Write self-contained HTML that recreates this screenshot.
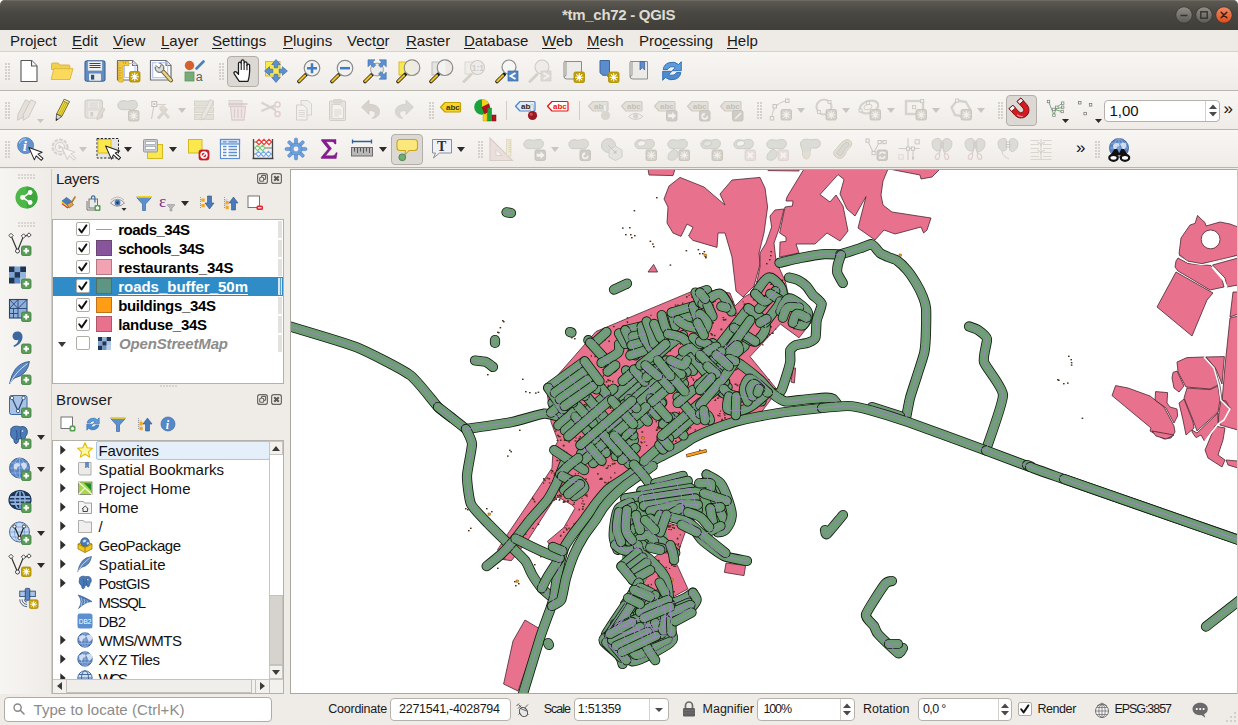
<!DOCTYPE html><html><head><meta charset="utf-8"><title>*tm_ch72 - QGIS</title><style>
html,body{margin:0;padding:0}
body{width:1238px;height:725px;overflow:hidden;background:#efebe7;font-family:"Liberation Sans",sans-serif;font-size:15px;color:#1a1a1a;position:relative}
.a{position:absolute}
.t{position:absolute;white-space:nowrap;line-height:1}
u{text-decoration:underline;text-underline-offset:2px;text-decoration-thickness:1px}
.tb{position:absolute;left:0;width:1238px;background:linear-gradient(#f8f6f3,#efece8)}
.sep{position:absolute;left:0;width:1238px;height:1px;background:#bab6b0}
.grip{position:absolute;width:5px;height:17px;background-image:radial-gradient(circle at 1px 1px,#c4bfb9 0.6px,transparent 0.9px);background-size:3px 3px}
.gripH{position:absolute;width:17px;height:5px;background-image:radial-gradient(circle at 1px 1px,#cbc6c0 0.6px,transparent 0.9px);background-size:3px 3px}
.ic{position:absolute;width:24px;height:24px;overflow:visible}
.ic16{position:absolute;width:16px;height:16px;overflow:visible}
.pressed{position:absolute;background:#dcd8d3;border:1px solid #b3aea7;border-radius:4px;box-sizing:border-box}
.dd{position:absolute;width:0;height:0;border-left:4.5px solid transparent;border-right:4.5px solid transparent;border-top:5px solid #2b2b2b}
.dd.dis{border-top-color:#c9c5c0}
.box{position:absolute;background:#fff;border:1px solid #b6b1aa;border-radius:4px;box-sizing:border-box}
.cb{position:absolute;width:14px;height:14px;background:#fff;border:1px solid #b0aca6;border-radius:2px;box-sizing:border-box}
</style></head><body>
<div class="a" style="left:0;top:0;width:1238px;height:8px;background:#fff"></div>
<div class="a" style="left:0;top:0;width:1238px;height:30px;background:linear-gradient(#5c5a52,#4a4843 40%,#3f3e3a);border-radius:5px 5px 0 0;box-shadow:inset 0 1px 0 #6d6a62"></div>
<div class="t" style="left:562.0px;top:7.0px;font-size:15px;letter-spacing:-0.289px;color:#dfdbd2;font-weight:bold;">*tm_ch72 - QGIS</div>
<svg class="a" style="left:1174px;top:5px;width:20px;height:20px" viewBox="0 0 20 20"><defs><linearGradient id="ggmin" x1="0" y1="0" x2="0" y2="1"><stop offset="0" stop-color="#8f8d85"/><stop offset="1" stop-color="#5e5c56"/></linearGradient></defs><circle cx="10" cy="10" r="8.6" fill="#3a3935"/><circle cx="10" cy="10" r="7.8" fill="url(#ggmin)"/><path d="M6.5 10.5h7" stroke="#34332f" stroke-width="1.5"/></svg>
<svg class="a" style="left:1194px;top:5px;width:20px;height:20px" viewBox="0 0 20 20"><defs><linearGradient id="ggmax" x1="0" y1="0" x2="0" y2="1"><stop offset="0" stop-color="#8f8d85"/><stop offset="1" stop-color="#5e5c56"/></linearGradient></defs><circle cx="10" cy="10" r="8.6" fill="#3a3935"/><circle cx="10" cy="10" r="7.8" fill="url(#ggmax)"/><rect x="6.8" y="6.8" width="6.4" height="6.4" fill="none" stroke="#34332f" stroke-width="1.4"/></svg>
<svg class="a" style="left:1214px;top:5px;width:20px;height:20px" viewBox="0 0 20 20"><defs><linearGradient id="gc" x1="0" y1="0" x2="0" y2="1"><stop offset="0" stop-color="#f08763"/><stop offset="1" stop-color="#df4d1b"/></linearGradient></defs><circle cx="10" cy="10" r="8.6" fill="#3a3935"/><circle cx="10" cy="10" r="7.8" fill="url(#gc)"/><path d="M7.2 7.2l5.6 5.6M12.8 7.2l-5.6 5.6" stroke="#3b1c10" stroke-width="1.5" stroke-linecap="round"/></svg>
<div class="a" style="left:0;top:30px;width:1238px;height:21px;background:#eeebe7"></div>
<div class="sep" style="top:51px;background:#d5d1cc"></div>
<div class="t" style="left:10px;top:33px;font-size:15px">Pro<u>j</u>ect</div>
<div class="t" style="left:72px;top:33px;font-size:15px"><u>E</u>dit</div>
<div class="t" style="left:113px;top:33px;font-size:15px"><u>V</u>iew</div>
<div class="t" style="left:161px;top:33px;font-size:15px"><u>L</u>ayer</div>
<div class="t" style="left:212px;top:33px;font-size:15px"><u>S</u>ettings</div>
<div class="t" style="left:283px;top:33px;font-size:15px"><u>P</u>lugins</div>
<div class="t" style="left:347px;top:33px;font-size:15px">Vect<u>o</u>r</div>
<div class="t" style="left:406px;top:33px;font-size:15px"><u>R</u>aster</div>
<div class="t" style="left:464px;top:33px;font-size:15px"><u>D</u>atabase</div>
<div class="t" style="left:542px;top:33px;font-size:15px"><u>W</u>eb</div>
<div class="t" style="left:587px;top:33px;font-size:15px"><u>M</u>esh</div>
<div class="t" style="left:639px;top:33px;font-size:15px">Pro<u>c</u>essing</div>
<div class="t" style="left:727px;top:33px;font-size:15px"><u>H</u>elp</div>
<div class="tb" style="top:52px;height:38px"></div><div class="sep" style="top:90px"></div>
<div class="tb" style="top:91px;height:38px"></div><div class="sep" style="top:129px"></div>
<div class="tb" style="top:130px;height:37px"></div><div class="sep" style="top:167px;background:#b7b3ad"></div>
<div class="grip" style="left:4.5px;top:62.5px"></div><svg class="a" style="left:17px;top:59px;width:24px;height:24px;overflow:visible" viewBox="0 0 24 24"><path d="M4 1.5h10.5l5.5 5.5v15.5h-16z" fill="#fff" stroke="#555" stroke-width="1.1" stroke-linejoin="round"/><path d="M14.5 1.5v5.5h5.5" fill="#f4f4f4" stroke="#555" stroke-width="1.1" stroke-linejoin="round"/></svg><svg class="a" style="left:50px;top:59px;width:24px;height:24px;overflow:visible" viewBox="0 0 24 24"><path d="M1.5 5.2q0-1.2 1.2-1.2h5.5l1.8 2h8.8q1 0 1 1v3.5h-18.3z" fill="#f3cf4e" stroke="#d9b03a" stroke-width="0.9"/><path d="M1.2 20.5l2.6-10.8h19.2l-3 10.8z" fill="#fad95b" stroke="#dcb440" stroke-width="0.9" stroke-linejoin="round"/></svg><svg class="a" style="left:83px;top:59px;width:24px;height:24px;overflow:visible" viewBox="0 0 24 24"><rect x="2" y="1.8" width="20" height="20.4" rx="2.2" fill="#5f8dc4" stroke="#3f6596" stroke-width="1.1"/><rect x="5" y="2.6" width="14" height="9" fill="#f1f1f1" stroke="#c8c8c8" stroke-width="0.5"/><path d="M6.500 4.500h11M6.500 6.500h11M6.500 8.500h11" stroke="#444" stroke-width="1"/><rect x="6" y="14.5" width="12" height="7.2" rx="0.8" fill="#e9e9e9"/><rect x="8" y="15.8" width="3.2" height="4.8" fill="#2f4f7d"/></svg><svg class="a" style="left:116px;top:59px;width:24px;height:24px;overflow:visible" viewBox="0 0 24 24"><path d="M1.500 1.500h15l5 5v14.500h-20z" fill="#fff" stroke="#6e6e6e" stroke-width="1.200" stroke-linejoin="round"/><path d="M16.500 1.500v5h5" fill="#f1f1f1" stroke="#6e6e6e" stroke-width="1.100" stroke-linejoin="round"/><rect x="8.500" y="4.500" width="10.500" height="14" fill="none" stroke="#b4c4f0" stroke-width="1"/><path d="M2.600 3.200q0-.800.800-.800h9.400v4.200h-5.600v15.800q0 .600-.600.600h-3.200q-.800 0-.800-.800z" fill="#f2c83c" stroke="#d3a51e" stroke-width="0.800"/><path d="M3 9h2.600M3 11.500h1.800M3 14h2.600M3 16.500h1.800M3 19h2.600M7.500 3v1.500M9.500 3v2" stroke="#c0941a" stroke-width="0.800"/><rect x="13.5" y="12.5" width="10.5" height="10.5" rx="1.6" fill="#c4a000" stroke="#a98b00" stroke-width="0.8"/><path d="M15.07 17.75L22.43 17.75M16.15 15.15L21.35 20.35M18.75 14.07L18.75 21.43M21.35 15.15L16.15 20.35" stroke="#fff" stroke-width="1.05" stroke-linecap="round"/><circle cx="18.75" cy="17.75" r="1.47" fill="#fff"/></svg><svg class="a" style="left:149px;top:59px;width:24px;height:24px;overflow:visible" viewBox="0 0 24 24"><path d="M1.500 1.500h15.500l5 5v14.500h-20.500z" fill="#fff" stroke="#6e6e6e" stroke-width="1.200" stroke-linejoin="round"/><path d="M17 1.500v5h5" fill="#f1f1f1" stroke="#6e6e6e" stroke-width="1.100" stroke-linejoin="round"/><rect x="3.700" y="3.700" width="15" height="15" fill="none" stroke="#aebff0" stroke-width="1.100"/><path d="M14 12.500l8 8.800" stroke="#6b5c2a" stroke-width="4.200" stroke-linecap="round"/><path d="M14 12.500l7.800 8.600" stroke="#e8d48a" stroke-width="2.600" stroke-linecap="round"/><circle cx="10.500" cy="9" r="4.400" fill="#d9d9d9" stroke="#555" stroke-width="1"/><path d="M10.400 9.400l-5-2.400l2.600-4.300l4.200 3.300z" fill="#fff"/><path d="M6.500 6.300l3.800 3l1.800-3.300" fill="none" stroke="#555" stroke-width="0.900" stroke-linejoin="round"/></svg><svg class="a" style="left:182px;top:59px;width:24px;height:24px;overflow:visible" viewBox="0 0 24 24"><circle cx="7.5" cy="6.5" r="4.7" fill="#d6602d"/><rect x="3" y="13" width="9" height="9" fill="#77ab79" stroke="#5c9460" stroke-width="0.8"/><path d="M14.5 9.5l7-7" stroke="#4a7fbe" stroke-width="2.6" stroke-linecap="round"/><text x="13.800" y="21.800" font-family="Liberation Sans,sans-serif" font-size="12.500" fill="#5e5e5e">a</text></svg><div class="grip" style="left:218.5px;top:62.5px"></div><div class="pressed" style="left:227px;top:56px;width:32px;height:31px"></div><svg class="a" style="left:231px;top:59px;width:24px;height:24px;overflow:visible" viewBox="0 0 24 24"><g transform="translate(-1.200 -1.400) scale(1.100)"><path d="M8.6 21.6c-1.2-1.6-3.4-5-4.6-6.8c-1-1.5 .9-2.9 2.2-1.5l1.7 2v-10c0-1.7 2.4-1.7 2.5 0v-1.8c0-1.8 2.6-1.8 2.6 0v1.600c.1-1.700 2.500-1.700 2.600 0v2c.1-1.600 2.300-1.500 2.400 0c.1 3.500 .5 8.500-1.500 14.500z" fill="#fff" stroke="#1c1c1c" stroke-width="1.15" stroke-linejoin="round"/><path d="M10.4 5.300v6M13 5.100v6.200M15.600 6.700v4.800" stroke="#1c1c1c" stroke-width="1"/></g></svg><svg class="a" style="left:264px;top:59px;width:24px;height:24px;overflow:visible" viewBox="0 0 24 24"><rect x="1.500" y="2.500" width="14.500" height="14.500" fill="#fbe84e" stroke="#d4b820" stroke-width="0.9"/><path transform="rotate(0 12 12)" d="M12 0.600l4.300 5h-2.500v3.200h-3.600v-3.200h-2.500z" fill="#5b8fd0" stroke="#3d6ca8" stroke-width="0.7" stroke-linejoin="round"/><path transform="rotate(90 12 12)" d="M12 0.600l4.300 5h-2.500v3.200h-3.600v-3.200h-2.500z" fill="#5b8fd0" stroke="#3d6ca8" stroke-width="0.7" stroke-linejoin="round"/><path transform="rotate(180 12 12)" d="M12 0.600l4.300 5h-2.500v3.200h-3.600v-3.200h-2.500z" fill="#5b8fd0" stroke="#3d6ca8" stroke-width="0.7" stroke-linejoin="round"/><path transform="rotate(270 12 12)" d="M12 0.600l4.300 5h-2.500v3.200h-3.600v-3.200h-2.500z" fill="#5b8fd0" stroke="#3d6ca8" stroke-width="0.7" stroke-linejoin="round"/></svg><svg class="a" style="left:297px;top:59px;width:24px;height:24px;overflow:visible" viewBox="0 0 24 24"><path d="M9.300 15.200L2 22.500" stroke="#1a1a1a" stroke-width="3.600" stroke-linecap="round"/><path d="M8 16.500L2.200 22.300" stroke="#f0c020" stroke-width="2.200" stroke-linecap="round"/><circle cx="15" cy="9.2" r="7.8" fill="#f2f2f0" stroke="#8a8a86" stroke-width="1.2"/><path d="M10 9.200h10M15 4.200v10" stroke="#3f7cc4" stroke-width="2.500"/></svg><svg class="a" style="left:330px;top:59px;width:24px;height:24px;overflow:visible" viewBox="0 0 24 24"><path d="M9.300 15.200L2 22.500" stroke="#1a1a1a" stroke-width="3.600" stroke-linecap="round"/><path d="M8 16.500L2.200 22.300" stroke="#f0c020" stroke-width="2.200" stroke-linecap="round"/><circle cx="15" cy="9.2" r="7.8" fill="#f2f2f0" stroke="#8a8a86" stroke-width="1.2"/><path d="M10 9.200h10" stroke="#3f7cc4" stroke-width="2.500"/></svg><svg class="a" style="left:363px;top:59px;width:24px;height:24px;overflow:visible" viewBox="0 0 24 24"><path d="M9.300 15.200L2 22.500" stroke="#1a1a1a" stroke-width="3.600" stroke-linecap="round"/><path d="M8 16.500L2.200 22.300" stroke="#f0c020" stroke-width="2.200" stroke-linecap="round"/><circle cx="14" cy="10.500" r="6.400" fill="#ececea" stroke="#9a9a96" stroke-width="1"/><path d="M5 0.800h7l-2.300 2.300l3 3l-2.400 2.400l-3-3l-2.300 2.300z" fill="#5b8fd0" stroke="#3d6ca8" stroke-width="0.600"/><path d="M23.200 0.800v7l-2.300-2.300l-3 3l-2.400-2.400l3-3l-2.300-2.300z" fill="#5b8fd0" stroke="#3d6ca8" stroke-width="0.600"/><path d="M23.200 20.200h-7l2.300-2.300l-3-3l2.400-2.400l3 3l2.300-2.300z" fill="#5b8fd0" stroke="#3d6ca8" stroke-width="0.600"/></svg><svg class="a" style="left:396px;top:59px;width:24px;height:24px;overflow:visible" viewBox="0 0 24 24"><rect x="3" y="3" width="12" height="13" fill="#fbe84e" stroke="#d4b820" stroke-width="0.9"/><path d="M9.300 15.200L2 22.500" stroke="#1a1a1a" stroke-width="3.600" stroke-linecap="round"/><path d="M8 16.500L2.200 22.300" stroke="#f0c020" stroke-width="2.200" stroke-linecap="round"/><circle cx="16" cy="8.7" r="7.8" fill="#eceae6" stroke="#8a8a86" stroke-width="1.2"/><path d="M16.500 1.400a7.300 7.300 0 0 0 0 14.600z" fill="#f0ecd4" opacity=".85"/></svg><svg class="a" style="left:429px;top:59px;width:24px;height:24px;overflow:visible" viewBox="0 0 24 24"><rect x="3" y="3" width="12" height="13" fill="#e4e4e2" stroke="#b9b9b5" stroke-width="0.9"/><path d="M9.300 15.200L2 22.500" stroke="#1a1a1a" stroke-width="3.600" stroke-linecap="round"/><path d="M8 16.500L2.200 22.300" stroke="#f0c020" stroke-width="2.200" stroke-linecap="round"/><circle cx="16" cy="8.7" r="7.8" fill="#eceae6" stroke="#8a8a86" stroke-width="1.2"/><path d="M16.500 1.400a7.300 7.300 0 0 0 0 14.600z" fill="#f4f4f2" opacity=".9"/></svg><svg class="a" style="left:462px;top:59px;width:24px;height:24px;overflow:visible" viewBox="0 0 24 24"><rect x="3" y="3" width="12" height="12" fill="#efede9" stroke="#d6d2cc" stroke-width="0.8"/><path d="M9 15.5L2 22.500" stroke="#d5d1ca" stroke-width="3" stroke-linecap="round"/><circle cx="15.5" cy="8.5" r="7" fill="#eeece9" stroke="#cfcbc5" stroke-width="1.1"/><text x="9.800" y="12.200" font-family="Liberation Sans,sans-serif" font-weight="bold" font-size="8.500" fill="#cfcbc5">1:1</text></svg><svg class="a" style="left:495px;top:59px;width:24px;height:24px;overflow:visible" viewBox="0 0 24 24"><path d="M9.300 15.200L2 22.500" stroke="#1a1a1a" stroke-width="3.600" stroke-linecap="round"/><path d="M8 16.500L2.200 22.300" stroke="#f0c020" stroke-width="2.200" stroke-linecap="round"/><circle cx="14" cy="8" r="7" fill="#f6f6f4" stroke="#8a8a86" stroke-width="1.2"/><rect x="13" y="12" width="10" height="10" fill="#4f86c6" stroke="#3a69a4" stroke-width="0.700"/><path d="M20.500 14l-5 3l5 3" fill="none" stroke="#fff" stroke-width="1.900"/></svg><svg class="a" style="left:528px;top:59px;width:24px;height:24px;overflow:visible" viewBox="0 0 24 24"><path d="M9 15.5L2 22.500" stroke="#d5d1ca" stroke-width="3" stroke-linecap="round"/><circle cx="14" cy="8" r="7" fill="#eeece9" stroke="#cfcbc5" stroke-width="1.1"/><rect x="13" y="12" width="10" height="10" fill="#dcd9d4" stroke="#d0ccc6" stroke-width="0.700"/><path d="M15.500 14l5 3l-5 3" fill="none" stroke="#f3f1ee" stroke-width="1.900"/></svg><svg class="a" style="left:561px;top:59px;width:24px;height:24px;overflow:visible" viewBox="0 0 24 24"><path d="M5 2.500h15.500v17.500h-14.500q-3 .3-3-2.800v-14q.2-1.500 2-.7z" fill="#ecebe8" stroke="#8c8c88" stroke-width="1" stroke-linejoin="round"/><path d="M5 2.500v14q-1.700 .1-2 1.600" fill="none" stroke="#8c8c88" stroke-width="0.900"/><rect x="13" y="13" width="10.5" height="10.5" rx="1.6" fill="#c4a000" stroke="#a98b00" stroke-width="0.8"/><path d="M14.57 18.25L21.93 18.25M15.65 15.65L20.85 20.85M18.25 14.57L18.25 21.93M20.85 15.65L15.65 20.85" stroke="#fff" stroke-width="1.05" stroke-linecap="round"/><circle cx="18.25" cy="18.25" r="1.47" fill="#fff"/></svg><svg class="a" style="left:596px;top:59px;width:24px;height:24px;overflow:visible" viewBox="0 0 24 24"><path d="M1.500 1.500h9.500v17l-3-2.200h-3.700l-2.800-2.500z" fill="#5b8ccc" stroke="#3c679f" stroke-width="1" stroke-linejoin="round" transform="translate(2.500 0)"/><rect x="12.5" y="13" width="10.5" height="10.5" rx="1.6" fill="#c4a000" stroke="#a98b00" stroke-width="0.8"/><path d="M14.07 18.25L21.43 18.25M15.15 15.65L20.35 20.85M17.75 14.57L17.75 21.93M20.35 15.65L15.15 20.85" stroke="#fff" stroke-width="1.05" stroke-linecap="round"/><circle cx="17.75" cy="18.25" r="1.47" fill="#fff"/></svg><svg class="a" style="left:627px;top:59px;width:24px;height:24px;overflow:visible" viewBox="0 0 24 24"><path d="M5 2.500h15.500v17.500h-14.500q-3 .3-3-2.800v-14q.2-1.500 2-.7z" fill="#ecebe8" stroke="#8c8c88" stroke-width="1" stroke-linejoin="round"/><path d="M5 2.500v14q-1.700 .1-2 1.600" fill="none" stroke="#8c8c88" stroke-width="0.900"/><path d="M13 2.500h4.600v8.500l-2.300-2.400l-2.300 2.400z" fill="#5b8ccc" stroke="#3c679f" stroke-width="0.800"/></svg><svg class="a" style="left:660px;top:59px;width:24px;height:24px;overflow:visible" viewBox="0 0 24 24"><path d="M3.200 10.500a9 8 0 0 1 15.300-5l2.800-2.800v9h-9.200l3.200-3.200a5.200 4.500 0 0 0-7.800 2z" fill="#5d9bdc" stroke="#2f6cb0" stroke-width="0.900" stroke-linejoin="round"/><path d="M20.800 13.500a9 8 0 0 1-15.300 5l-2.800 2.800v-9h9.200l-3.200 3.200a5.200 4.500 0 0 0 7.800-2z" fill="#4c8bd0" stroke="#2f6cb0" stroke-width="0.900" stroke-linejoin="round"/></svg><div class="grip" style="left:4.5px;top:101.5px"></div><svg class="a" style="left:16px;top:98px;width:24px;height:24px;overflow:visible" viewBox="0 0 24 24"><path transform="translate(-4 0)" d="M13.500 1.800l5 2.300l-7.500 15l-5.500 3.200l.5-6.200z" fill="#e4dfd9" stroke="#c6c2bc" stroke-width="0.800" stroke-linejoin="round"/><path transform="translate(1.5 0)" d="M13.500 1.800l5 2.300l-7.500 15l-5.500 3.200l.5-6.200z" fill="#e9e4de" stroke="#c6c2bc" stroke-width="0.800" stroke-linejoin="round"/></svg><svg class="a" style="left:49.5px;top:98px;width:24px;height:24px;overflow:visible" viewBox="0 0 24 24"><path d="M14.200 1.300l5.200 2.400l-7.600 14.800l-5.200-2.500z" fill="#f0da3c" stroke="#6b6420" stroke-width="0.900" stroke-linejoin="round"/><path d="M16 2.200l-7.500 14.800M17.800 3l-7.600 14.800" stroke="#b3a320" stroke-width="0.800"/><path d="M14.200 1.300l5.200 2.400l-.9 1.800l-5.200-2.500z" fill="#f8f4c8" stroke="#6b6420" stroke-width="0.700"/><path d="M6.600 16l5.200 2.500l-5.800 4.200z" fill="#d8d8d8" stroke="#444" stroke-width="0.800" stroke-linejoin="round"/><path d="M6.200 20.200l2 1l-2.200 1.500z" fill="#222"/></svg><svg class="a" style="left:83px;top:98px;width:24px;height:24px;overflow:visible" viewBox="0 0 24 24"><rect x="2" y="2" width="17.500" height="18" rx="2" fill="#e2dfda" stroke="#cfcbc5" stroke-width="1"/><rect x="5" y="3" width="11.500" height="7.500" fill="#efedea" stroke="#d6d2cd" stroke-width="0.500"/><path d="M6.500 5h8.500M6.500 7h8.500M6.500 9h8.500" stroke="#d0ccc6" stroke-width="0.800"/><rect x="5.500" y="13" width="10" height="6.500" fill="#edebe7"/><rect x="7.500" y="14" width="2.600" height="4.400" fill="#d0ccc6"/><path d="M19 9.500l3 1.500l-5 9l-3 2l.2-3.500z" fill="#e2d9d2" stroke="#cfc6bf" stroke-width="0.700"/></svg><svg class="a" style="left:116px;top:98px;width:24px;height:24px;overflow:visible" viewBox="0 0 24 24"><path d="M2 8.500c-1-4 3-6.800 7.500-5.500c3 .9 4.500-.8 8-.6c4 .3 4.800 4.600 3 7.300c-1.500 2.200-5 2.600-8.500 2c-3.500-.5-8.700 1.300-10-3.200z" fill="#dcdcd6" stroke="#c6c6c0" stroke-width="0.900"/><rect x="12.5" y="12.5" width="10.5" height="10.5" rx="1.6" fill="#d4d0c8" stroke="#c4bfb6" stroke-width="0.8"/><path d="M14.07 17.75L21.43 17.75M15.15 15.15L20.35 20.35M17.75 14.07L17.75 21.43M20.35 15.15L15.15 20.35" stroke="#f1efec" stroke-width="1.05" stroke-linecap="round"/><circle cx="17.75" cy="17.75" r="1.47" fill="#f1efec"/></svg><svg class="a" style="left:149px;top:98px;width:24px;height:24px;overflow:visible" viewBox="0 0 24 24"><path d="M5 7l-2.500 14" stroke="#cfcbc5" stroke-width="1"/><path d="M6 6.500h11" stroke="#d9cfcb" stroke-width="1.100"/><rect x="2.800" y="3.500" width="5" height="5" fill="#f3f1ee" stroke="#c2beb8" stroke-width="1"/><circle cx="5.300" cy="6" r="1" fill="#c2beb8"/><path d="M9 20.500l9-10" stroke="#d8d4cd" stroke-width="3.200"/><path d="M11 10l9 10" stroke="#dbd7cf" stroke-width="3.200"/><path d="M9.500 8.500l5-1.500l3 3l-2.500 3z" fill="#dedad4"/></svg><svg class="a" style="left:193px;top:98px;width:24px;height:24px;overflow:visible" viewBox="0 0 24 24"><rect x="1.500" y="3" width="19" height="5" fill="#e3e0d6" stroke="#d3cfc5" stroke-width="0.800"/><rect x="1.500" y="9.700" width="19" height="5" fill="#e3e0d6" stroke="#d3cfc5" stroke-width="0.800"/><rect x="1.500" y="16.400" width="19" height="5" fill="#e3e0d6" stroke="#d3cfc5" stroke-width="0.800"/><path d="M17 1.500l3.500 1.700l-8 16l-4 2.800l.3-4.700z" fill="#e9e5e0" stroke="#d2cdc7" stroke-width="0.800"/></svg><svg class="a" style="left:226px;top:98px;width:24px;height:24px;overflow:visible" viewBox="0 0 24 24"><rect x="3" y="2.500" width="13" height="6" fill="#e6e3de" stroke="#d6d2cc" stroke-width="0.800"/><path d="M2.500 6h19" stroke="#d9c9c9" stroke-width="1.600"/><path d="M4.500 8.500h15l-1.500 13.500h-12z" fill="#efe6e6" stroke="#dccccc" stroke-width="1.300"/><path d="M8.500 10.500v9.500M12 10.500v9.500M15.500 10.500v9.500" stroke="#dccccc" stroke-width="1.300"/></svg><svg class="a" style="left:260px;top:98px;width:24px;height:24px;overflow:visible" viewBox="0 0 24 24"><path d="M1.500 4.500l14 7.500M1.500 13l13-5.500" stroke="#d7d3cd" stroke-width="2"/><circle cx="17.500" cy="6.500" r="2.600" fill="none" stroke="#e0cfcf" stroke-width="1.500"/><circle cx="17.500" cy="16" r="2.600" fill="none" stroke="#e0cfcf" stroke-width="1.500"/><path d="M13 9l3 5" stroke="#e0cfcf" stroke-width="1.500"/></svg><svg class="a" style="left:293px;top:98px;width:24px;height:24px;overflow:visible" viewBox="0 0 24 24"><path d="M8 2.500h7l3.500 3.500v11h-10.500z" fill="#f1efec" stroke="#d3cfc9" stroke-width="0.900"/><path d="M3.500 7h7l3.500 3.500v11.500h-10.500z" fill="#f3f1ee" stroke="#cfcbc5" stroke-width="0.900"/><path d="M5.500 12.500h6.500M5.500 14.500h6.500M5.500 16.500h6.500M5.500 18.500h6.500" stroke="#d6d2cc" stroke-width="0.800"/></svg><svg class="a" style="left:326px;top:98px;width:24px;height:24px;overflow:visible" viewBox="0 0 24 24"><rect x="3.500" y="3" width="16" height="19.500" rx="1" fill="#e7e4df" stroke="#d1cdc7" stroke-width="1"/><rect x="7.500" y="1.500" width="8" height="3.500" rx="0.800" fill="#dcd8d2" stroke="#d1cdc7" stroke-width="0.700"/><path d="M6 6.500h8l3.500 3v11h-11.500z" fill="#f4f2ef" stroke="#d1cdc7" stroke-width="0.800"/><path d="M8 12h7.500M8 14h7.500M8 16h7.500M8 18h5" stroke="#d6d2cc" stroke-width="0.800"/></svg><svg class="a" style="left:359px;top:98px;width:24px;height:24px;overflow:visible" viewBox="0 0 24 24"><path d="M2.500 9l7.500-7v4.300c6 0 10.500 2.500 10.500 7.200c0 4-3 6.500-7.500 6.800c2.500-1.500 3.300-3 3.300-4.500c0-2.200-2.500-3.300-6.300-3.300v4z" fill="#d8d2cd" stroke="#ccc6c1" stroke-width="0.700" stroke-linejoin="round"/></svg><svg class="a" style="left:392px;top:98px;width:24px;height:24px;overflow:visible" viewBox="0 0 24 24"><path d="M21.500 9l-7.500-7v4.300c-6 0-10.500 2.500-10.500 7.200c0 4 3 6.500 7.500 6.800c-2.500-1.500-3.300-3-3.300-4.500c0-2.200 2.500-3.300 6.300-3.300v4z" fill="#d7d8d3" stroke="#cbccc7" stroke-width="0.700" stroke-linejoin="round"/></svg><svg class="a" style="left:36.5px;top:119px;width:7px;height:4px" viewBox="0 0 7 4"><path d="M0 0h7l-3.500 4z" fill="#c9c5c0"/></svg><div class="dd dis" style="left:178px;top:108px"></div><div class="grip" style="left:429px;top:101.5px"></div><svg class="a" style="left:439px;top:98px;width:24px;height:24px;overflow:visible" viewBox="0 0 24 24"><path transform="translate(1 3)" d="M5 1.500h14.5q1 0 1 1v7.500q0 1-1 1h-14.5l-4.500-4.750z" fill="#f5d628" stroke="#c4a000" stroke-width="1.200" stroke-linejoin="round"/><text x="7" y="12.2" font-family="Liberation Sans,sans-serif" font-weight="bold" font-size="8" fill="#3a3000">abc</text></svg><svg class="a" style="left:473px;top:98px;width:24px;height:24px;overflow:visible" viewBox="0 0 24 24"><circle cx="9" cy="9" r="7.800" fill="#19a33a"/><path d="M9 9v-7.800a7.800 7.800 0 0 1 7 4.400z" fill="#f4d21c"/><path d="M9 9l7-3.400a7.800 7.800 0 0 1-4 10.600z" fill="#b5121b"/><path d="M9 9l3 7.200" stroke="#7a0c12" stroke-width="0.500"/><rect x="10" y="16" width="4" height="7" fill="#f4d21c" stroke="#c6a60e" stroke-width="0.500"/><rect x="14.500" y="10" width="4" height="13" fill="#19a33a" stroke="#0e7a27" stroke-width="0.500"/><rect x="19" y="17" width="4" height="6" fill="#b5121b" stroke="#7a0c12" stroke-width="0.500"/></svg><svg class="a" style="left:514px;top:98px;width:24px;height:24px;overflow:visible" viewBox="0 0 24 24"><path transform="translate(1 2)" d="M5 1.500h14q1 0 1 1v7.500q0 1-1 1h-14l-4.500-4.750z" fill="#e1ecfa" stroke="#4a86cf" stroke-width="1.200" stroke-linejoin="round"/><text x="7" y="11.2" font-family="Liberation Sans,sans-serif" font-weight="bold" font-size="8" fill="#222">ab</text><rect x="16.700" y="6.500" width="2.600" height="8" rx="1.300" fill="#f1f1f1" stroke="#9a9a9a" stroke-width="0.500"/><circle cx="18.500" cy="17.500" r="4.600" fill="#9a1a22"/><circle cx="17.200" cy="16.200" r="1.500" fill="#c4545b"/></svg><svg class="a" style="left:546px;top:98px;width:24px;height:24px;overflow:visible" viewBox="0 0 24 24"><path transform="translate(1 2)" d="M5 1.500h15q1 0 1 1v7.500q0 1-1 1h-15l-4.500-4.750z" fill="#fff" stroke="#e11" stroke-width="1.200" stroke-linejoin="round"/><text x="7" y="11.2" font-family="Liberation Sans,sans-serif" font-weight="bold" font-size="8" fill="#e11">abc</text></svg><svg class="a" style="left:587px;top:98px;width:24px;height:24px;overflow:visible" viewBox="0 0 24 24"><path transform="translate(1 2)" d="M5 1.500h14q1 0 1 1v7.500q0 1-1 1h-14l-4.500-4.750z" fill="#e3e0da" stroke="#d0ccc5" stroke-width="1.200" stroke-linejoin="round"/><text x="7" y="11.2" font-family="Liberation Sans,sans-serif" font-weight="bold" font-size="8" fill="#c3bfb8">ab</text><rect x="16.700" y="6.500" width="2.600" height="8" rx="1.300" fill="#f1f1f1" stroke="#d0ccc5" stroke-width="0.500"/><circle cx="18.500" cy="17.500" r="4.600" fill="#d9d5cf"/></svg><svg class="a" style="left:620px;top:98px;width:24px;height:24px;overflow:visible" viewBox="0 0 24 24"><path transform="translate(1 2)" d="M5 1.500h15q1 0 1 1v7.500q0 1-1 1h-15l-4.500-4.750z" fill="#e3e0da" stroke="#d0ccc5" stroke-width="1.200" stroke-linejoin="round"/><text x="7" y="11.2" font-family="Liberation Sans,sans-serif" font-weight="bold" font-size="8" fill="#c3bfb8">abc</text><path d="M8.500 18.500q7-6.500 14.500 0q-7.500 6-14.500 0z" fill="#f1efec" stroke="#cfcbc5" stroke-width="0.900"/><circle cx="15.700" cy="18.300" r="2.500" fill="#d6d2cc"/></svg><svg class="a" style="left:653px;top:98px;width:24px;height:24px;overflow:visible" viewBox="0 0 24 24"><path transform="translate(1 2)" d="M5 1.500h15q1 0 1 1v7.500q0 1-1 1h-15l-4.500-4.750z" fill="#e3e0da" stroke="#d0ccc5" stroke-width="1.200" stroke-linejoin="round"/><text x="7" y="11.2" font-family="Liberation Sans,sans-serif" font-weight="bold" font-size="8" fill="#c3bfb8">abc</text><rect x="13.5" y="12.5" width="10.5" height="10.5" rx="1.8" fill="#cfccc6" stroke="#c2beb7" stroke-width="0.8"/><path d="M15.1 16.25h4v-2.2l4 3.7l-4 3.7v-2.2h-4z" fill="#f3f1ee"/></svg><svg class="a" style="left:686px;top:98px;width:24px;height:24px;overflow:visible" viewBox="0 0 24 24"><path transform="translate(1 2)" d="M5 1.500h15q1 0 1 1v7.500q0 1-1 1h-15l-4.500-4.750z" fill="#e3e0da" stroke="#d0ccc5" stroke-width="1.200" stroke-linejoin="round"/><text x="7" y="11.2" font-family="Liberation Sans,sans-serif" font-weight="bold" font-size="8" fill="#c3bfb8">abc</text><rect x="13.5" y="12.5" width="10.5" height="10.5" rx="1.8" fill="#cfccc6" stroke="#c2beb7" stroke-width="0.8"/><path d="M21.35 18.35a2.6 2.6 0 1 1 -2.6 -2.6" fill="none" stroke="#f3f1ee" stroke-width="1.6"/><path d="M18.95 17.15l-2.6 0l1.3 -2.4z" fill="#f3f1ee"/></svg><svg class="a" style="left:719px;top:98px;width:24px;height:24px;overflow:visible" viewBox="0 0 24 24"><path transform="translate(1 2)" d="M5 1.500h15q1 0 1 1v7.500q0 1-1 1h-15l-4.500-4.750z" fill="#e3e0da" stroke="#d0ccc5" stroke-width="1.200" stroke-linejoin="round"/><text x="7" y="11.2" font-family="Liberation Sans,sans-serif" font-weight="bold" font-size="8" fill="#c3bfb8">abc</text><rect x="13.500" y="12.500" width="10.500" height="10.500" rx="1.800" fill="#cfccc6" stroke="#c2beb7" stroke-width="0.800"/><path d="M21.500 14.500l1 1l-5 5l-2 1l1-2z" fill="#f3f1ee"/></svg><div class="a" style="left:506px;top:101px;width:1px;height:19px;background:#d1cdc7"></div><div class="a" style="left:579px;top:101px;width:1px;height:19px;background:#d1cdc7"></div><div class="grip" style="left:756.5px;top:101.5px"></div><svg class="a" style="left:769px;top:98px;width:24px;height:24px;overflow:visible" viewBox="0 0 24 24"><path d="M3 20q0-14 15-17.500" fill="none" stroke="#d3d0ca" stroke-width="1.100"/><rect x="1.200" y="18.500" width="3.500" height="3.500" fill="#f1efec" stroke="#c9c5bf"/><rect x="4" y="6.500" width="3.500" height="3.500" fill="#f1efec" stroke="#c9c5bf"/><rect x="16.500" y="1" width="3.500" height="3.500" fill="#f1efec" stroke="#c9c5bf"/><rect x="12" y="11.5" width="10.5" height="10.5" rx="1.6" fill="#d4d0c8" stroke="#c4bfb6" stroke-width="0.8"/><path d="M13.57 16.75L20.93 16.75M14.65 14.15L19.85 19.35M17.25 13.07L17.25 20.43M19.85 14.15L14.65 19.35" stroke="#f1efec" stroke-width="1.05" stroke-linecap="round"/><circle cx="17.25" cy="16.75" r="1.47" fill="#f1efec"/></svg><div class="dd dis" style="left:796.5px;top:108px"></div><svg class="a" style="left:813.5px;top:98px;width:24px;height:24px;overflow:visible" viewBox="0 0 24 24"><circle cx="10" cy="9" r="7.500" fill="none" stroke="#d6d3cd" stroke-width="2.200"/><rect x="14" y="2.500" width="3" height="3" fill="#f1efec" stroke="#c9c5bf" stroke-width="0.800"/><rect x="3.500" y="12.500" width="3" height="3" fill="#f1efec" stroke="#c9c5bf" stroke-width="0.800"/><rect x="12" y="11.5" width="10.5" height="10.5" rx="1.6" fill="#d4d0c8" stroke="#c4bfb6" stroke-width="0.8"/><path d="M13.57 16.75L20.93 16.75M14.65 14.15L19.85 19.35M17.25 13.07L17.25 20.43M19.85 14.15L14.65 19.35" stroke="#f1efec" stroke-width="1.05" stroke-linecap="round"/><circle cx="17.25" cy="16.75" r="1.47" fill="#f1efec"/></svg><div class="dd dis" style="left:841.5px;top:108px"></div><svg class="a" style="left:858px;top:98px;width:24px;height:24px;overflow:visible" viewBox="0 0 24 24"><ellipse cx="11" cy="9" rx="9.500" ry="6" transform="rotate(-18 11 9)" fill="none" stroke="#d6d3cd" stroke-width="2.200"/><ellipse cx="10" cy="9" rx="4" ry="2.500" transform="rotate(-18 10 9)" fill="none" stroke="#d6d3cd" stroke-width="1.100"/><rect x="8.500" y="3.500" width="3" height="3" fill="#f1efec" stroke="#c9c5bf" stroke-width="0.800"/><rect x="1" y="11" width="3" height="3" fill="#f1efec" stroke="#c9c5bf" stroke-width="0.800"/><rect x="12" y="11.5" width="10.5" height="10.5" rx="1.6" fill="#d4d0c8" stroke="#c4bfb6" stroke-width="0.8"/><path d="M13.57 16.75L20.93 16.75M14.65 14.15L19.85 19.35M17.25 13.07L17.25 20.43M19.85 14.15L14.65 19.35" stroke="#f1efec" stroke-width="1.05" stroke-linecap="round"/><circle cx="17.25" cy="16.75" r="1.47" fill="#f1efec"/></svg><div class="dd dis" style="left:886.5px;top:108px"></div><svg class="a" style="left:904px;top:98px;width:24px;height:24px;overflow:visible" viewBox="0 0 24 24"><rect x="2" y="3" width="17" height="13" fill="none" stroke="#d6d3cd" stroke-width="2.400"/><rect x="16.500" y="1.500" width="3.200" height="3.200" fill="#f1efec" stroke="#c9c5bf" stroke-width="0.800"/><rect x="8.500" y="7.500" width="3.200" height="3.200" fill="#f1efec" stroke="#c9c5bf" stroke-width="0.800"/><rect x="12" y="11.5" width="10.5" height="10.5" rx="1.6" fill="#d4d0c8" stroke="#c4bfb6" stroke-width="0.8"/><path d="M13.57 16.75L20.93 16.75M14.65 14.15L19.85 19.35M17.25 13.07L17.25 20.43M19.85 14.15L14.65 19.35" stroke="#f1efec" stroke-width="1.05" stroke-linecap="round"/><circle cx="17.25" cy="16.75" r="1.47" fill="#f1efec"/></svg><div class="dd dis" style="left:931.5px;top:108px"></div><svg class="a" style="left:949px;top:98px;width:24px;height:24px;overflow:visible" viewBox="0 0 24 24"><path d="M8 2.500l9 1.500l4.500 8l-6 6.500l-9.500-1.500l-3.500-7.500z" fill="none" stroke="#d6d3cd" stroke-width="2.400" stroke-linejoin="round"/><rect x="6.500" y="1" width="3.200" height="3.200" fill="#f1efec" stroke="#c9c5bf" stroke-width="0.800"/><rect x="12" y="11.5" width="10.5" height="10.5" rx="1.6" fill="#d4d0c8" stroke="#c4bfb6" stroke-width="0.8"/><path d="M13.57 16.75L20.93 16.75M14.65 14.15L19.85 19.35M17.25 13.07L17.25 20.43M19.85 14.15L14.65 19.35" stroke="#f1efec" stroke-width="1.05" stroke-linecap="round"/><circle cx="17.25" cy="16.75" r="1.47" fill="#f1efec"/></svg><div class="dd dis" style="left:976.5px;top:108px"></div><div class="grip" style="left:997.5px;top:101.5px"></div><div class="pressed" style="left:1006px;top:95px;width:31px;height:31px"></div><svg class="a" style="left:1009px;top:98px;width:24px;height:24px;overflow:visible" viewBox="0 0 24 24"><g transform="rotate(-42 12 12)"><path d="M4 3h5.200v9a2.800 2.800 0 0 0 5.600 0v-9h5.200v9a8 8 0 0 1-16 0z" fill="#d71920" stroke="#7a0c10" stroke-width="0.900" stroke-linejoin="round"/><path d="M4 3h5.200v3.800h-5.200zM14.800 3h5.200v3.800h-5.200z" fill="#f3f3f3" stroke="#7a0c10" stroke-width="0.900" stroke-linejoin="round"/><path d="M6 13a6 6 0 0 0 3 5" fill="none" stroke="#f08a8e" stroke-width="1.300"/></g></svg><svg class="a" style="left:1046px;top:99px;width:20px;height:20px;overflow:visible" viewBox="0 0 24 24"><path d="M3 3l6.500 16l3.500-9.500M9.500 12.500l10-7.500M9.500 12.500l10-2.500M9.500 12.500l9.500 2.500" fill="none" stroke="#6fae72" stroke-width="1.200"/><rect x="1.5" y="1.5" width="3" height="3" fill="#f4f4f2" stroke="#777" stroke-width="0.800"/><rect x="8" y="18" width="3" height="3" fill="#f4f4f2" stroke="#777" stroke-width="0.800"/><rect x="11.5" y="8.5" width="3" height="3" fill="#f4f4f2" stroke="#777" stroke-width="0.800"/><rect x="18.5" y="3.5" width="3" height="3" fill="#f4f4f2" stroke="#777" stroke-width="0.800"/><rect x="18.5" y="8.5" width="3" height="3" fill="#f4f4f2" stroke="#777" stroke-width="0.800"/><rect x="18" y="13.5" width="3" height="3" fill="#f4f4f2" stroke="#777" stroke-width="0.800"/><rect x="8" y="11" width="3" height="3" fill="#f4f4f2" stroke="#777" stroke-width="0.800"/></svg><svg class="a" style="left:1061.5px;top:118.5px;width:7px;height:4px" viewBox="0 0 7 4"><path d="M0 0h7l-3.500 4z" fill="#2b2b2b"/></svg><svg class="a" style="left:1076px;top:99px;width:20px;height:20px;overflow:visible" viewBox="0 0 24 24"><rect x="3" y="3" width="3" height="3" fill="#f4f4f2" stroke="#777" stroke-width="0.900"/><rect x="16" y="5.5" width="3" height="3" fill="#f4f4f2" stroke="#777" stroke-width="0.900"/><rect x="9.5" y="16" width="3" height="3" fill="#f4f4f2" stroke="#777" stroke-width="0.900"/></svg><svg class="a" style="left:1094.5px;top:118.5px;width:7px;height:4px" viewBox="0 0 7 4"><path d="M0 0h7l-3.500 4z" fill="#2b2b2b"/></svg><div class="box" style="left:1104px;top:99.500px;width:116px;height:22px"></div><div class="a" style="left:1205px;top:100.500px;width:1px;height:20px;background:#d4d0ca"></div><svg class="a" style="left:1208.500px;top:104px;width:8px;height:13px" viewBox="0 0 8 13"><path d="M0 5L4 0.500L8 5zM0 8L4 12.500L8 8z" fill="#4a4a4a"/></svg><div class="t" style="left:1109.5px;top:103.0px;font-size:15px;letter-spacing:-0.065px;color:#111;">1,00</div><div class="t" style="left:1223.5px;top:100.0px;font-size:17px;letter-spacing:-0.455px;color:#111;">»</div><div class="grip" style="left:4.5px;top:140.5px"></div><svg class="a" style="left:17px;top:137px;width:24px;height:24px;overflow:visible" viewBox="0 0 24 24"><circle cx="8.600" cy="8.600" r="8" fill="#6494d0" stroke="#4a79b8" stroke-width="0.800"/><path d="M2.500 6a6.500 6.500 0 0 1 6-4" fill="none" stroke="#9dbbe2" stroke-width="1.400" stroke-linecap="round"/><text x="5.800" y="14" font-family="Liberation Serif,serif" font-style="italic" font-weight="bold" font-size="15" fill="#fff">i</text><path transform="translate(11.9 10.5) rotate(-24) scale(1.08)" d="M0 0v12.500l3-2.700l2.600 5.700l2.200-1l-2.600-5.500h4.200z" fill="#fff" stroke="#222" stroke-width="0.900" stroke-linejoin="round"/></svg><svg class="a" style="left:50px;top:137px;width:24px;height:24px;overflow:visible" viewBox="0 0 24 24"><circle cx="10" cy="10" r="7.500" fill="#edebe8" stroke="#d4d0ca" stroke-width="2" stroke-dasharray="3.400 1.500"/><circle cx="10" cy="10" r="4.600" fill="#f4f2ef" stroke="#d4d0ca" stroke-width="1"/><path d="M8.500 7.500l4 2.500l-4 2.500z" fill="#d4d0ca"/><path transform="translate(12 10.500) rotate(-24) scale(1.050)" d="M0 0v12.500l3-2.700l2.600 5.700l2.200-1l-2.600-5.500h4.200z" fill="#f6f4f1" stroke="#d4d0ca" stroke-width="0.900" stroke-linejoin="round"/></svg><svg class="a" style="left:96px;top:137px;width:24px;height:24px;overflow:visible" viewBox="0 0 24 24"><rect x="1" y="1.500" width="21.500" height="19.500" fill="#e4e4e4" stroke="#222" stroke-width="1" stroke-dasharray="2.200 1.600"/><rect x="2" y="2.500" width="13" height="13.500" fill="#fbe84e" stroke="#d4b820" stroke-width="0.900"/><path transform="translate(9.6 9) rotate(-24) scale(1.15)" d="M0 0v12.500l3-2.700l2.600 5.700l2.200-1l-2.600-5.500h4.200z" fill="#fff" stroke="#222" stroke-width="0.900" stroke-linejoin="round"/></svg><svg class="a" style="left:141px;top:137px;width:24px;height:24px;overflow:visible" viewBox="0 0 24 24"><rect x="6.500" y="7.500" width="15" height="14" fill="#fbe84e" stroke="#d4b820" stroke-width="1"/><rect x="2.500" y="2.500" width="14" height="12.500" rx="1" fill="#c9ccd0" stroke="#8f949b" stroke-width="0.900"/><rect x="4.500" y="4.500" width="10" height="3" fill="#fff" stroke="#8f949b" stroke-width="0.600"/><rect x="4.500" y="9.500" width="10" height="3" fill="#fff" stroke="#8f949b" stroke-width="0.600"/></svg><svg class="a" style="left:186px;top:137px;width:24px;height:24px;overflow:visible" viewBox="0 0 24 24"><rect x="2.500" y="2.500" width="13.500" height="13.500" fill="#fbe84e" stroke="#d4b820" stroke-width="1"/><rect x="13" y="13" width="10" height="10" rx="2" fill="#d5202a" stroke="#a3141c" stroke-width="0.700"/><circle cx="18" cy="18" r="3" fill="none" stroke="#fff" stroke-width="1.400"/><path d="M16 20l4-4" stroke="#fff" stroke-width="1.400"/></svg><svg class="a" style="left:218px;top:137px;width:24px;height:24px;overflow:visible" viewBox="0 0 24 24"><rect x="2.500" y="2.500" width="19" height="19" fill="#fff" stroke="#5f8fd0" stroke-width="1.200"/><rect x="2.500" y="2.500" width="19" height="4.500" fill="#d6e4f7" stroke="#5f8fd0" stroke-width="1.200"/><path d="M5 4.800h3.500M10.500 4.800h8.500M5 9.500h3.500M10.500 9.500h8.500M5 12.500h3.500M10.500 12.500h8.500M5 15.500h3.500M10.500 15.500h8.500M5 18.500h3.500M10.500 18.500h8.500" stroke="#5f8fd0" stroke-width="1.300"/></svg><svg class="a" style="left:251px;top:137px;width:24px;height:24px;overflow:visible" viewBox="0 0 24 24"><path d="M2.500 2v19.500M21.500 2v19.500M1.500 21.500h21" stroke="#444" stroke-width="1.300" fill="none"/><path d="M2.500 5h19" stroke="#555" stroke-width="0.800"/><path d="M5.4 5l2.600-2.600l2.600 2.600l-2.600 2.600z" fill="#fff" stroke="#e33" stroke-width="1.100"/><path d="M10.4 5l2.600-2.600l2.600 2.600l-2.600 2.600z" fill="#fff" stroke="#e33" stroke-width="1.100"/><path d="M15.4 5l2.600-2.600l2.600 2.600l-2.600 2.600z" fill="#fff" stroke="#e33" stroke-width="1.100"/><path d="M2.500 11h19" stroke="#555" stroke-width="0.800"/><path d="M3.9 11l2.600-2.600l2.600 2.600l-2.600 2.600z" fill="#fff" stroke="#7c7" stroke-width="1.100"/><path d="M8.9 11l2.600-2.600l2.600 2.600l-2.600 2.600z" fill="#fff" stroke="#7c7" stroke-width="1.100"/><path d="M2.500 17h19" stroke="#555" stroke-width="0.800"/><path d="M4.9 17l2.600-2.600l2.600 2.600l-2.600 2.600z" fill="#fff" stroke="#7ae" stroke-width="1.100"/><path d="M9.9 17l2.600-2.600l2.600 2.600l-2.600 2.600z" fill="#fff" stroke="#7ae" stroke-width="1.100"/><path d="M14.9 17l2.600-2.600l2.600 2.600l-2.600 2.600z" fill="#fff" stroke="#7ae" stroke-width="1.100"/></svg><svg class="a" style="left:284px;top:137px;width:24px;height:24px;overflow:visible" viewBox="0 0 24 24"><rect x="10.400" y="1" width="3.200" height="8" rx="1.600" fill="#6fa0de" stroke="#4a7ec2" stroke-width="0.600" transform="rotate(0 12 12)"/><rect x="10.400" y="1" width="3.200" height="8" rx="1.600" fill="#6fa0de" stroke="#4a7ec2" stroke-width="0.600" transform="rotate(45 12 12)"/><rect x="10.400" y="1" width="3.200" height="8" rx="1.600" fill="#6fa0de" stroke="#4a7ec2" stroke-width="0.600" transform="rotate(90 12 12)"/><rect x="10.400" y="1" width="3.200" height="8" rx="1.600" fill="#6fa0de" stroke="#4a7ec2" stroke-width="0.600" transform="rotate(135 12 12)"/><rect x="10.400" y="1" width="3.200" height="8" rx="1.600" fill="#6fa0de" stroke="#4a7ec2" stroke-width="0.600" transform="rotate(180 12 12)"/><rect x="10.400" y="1" width="3.200" height="8" rx="1.600" fill="#6fa0de" stroke="#4a7ec2" stroke-width="0.600" transform="rotate(225 12 12)"/><rect x="10.400" y="1" width="3.200" height="8" rx="1.600" fill="#6fa0de" stroke="#4a7ec2" stroke-width="0.600" transform="rotate(270 12 12)"/><rect x="10.400" y="1" width="3.200" height="8" rx="1.600" fill="#6fa0de" stroke="#4a7ec2" stroke-width="0.600" transform="rotate(315 12 12)"/><circle cx="12" cy="12" r="6" fill="#6fa0de" stroke="#4a7ec2" stroke-width="0.600"/><circle cx="12" cy="12" r="2.400" fill="#f4f2ef"/></svg><svg class="a" style="left:317px;top:137px;width:24px;height:24px;overflow:visible" viewBox="0 0 24 24"><path d="M4.500 2.500h14.500v4.500h-1.200q-.4-2.300-2.800-2.300h-6l5.500 6.800l-6 7.200h7q2.800 0 3.500-3h1.200l-1 5.800h-15v-1.200l7-8.400l-6.700-8.200z" fill="#8a1894" stroke="#6b0f74" stroke-width="0.400"/></svg><svg class="a" style="left:350px;top:137px;width:24px;height:24px;overflow:visible" viewBox="0 0 24 24"><path d="M2 4.500h20M2.500 2.500v4M21.500 2.500v4" stroke="#2f5f9a" stroke-width="1.300"/><rect x="1.500" y="10.500" width="21" height="8.500" fill="#b8b8b8" stroke="#6c6c6c" stroke-width="1"/><path d="M4.500 11v3.500M7.500 11v5M10.500 11v3.500M13.500 11v5M16.500 11v3.500M19.500 11v5" stroke="#555" stroke-width="1"/></svg><div class="dd dis" style="left:79px;top:147px"></div><div class="dd" style="left:124px;top:147px"></div><div class="dd" style="left:169px;top:147px"></div><div class="dd" style="left:379px;top:147px"></div><div class="pressed" style="left:391px;top:134px;width:32px;height:31px"></div><svg class="a" style="left:395px;top:137.5px;width:24px;height:24px;overflow:visible" viewBox="0 0 24 24"><path d="M5 1.500h14.500q3 0 3 3v5q0 3-3 3h-5.500l-4 4.500l.5-4.500h-5.500q-3 0-3-3v-5q0-3 3-3z" fill="#fbe87c" stroke="#c9a620" stroke-width="1.100" stroke-linejoin="round"/><circle cx="7.300" cy="19.300" r="3.400" fill="#6fae72" stroke="#497f4c" stroke-width="0.900"/></svg><svg class="a" style="left:429px;top:137px;width:24px;height:24px;overflow:visible" viewBox="0 0 24 24"><path d="M3.500 2.500h19v13.500h-12l-6 5l2-5h-3z" fill="#eef2f8" stroke="#8a8f98" stroke-width="1" stroke-linejoin="round"/><text x="8" y="13.500" font-family="Liberation Serif,serif" font-size="14" font-weight="bold" fill="#333">T</text></svg><div class="dd" style="left:457px;top:147px"></div><div class="grip" style="left:478px;top:140.5px"></div><svg class="a" style="left:489px;top:137px;width:24px;height:24px;overflow:visible" viewBox="0 0 24 24"><path d="M1 1v22.500h22.500z" fill="#eadfdb" stroke="#d6cbc6" stroke-width="1.100"/><path d="M7 12.500v6h6z" fill="#f6f4f1" stroke="#d6cbc6" stroke-width="0.800"/><rect x="17.500" y="2.500" width="4.500" height="16.500" fill="#efe9d2" stroke="#dcd5bd" stroke-width="0.700"/><path d="M19.500 4.500h2.500M19.500 6.500h2.500M19.500 8.500h2.500M19.500 10.500h2.500M19.500 12.500h2.500M19.500 14.500h2.500" stroke="#d3ccb4" stroke-width="0.600"/></svg><svg class="a" style="left:522px;top:137px;width:24px;height:24px;overflow:visible" viewBox="0 0 24 24"><path d="M2 8.500c-1-4 3-6.800 7.500-5.500c3 .9 4.500-.8 8-.6c4 .3 4.800 4.600 3 7.300c-1.500 2.200-5 2.600-8.500 2c-3.500-.5-8.700 1.300-10-3.200z" fill="#dcdcd6" stroke="#c9c9c3" stroke-width="0.900"/><rect x="13" y="13" width="10.5" height="10.5" rx="1.8" fill="#cfccc6" stroke="#c2beb7" stroke-width="0.8"/><path d="M14.6 16.75h4v-2.2l4 3.7l-4 3.7v-2.2h-4z" fill="#f3f1ee"/></svg><svg class="a" style="left:567px;top:137px;width:24px;height:24px;overflow:visible" viewBox="0 0 24 24"><path d="M2 8.500c-1-4 3-6.800 7.500-5.500c3 .9 4.500-.8 8-.6c4 .3 4.800 4.600 3 7.300c-1.500 2.200-5 2.600-8.500 2c-3.500-.5-8.700 1.300-10-3.200z" fill="#dcdcd6" stroke="#c9c9c3" stroke-width="0.900"/><rect x="13" y="13" width="10.5" height="10.5" rx="1.8" fill="#cfccc6" stroke="#c2beb7" stroke-width="0.8"/><path d="M20.85 18.85a2.6 2.6 0 1 1 -2.6 -2.6" fill="none" stroke="#f3f1ee" stroke-width="1.6"/><path d="M18.45 17.65l-2.6 0l1.3 -2.4z" fill="#f3f1ee"/></svg><svg class="a" style="left:600px;top:137px;width:24px;height:24px;overflow:visible" viewBox="0 0 24 24"><circle cx="8.500" cy="8.500" r="7" fill="#dcdcd6" stroke="#cacac4" stroke-width="0.900"/><path d="M15.500 9l6.500 4v7l-6.500 3.500l-6.500-3.500v-7z" fill="#e6e4e0" stroke="#cfccc6" stroke-width="0.900"/><path d="M8 8l8 8" stroke="#c9c5bf" stroke-width="1"/><path d="M16.500 13v3.500h-3.500z" fill="#c9c5bf"/></svg><svg class="a" style="left:632.5px;top:137px;width:24px;height:24px;overflow:visible" viewBox="0 0 24 24"><path d="M2 8.500c-1-4 3-6.800 7.500-5.500c3 .9 4.500-.8 8-.6c4 .3 4.800 4.600 3 7.300c-1.500 2.200-5 2.600-8.500 2c-3.500-.5-8.700 1.300-10-3.200z" fill="#dcdcd6" stroke="#c9c9c3" stroke-width="0.900"/><ellipse cx="8.500" cy="6.500" rx="4.200" ry="2.800" transform="rotate(-12 8.500 6.500)" fill="#f4f2ef" stroke="#c9c9c3" stroke-width="0.800"/><rect x="13" y="13" width="10.5" height="10.5" rx="1.6" fill="#d4d0c8" stroke="#c4bfb6" stroke-width="0.8"/><path d="M14.57 18.25L21.93 18.25M15.65 15.65L20.85 20.85M18.25 14.57L18.25 21.93M20.85 15.65L15.65 20.85" stroke="#f1efec" stroke-width="1.05" stroke-linecap="round"/><circle cx="18.25" cy="18.25" r="1.47" fill="#f1efec"/></svg><svg class="a" style="left:665.5px;top:137px;width:24px;height:24px;overflow:visible" viewBox="0 0 24 24"><path d="M2 8.500c-1-4 3-6.800 7.500-5.500c3 .9 4.500-.8 8-.6c4 .3 4.800 4.600 3 7.300c-1.500 2.200-5 2.600-8.500 2c-3.500-.5-8.700 1.300-10-3.200z" fill="#dcdcd6" stroke="#c9c9c3" stroke-width="0.900"/><path d="M2 22q-1-6 6-10l4 2.500q1 6-4 8.500q-4 1-6-1z" fill="#dcdcd6" stroke="#c9c9c3" stroke-width="0.800"/><rect x="13" y="13" width="10.5" height="10.5" rx="1.6" fill="#d4d0c8" stroke="#c4bfb6" stroke-width="0.8"/><path d="M14.57 18.25L21.93 18.25M15.65 15.65L20.85 20.85M18.25 14.57L18.25 21.93M20.85 15.65L15.65 20.85" stroke="#f1efec" stroke-width="1.05" stroke-linecap="round"/><circle cx="18.25" cy="18.25" r="1.47" fill="#f1efec"/></svg><svg class="a" style="left:698.5px;top:137px;width:24px;height:24px;overflow:visible" viewBox="0 0 24 24"><path d="M2 8.500c-1-4 3-6.800 7.500-5.500c3 .9 4.500-.8 8-.6c4 .3 4.800 4.600 3 7.300c-1.500 2.200-5 2.600-8.500 2c-3.500-.5-8.700 1.300-10-3.200z" fill="#dcdcd6" stroke="#c9c9c3" stroke-width="0.900"/><ellipse cx="8.500" cy="6.500" rx="4.200" ry="2.800" transform="rotate(-12 8.500 6.500)" fill="#e3e3dd" stroke="#c9c9c3" stroke-width="0.800"/><rect x="13" y="13" width="10.5" height="10.5" rx="1.6" fill="#d4d0c8" stroke="#c4bfb6" stroke-width="0.8"/><path d="M14.57 18.25L21.93 18.25M15.65 15.65L20.85 20.85M18.25 14.57L18.25 21.93M20.85 15.65L15.65 20.85" stroke="#f1efec" stroke-width="1.05" stroke-linecap="round"/><circle cx="18.25" cy="18.25" r="1.47" fill="#f1efec"/></svg><svg class="a" style="left:731.5px;top:137px;width:24px;height:24px;overflow:visible" viewBox="0 0 24 24"><path d="M2 8.500c-1-4 3-6.800 7.500-5.500c3 .9 4.500-.8 8-.6c4 .3 4.800 4.600 3 7.300c-1.500 2.200-5 2.600-8.500 2c-3.500-.5-8.700 1.300-10-3.200z" fill="#dcdcd6" stroke="#c9c9c3" stroke-width="0.900"/><ellipse cx="8.500" cy="6.500" rx="4.200" ry="2.800" transform="rotate(-12 8.500 6.500)" fill="#f4f2ef" stroke="#c9c9c3" stroke-width="0.800"/><rect x="13" y="13" width="10.5" height="10.5" rx="1.8" fill="#e6dedc" stroke="#d9d0cd" stroke-width="0.8"/><path d="M15.75 15.75l5 5m0 -5l-5 5" stroke="#f6f2f0" stroke-width="2"/></svg><svg class="a" style="left:764.5px;top:137px;width:24px;height:24px;overflow:visible" viewBox="0 0 24 24"><path d="M2 8.500c-1-4 3-6.800 7.500-5.500c3 .9 4.500-.8 8-.6c4 .3 4.800 4.600 3 7.300c-1.500 2.200-5 2.600-8.500 2c-3.500-.5-8.700 1.300-10-3.200z" fill="#dcdcd6" stroke="#c9c9c3" stroke-width="0.900"/><path d="M2 22q-1-6 6-10l4 2.500q1 6-4 8.500q-4 1-6-1z" fill="#dcdcd6" stroke="#c9c9c3" stroke-width="0.800"/><rect x="13" y="13" width="10.5" height="10.5" rx="1.8" fill="#e6dedc" stroke="#d9d0cd" stroke-width="0.8"/><path d="M15.75 15.75l5 5m0 -5l-5 5" stroke="#f6f2f0" stroke-width="2"/></svg><svg class="a" style="left:798px;top:137px;width:24px;height:24px;overflow:visible" viewBox="0 0 24 24"><path d="M2.500 7c0-4 4-5.500 8-4.500c3 .7 5-.5 8-.2c4 .5 4.600 4.500 3 7c-1.500 2-5 2-7.500 1.500c-1 0-2 2-2 5c0 3.500-1 6-3.500 6c-3 0-4-3-4-7c0-3-2-5-2-7.800z" fill="#dcdcd6" stroke="#c9c9c3" stroke-width="0.900"/><path d="M4.500 14.500q3.500 1.500 7.500-.5l-.2 3q-.3 4.500-3.300 4.500q-3-.5-3.500-4z" fill="#e4ddd0"/></svg><svg class="a" style="left:831px;top:137px;width:24px;height:24px;overflow:visible" viewBox="0 0 24 24"><path d="M4 19c-3-3 0-6 2-8c2.500-2.500 4-6.500 8.500-8c4-1.200 7 1.500 6 5c-1 3-4 4-5 6.500c-1 2.500-2 5-5 6.500c-2.500 1-5 0-6.500-2z" fill="#e2ddd0" stroke="#cfcabd" stroke-width="0.900"/><path d="M6.500 17.500c-1.500-1.500 0-3 1.500-4.500c2.500-2.500 3.500-6 7-7.500c2-.7 3.500 .5 3 2.500c-.6 2-3.500 3-4.600 5.500c-1 2.300-1.600 4-3.600 5c-1.300 .5-2.500 0-3.300-1z" fill="#d8d8d2" stroke="#c6c6c0" stroke-width="0.800"/></svg><svg class="a" style="left:864px;top:137px;width:24px;height:24px;overflow:visible" viewBox="0 0 24 24"><path d="M3.500 3.500l6 12.500l6-11h5" fill="none" stroke="#cfcbc5" stroke-width="1.100"/><rect x="2" y="2" width="3.200" height="3.200" fill="#f4f2ef" stroke="#c6c2bc" stroke-width="0.900"/><rect x="8" y="14.5" width="3.200" height="3.200" fill="#f4f2ef" stroke="#c6c2bc" stroke-width="0.900"/><rect x="14" y="3.5" width="3.200" height="3.200" fill="#f4f2ef" stroke="#c6c2bc" stroke-width="0.900"/><rect x="19" y="3.5" width="3.200" height="3.200" fill="#f4f2ef" stroke="#c6c2bc" stroke-width="0.900"/><rect x="13" y="13" width="10.500" height="10.500" rx="1.800" fill="#cfccc6" stroke="#c2beb7" stroke-width="0.800"/><path d="M15.500 17.500a3 3 0 0 1 5-1.500M21 19a3 3 0 0 1-5 1.500" fill="none" stroke="#f3f1ee" stroke-width="1.400"/><path d="M21.500 14.500v2.500h-2.500zM15 22v-2.500h2.500z" fill="#f3f1ee"/></svg><svg class="a" style="left:897px;top:137px;width:24px;height:24px;overflow:visible" viewBox="0 0 24 24"><path d="M11 1v22M1.500 11.500h21M16 11v12" stroke="#cfcbc5" stroke-width="1.100"/><rect x="9.400" y="10" width="3.200" height="3.200" fill="#f4f2ef" stroke="#c6c2bc" stroke-width="0.900"/><rect x="14.400" y="10" width="3.200" height="3.200" fill="#f4f2ef" stroke="#c6c2bc" stroke-width="0.900"/><rect x="17.500" y="2" width="5.500" height="5.500" rx="1" fill="#d4d0c8"/><path d="M18.55 4.75L21.95 4.75M19.05 3.55L21.45 5.95M20.25 3.05L20.25 6.45M21.45 3.55L19.05 5.95" stroke="#f3f1ee" stroke-width="0.9" stroke-linecap="round"/><circle cx="20.25" cy="4.75" r="0.68" fill="#f3f1ee"/><rect x="1" y="17" width="6" height="6" rx="1" fill="#e6dedc"/><path d="M2.500 18.500l3 3m0-3l-3 3" stroke="#f6f2f0" stroke-width="1.300"/><path d="M16 23l-1.200-3h2.400z" fill="#c6c2bc"/></svg><svg class="a" style="left:930px;top:137px;width:24px;height:24px;overflow:visible" viewBox="0 0 24 24"><path d="M2 6c0-3 3-4.500 6-4.500c2 0 2.500 1 2.500 3v8c-1.500 1.500-3 2-5 1c-2.500-1.500-3.500-4.500-3.500-7.500z" fill="#dcdcd6" stroke="#c9c9c3" stroke-width="0.800"/><path d="M13.500 4.500c0-2 1-3 3-3c3 0 5.500 2 5.500 5c0 3-1.500 6-4 7.500c-2 1-3.500 .500-4.500-1z" fill="#dcdcd6" stroke="#c9c9c3" stroke-width="0.800"/><path d="M13.5 3l-4.500 14M10.5 3l4.500 14" stroke="#d2cec8" stroke-width="1.600"/><ellipse cx="7.5" cy="19.500" rx="2" ry="3" transform="rotate(20 7.5 19.500)" fill="none" stroke="#e0cfcf" stroke-width="1.300"/><ellipse cx="16.5" cy="19.500" rx="2" ry="3" transform="rotate(-20 16.5 19.500)" fill="none" stroke="#e0cfcf" stroke-width="1.300"/></svg><svg class="a" style="left:963px;top:137px;width:24px;height:24px;overflow:visible" viewBox="0 0 24 24"><path d="M2 6c0-3 3-4.500 6-4.500c2 0 2.500 1 2.500 3v8c-1.500 1.500-3 2-5 1c-2.500-1.500-3.500-4.500-3.500-7.500z" fill="#dcdcd6" stroke="#c9c9c3" stroke-width="0.800"/><path d="M13.500 4.500c0-2 1-3 3-3c3 0 5.500 2 5.500 5c0 3-1.500 6-4 7.500c-2 1-3.500 .500-4.500-1z" fill="#dcdcd6" stroke="#c9c9c3" stroke-width="0.800"/><path d="M13.5 3l-4.500 14M10.5 3l4.500 14" stroke="#d2cec8" stroke-width="1.600"/><ellipse cx="7.5" cy="19.500" rx="2" ry="3" transform="rotate(20 7.5 19.500)" fill="none" stroke="#e0cfcf" stroke-width="1.300"/><ellipse cx="16.5" cy="19.500" rx="2" ry="3" transform="rotate(-20 16.5 19.500)" fill="none" stroke="#e0cfcf" stroke-width="1.300"/></svg><svg class="a" style="left:996px;top:137px;width:24px;height:24px;overflow:visible" viewBox="0 0 24 24"><path d="M2 6c0-3 3-4.500 6-4.500c2 0 2.500 1 2.500 3v8c-1.500 1.500-3 2-5 1c-2.500-1.500-3.500-4.500-3.500-7.500z" fill="#dcdcd6" stroke="#c9c9c3" stroke-width="0.800"/><path d="M13.500 4.500c0-2 1-3 3-3c3 0 5.500 2 5.500 5c0 3-1.500 6-4 7.500c-2 1-3.500 .500-4.500-1z" fill="#dcdcd6" stroke="#c9c9c3" stroke-width="0.800"/><path d="M9.500 5h5M9.500 7.500h5M9.500 10h5" stroke="#c6c2bc" stroke-width="0.900"/><path d="M6 13c0 5 3 7 7 9" fill="none" stroke="#cfcbc5" stroke-width="0.900"/></svg><svg class="a" style="left:1029px;top:137px;width:24px;height:24px;overflow:visible" viewBox="0 0 24 24"><path d="M1.500 3.500h8.500M14 3.500h8.500M1.500 7.500h8.500M14 7.500h8.500M1.500 11.500h8.500M14 11.500h8.500M1.500 15.500h8.500M14 15.500h8.500M1.500 19.500h8.500M14 19.500h8.500M1.500 22.500h21" stroke="#d6d2cc" stroke-width="0.900"/><path d="M8 5.500q4 0 4 3M16 5.500q-4 0-4 3M8 13.500q4 0 4 3M16 13.500q-4 0-4 3M12 2v20" fill="none" stroke="#cfcbc5" stroke-width="0.900"/></svg><div class="dd dis" style="left:551px;top:147px"></div><div class="t" style="left:1076.0px;top:139.0px;font-size:17px;letter-spacing:-0.455px;color:#111;">»</div><div class="grip" style="left:1095px;top:140.5px"></div><svg class="a" style="left:1107px;top:138px;width:24px;height:24px;overflow:visible" viewBox="0 0 24 24"><circle cx="12" cy="10" r="9.5" fill="#5a86c4" stroke="#3a5f96" stroke-width="0.900"/><path d="M2.5 10h19M3.925 5.25h16.15M3.925 14.75h16.15" stroke="#a9c1e2" stroke-width="0.600"/><ellipse cx="12" cy="10" rx="4.75" ry="9.5" fill="none" stroke="#a9c1e2" stroke-width="0.600"/><path d="M12 0.5v19" stroke="#a9c1e2" stroke-width="0.600"/><path d="M6 7l3-2l3 .500l.500 2.500l-2.500 1l-1 3l-2.500-1.500zM13 6l3-1.500l3 1l.500 3l-3 3.500l-2-3z" fill="#dbe6f4" opacity=".9"/><ellipse cx="6.500" cy="19.800" rx="4.200" ry="3" fill="#fff" stroke="#111" stroke-width="2.200"/><ellipse cx="18" cy="19.800" rx="4.200" ry="3" fill="#fff" stroke="#111" stroke-width="2.200"/><path d="M3.500 17l4-6h2.500l2.200 4l2.200-4h2.500l4 6z" fill="#111"/></svg>
<div class="a" style="left:0;top:169px;width:51px;height:526px;background:linear-gradient(90deg,#f7f5f2,#efece8)"></div>
<div class="a" style="left:51px;top:169px;width:1px;height:526px;background:#cfcbc5"></div>
<div class="gripH" style="left:18px;top:174px"></div><svg class="a" style="left:14.5px;top:185.5px;width:23px;height:23px;overflow:visible" viewBox="0 0 24 24"><circle cx="12" cy="12" r="11.500" fill="#4db748"/><path d="M12 .500a11.500 11.500 0 0 1 0 23z" fill="#3fa83c"/><path d="M15.500 7l-7.500 5l7.500 5" fill="none" stroke="#fff" stroke-width="1.600"/><circle cx="15.800" cy="6.800" r="2.500" fill="#fff"/><circle cx="7.800" cy="12" r="2.500" fill="#fff"/><circle cx="15.800" cy="17.200" r="2.500" fill="#fff"/></svg><div class="gripH" style="left:18px;top:222px"></div><svg class="a" style="left:8px;top:232px;width:24px;height:24px;overflow:visible" viewBox="0 0 24 24"><path d="M3 3.500l6.500 15.500l6-15l5.500-.500" fill="none" stroke="#333" stroke-width="1.200"/><path d="M0.8 3.5l2.200-2.200l2.200 2.200l-2.200 2.200z" fill="#fff" stroke="#333" stroke-width="0.900"/><path d="M13.3 4l2.200-2.200l2.200 2.200l-2.200 2.200z" fill="#fff" stroke="#333" stroke-width="0.900"/><path d="M18.8 3l2.200-2.200l2.200 2.200l-2.200 2.200z" fill="#fff" stroke="#333" stroke-width="0.900"/><circle cx="9.500" cy="19" r="2" fill="#fff" stroke="#333" stroke-width="0.900"/><rect x="13.5" y="14" width="9.5" height="9.5" rx="1.6" fill="#5a9d57" stroke="#3f7e3f" stroke-width="0.8"/><path d="M15.5 18.75h5.5M18.25 16v5.5" stroke="#fff" stroke-width="2"/></svg><svg class="a" style="left:8px;top:265px;width:24px;height:24px;overflow:visible" viewBox="0 0 24 24"><rect x="1" y="1.5" width="5.800" height="5.800" fill="#1d3557"/><rect x="6.6" y="1.5" width="5.800" height="5.800" fill="#7da4d4"/><rect x="12.2" y="1.5" width="5.800" height="5.800" fill="#1d3557"/><rect x="1" y="7.1" width="5.800" height="5.800" fill="#7da4d4"/><rect x="6.6" y="7.1" width="5.800" height="5.800" fill="#1d3557"/><rect x="12.2" y="7.1" width="5.800" height="5.800" fill="#93b4dc"/><rect x="1" y="12.7" width="5.800" height="5.800" fill="#1d3557"/><rect x="6.6" y="12.7" width="5.800" height="5.800" fill="#5f8cc4"/><rect x="12.2" y="12.7" width="5.800" height="5.800" fill="#a9c3e2"/><rect x="13.5" y="14" width="9.5" height="9.5" rx="1.6" fill="#5a9d57" stroke="#3f7e3f" stroke-width="0.8"/><path d="M15.5 18.75h5.5M18.25 16v5.5" stroke="#fff" stroke-width="2"/></svg><svg class="a" style="left:8px;top:297.5px;width:24px;height:24px;overflow:visible" viewBox="0 0 24 24"><rect x="1.500" y="1.500" width="17.500" height="18.500" fill="#8fb0dc" stroke="#27466f" stroke-width="1.100"/><path d="M1.500 10.500h17.500M10 1.500v18.500M1.500 1.500l8.500 9M10 1.500l-8.500 9M10 10.500l9-9M1.500 15.500h8.500M5.500 10.500v9.500" stroke="#27466f" stroke-width="0.900" fill="none"/><rect x="13.5" y="14" width="9.5" height="9.5" rx="1.6" fill="#5a9d57" stroke="#3f7e3f" stroke-width="0.8"/><path d="M15.5 18.75h5.5M18.25 16v5.5" stroke="#fff" stroke-width="2"/></svg><svg class="a" style="left:8px;top:330px;width:24px;height:24px;overflow:visible" viewBox="0 0 24 24"><path d="M9.500 1.500c3 0 5 2 5 5.200c0 4.800-3.500 8.300-8.500 10.300l-.600-1.200c3-1.500 4.800-3.500 5-6c-.600 .300-1.200 .400-1.900 .400c-2.300 0-4-1.700-4-4.200c0-2.600 2-4.500 5-4.500z" fill="#3c679f"/><rect x="13.5" y="14" width="9.5" height="9.5" rx="1.6" fill="#5a9d57" stroke="#3f7e3f" stroke-width="0.8"/><path d="M15.5 18.75h5.5M18.25 16v5.5" stroke="#fff" stroke-width="2"/></svg><svg class="a" style="left:8px;top:361px;width:24px;height:24px;overflow:visible" viewBox="0 0 24 24"><path d="M1.500 23q1.500-9 6-15q5-6.500 14-7.500q-1 6-4 10q-4 5-11 6.500q-2.500 2-5 6z" fill="#5b86c0" stroke="#2f5288" stroke-width="0.800" stroke-linejoin="round"/><path d="M2 22.500q5-11 17.500-20" fill="none" stroke="#dfe9f6" stroke-width="0.900"/><rect x="13.5" y="14" width="9.5" height="9.5" rx="1.6" fill="#5a9d57" stroke="#3f7e3f" stroke-width="0.8"/><path d="M15.5 18.75h5.5M18.25 16v5.5" stroke="#fff" stroke-width="2"/></svg><svg class="a" style="left:8px;top:393.5px;width:24px;height:24px;overflow:visible" viewBox="0 0 24 24"><rect x="1.500" y="1.500" width="17.500" height="19" rx="2" fill="#a9c3e6" stroke="#3c679f" stroke-width="1"/><path d="M4 4l6 13l5.500-13" fill="none" stroke="#27466f" stroke-width="1.200"/><circle cx="4" cy="4" r="1.700" fill="#fff" stroke="#27466f" stroke-width="0.800"/><circle cx="15.500" cy="4" r="1.700" fill="#fff" stroke="#27466f" stroke-width="0.800"/><circle cx="10" cy="17" r="1.700" fill="#fff" stroke="#27466f" stroke-width="0.800"/><rect x="13.5" y="14" width="9.5" height="9.5" rx="1.6" fill="#5a9d57" stroke="#3f7e3f" stroke-width="0.8"/><path d="M15.5 18.75h5.5M18.25 16v5.5" stroke="#fff" stroke-width="2"/></svg><svg class="a" style="left:8px;top:424.5px;width:24px;height:24px;overflow:visible" viewBox="0 0 24 24"><path d="M3 3.500c2-2.500 6-3 9-1.500c2-1 5-.500 6.500 1.500c1.500 2.500 1 6-1 8c-.500 2-1 4.500-2.500 4.500c-1 0-1.500-1-1.500-2.500c-1 .500-2 .500-3 .300c.300 2.500-.500 4.700-2.500 4.700c-1.500 0-2-1.500-2-4c-2.500-1.500-4.500-5-3-8.500c-.500-1 0-2 0-2.500z" fill="#4a7ab8" stroke="#274a7c" stroke-width="0.900"/><path d="M8 5c1.500 3 1.500 7 0 10M13 4.500c-1 3-1 6 .500 9" fill="none" stroke="#274a7c" stroke-width="0.800"/><circle cx="14.500" cy="6" r="0.800" fill="#fff"/><rect x="13.5" y="14" width="9.5" height="9.5" rx="1.6" fill="#5a9d57" stroke="#3f7e3f" stroke-width="0.8"/><path d="M15.5 18.75h5.5M18.25 16v5.5" stroke="#fff" stroke-width="2"/></svg><svg class="a" style="left:8px;top:456.5px;width:24px;height:24px;overflow:visible" viewBox="0 0 24 24"><circle cx="11.5" cy="11" r="10" fill="#5a86c4" stroke="#3a5f96" stroke-width="0.900"/><path d="M1.5 11h20M3 6h17M3 16h17" stroke="#a9c1e2" stroke-width="0.600"/><ellipse cx="11.5" cy="11" rx="5" ry="10" fill="none" stroke="#a9c1e2" stroke-width="0.600"/><path d="M11.5 1v20" stroke="#a9c1e2" stroke-width="0.600"/><path d="M5.5 8l3-2l3 .500l.500 2.500l-2.500 1l-1 3l-2.500-1.500zM12.5 7l3-1.500l3 1l.500 3l-3 3.500l-2-3z" fill="#dbe6f4" opacity=".9"/><rect x="13.5" y="14" width="9.5" height="9.5" rx="1.6" fill="#5a9d57" stroke="#3f7e3f" stroke-width="0.8"/><path d="M15.5 18.75h5.5M18.25 16v5.5" stroke="#fff" stroke-width="2"/></svg><svg class="a" style="left:8px;top:489px;width:24px;height:24px;overflow:visible" viewBox="0 0 24 24"><ellipse cx="12" cy="11" rx="11" ry="9.500" fill="#1d3557"/><path d="M1.500 8h21M1 11.500h22M2 15h20" stroke="#8fb0dc" stroke-width="1.800"/><ellipse cx="12" cy="11" rx="5" ry="9.500" fill="none" stroke="#8fb0dc" stroke-width="1.500"/><path d="M12 1.500v19" stroke="#8fb0dc" stroke-width="1.500"/><ellipse cx="12" cy="11" rx="11" ry="9.500" fill="none" stroke="#1d3557" stroke-width="1.200"/><rect x="13.5" y="14" width="9.5" height="9.5" rx="1.6" fill="#5a9d57" stroke="#3f7e3f" stroke-width="0.8"/><path d="M15.5 18.75h5.5M18.25 16v5.5" stroke="#fff" stroke-width="2"/></svg><svg class="a" style="left:8px;top:521px;width:24px;height:24px;overflow:visible" viewBox="0 0 24 24"><circle cx="11.500" cy="11" r="10" fill="#c7daf2" stroke="#3a5f96" stroke-width="0.900"/><path d="M1.500 11h20M3 6h17M3 16h17" stroke="#6f97cf" stroke-width="0.700"/><ellipse cx="11.500" cy="11" rx="5" ry="10" fill="none" stroke="#6f97cf" stroke-width="0.700"/><path d="M6.500 5.500l5 11.500l4.500-11.500" fill="none" stroke="#222" stroke-width="1.200"/><circle cx="6.500" cy="5.500" r="1.600" fill="#fff" stroke="#222" stroke-width="0.800"/><circle cx="16" cy="5.500" r="1.600" fill="#fff" stroke="#222" stroke-width="0.800"/><circle cx="11.500" cy="17" r="1.600" fill="#fff" stroke="#222" stroke-width="0.800"/><rect x="13.5" y="14" width="9.5" height="9.5" rx="1.6" fill="#5a9d57" stroke="#3f7e3f" stroke-width="0.8"/><path d="M15.5 18.75h5.5M18.25 16v5.5" stroke="#fff" stroke-width="2"/></svg><svg class="a" style="left:8px;top:553px;width:24px;height:24px;overflow:visible" viewBox="0 0 24 24"><path d="M3 3.500l6.500 15.500l6-15l5.500-.500" fill="none" stroke="#333" stroke-width="1.200"/><path d="M0.8 3.5l2.200-2.200l2.200 2.200l-2.200 2.200z" fill="#fff" stroke="#333" stroke-width="0.900"/><path d="M13.3 4l2.200-2.200l2.200 2.200l-2.200 2.200z" fill="#fff" stroke="#333" stroke-width="0.900"/><path d="M18.8 3l2.200-2.200l2.200 2.200l-2.200 2.200z" fill="#fff" stroke="#333" stroke-width="0.900"/><circle cx="9.500" cy="19" r="2" fill="#fff" stroke="#333" stroke-width="0.900"/><rect x="13.5" y="14" width="9.5" height="9.5" rx="1.6" fill="#c4a000" stroke="#a98b00" stroke-width="0.8"/><path d="M14.93 18.75L21.57 18.75M15.90 16.40L20.60 21.10M18.25 15.43L18.25 22.07M20.60 16.40L15.90 21.10" stroke="#fff" stroke-width="1.05" stroke-linecap="round"/><circle cx="18.25" cy="18.75" r="1.33" fill="#fff"/></svg><div class="dd" style="left:37px;top:434.5px"></div><div class="dd" style="left:37px;top:466.5px"></div><div class="dd" style="left:37px;top:531px"></div><div class="dd" style="left:37px;top:563px"></div><svg class="a" style="left:17px;top:587px;width:22px;height:22px;overflow:visible" viewBox="0 0 24 24"><rect x="9" y="1.500" width="5" height="13" rx="1" fill="#5b86c0" stroke="#27466f" stroke-width="0.900"/><rect x="3" y="4.500" width="6" height="6" fill="#a9c3e6" stroke="#27466f" stroke-width="0.900"/><rect x="14" y="4.500" width="6" height="6" fill="#a9c3e6" stroke="#27466f" stroke-width="0.900"/><path d="M3 13.500a8 8 0 0 0 8 8M5.500 13.500a5.500 5.500 0 0 0 5.500 5.500M8 13.500a3 3 0 0 0 3 3" fill="none" stroke="#27466f" stroke-width="0.900"/><rect x="13.5" y="14" width="9.5" height="9.5" rx="1.6" fill="#c4a000" stroke="#a98b00" stroke-width="0.8"/><path d="M14.93 18.75L21.57 18.75M15.90 16.40L20.60 21.10M18.25 15.43L18.25 22.07M20.60 16.40L15.90 21.10" stroke="#fff" stroke-width="1.05" stroke-linecap="round"/><circle cx="18.25" cy="18.75" r="1.33" fill="#fff"/></svg>
<div class="t" style="left:56.0px;top:171.0px;font-size:15px;letter-spacing:-0.304px;color:#1a1a1a;">Layers</div><svg class="a" style="left:257px;top:173px;width:11px;height:11px;overflow:visible" viewBox="0 0 11 11"><rect x="0.600" y="0.600" width="9.800" height="9.800" rx="2.200" fill="none" stroke="#6b6964" stroke-width="1.200"/><rect x="2.700" y="4.300" width="4" height="4" rx="1" fill="none" stroke="#66635e" stroke-width="1.100"/><path d="M4.600 4v-0.800q0-.800.800-.800h2.400q.800 0 .800.800v2.400q0 .800-.800.800h-0.800" fill="none" stroke="#66635e" stroke-width="1.100"/></svg><svg class="a" style="left:271px;top:173px;width:11px;height:11px;overflow:visible" viewBox="0 0 11 11"><rect x="0.600" y="0.600" width="9.800" height="9.800" rx="2.200" fill="none" stroke="#6b6964" stroke-width="1.200"/><path d="M3.200 3.200l4.600 4.600M7.800 3.200l-4.600 4.600" stroke="#5d5a56" stroke-width="2.100" stroke-linecap="butt"/></svg><svg class="a" style="left:60px;top:195px;width:16px;height:16px;overflow:visible" viewBox="0 0 16 16"><path d="M1.500 9l5-4l6 4.500l-5 4z" fill="#e23a2e"/><path d="M1.500 7.500l5-4l6 4.500l-5 4z" fill="#f4cf2a"/><path d="M1.500 6l5-4l6 4.500l-5 4z" fill="#4a7ab8"/><path d="M7 9.500l4.500-2.500l2 3l-4.500 3z" fill="#d9a25a" stroke="#8a5a20" stroke-width="0.600"/><path d="M12 7l3-5" stroke="#b9772a" stroke-width="1.600" stroke-linecap="round"/></svg><svg class="a" style="left:85px;top:195px;width:16px;height:16px;overflow:visible" viewBox="0 0 16 16"><path d="M2 6v9h8" fill="none" stroke="#666" stroke-width="0.900"/><rect x="4" y="4" width="8.500" height="9" fill="#e9e9e9" stroke="#666" stroke-width="0.900"/><path d="M6.500 4v-1.500a1.700 1.700 0 0 1 3.400 0v5" fill="none" stroke="#3c679f" stroke-width="1.200"/><rect x="9.500" y="10" width="6" height="6" rx="1.200" fill="#5a9d57"/><circle cx="12.500" cy="13" r="1.700" fill="#fff"/></svg><svg class="a" style="left:110px;top:195px;width:16px;height:16px;overflow:visible" viewBox="0 0 16 16"><path d="M0.500 8q7-7.500 14 0q-7 6.500-14 0z" fill="#f2f2f2" stroke="#8a8a8a" stroke-width="0.900"/><circle cx="7.500" cy="7.800" r="3" fill="#4a7ab8"/><circle cx="7.500" cy="7.800" r="1.200" fill="#1d3557"/><path d="M1 5q6.500-6 13 0" fill="none" stroke="#aaa" stroke-width="0.800"/><path d="M11.500 13h5l-2.500 3z" fill="#333"/></svg><svg class="a" style="left:135.5px;top:195px;width:16px;height:16px;overflow:visible" viewBox="0 0 16 16"><path d="M1 1.500h14v1.500l-5.500 6v6.500h-3v-6.500l-5.500-6z" fill="#5b8fd0" stroke="#3c679f" stroke-width="0.700" stroke-linejoin="round"/><rect x="1" y="1" width="14" height="1.800" fill="#f4d21c"/></svg><svg class="a" style="left:159px;top:195px;width:16px;height:16px;overflow:visible" viewBox="0 0 16 16"><text x="0" y="11.500" font-family="Liberation Serif,serif" font-size="17" fill="#7a2a86">ε</text><path d="M8.500 9.500h7v1l-2.500 2.500v3h-2v-3l-2.500-2.500z" fill="#b9b9b9" stroke="#8a8a8a" stroke-width="0.500"/></svg><svg class="a" style="left:198px;top:195px;width:16px;height:16px;overflow:visible" viewBox="0 0 16 16"><path d="M2.500 2v12M2.500 5h3M2.500 10h3" stroke="#888" stroke-width="0.800" stroke-dasharray="1 1"/><rect x="3.500" y="3.500" width="3.200" height="3.200" fill="#f5a623"/><rect x="3.500" y="9" width="3.200" height="3.200" fill="#f5a623"/><path d="M9.500 1h4v7h2.500l-4.500 6l-4.500-6h2.500z" fill="#4a7ab8" stroke="#2f5288" stroke-width="0.600"/></svg><svg class="a" style="left:222px;top:195px;width:16px;height:16px;overflow:visible" viewBox="0 0 16 16"><path d="M2.500 2v12M2.500 5h3M2.500 10h3" stroke="#888" stroke-width="0.800" stroke-dasharray="1 1"/><rect x="3.500" y="6" width="3.200" height="3.200" fill="#f5a623"/><rect x="3.500" y="11" width="3.200" height="3.200" fill="#f5a623"/><path d="M9.500 15h4v-7h2.500l-4.500-6l-4.500 6h2.500z" fill="#4a7ab8" stroke="#2f5288" stroke-width="0.600"/></svg><svg class="a" style="left:247px;top:195px;width:16px;height:16px;overflow:visible" viewBox="0 0 16 16"><rect x="1" y="1" width="11.500" height="11.500" fill="#fff" stroke="#666" stroke-width="0.900"/><rect x="9.500" y="10.500" width="6.500" height="4.500" rx="1.500" fill="#e8242e"/><path d="M11 12.750h3.500" stroke="#fff" stroke-width="1.200"/></svg><div class="dd" style="left:181px;top:201px"></div><div class="a" style="left:52px;top:219px;width:232px;height:165px;background:#fff;border:1px solid #b4b0aa;box-sizing:border-box"></div><div class="a" style="left:278px;top:221px;width:4px;height:17px;background:#e4e2df"></div><div class="cb" style="left:76px;top:222px"></div><svg class="a" style="left:76px;top:222px;width:14px;height:14px" viewBox="0 0 14 14"><path d="M3.2 7.2l2.4 3.2 4.8-7" fill="none" stroke="#111" stroke-width="1.9" stroke-linecap="round" stroke-linejoin="round"/></svg><div class="a" style="left:96px;top:229px;width:16px;height:1px;background:#a68ec6"></div><div class="t" style="left:118.2px;top:222.0px;font-size:15px;letter-spacing:-0.510px;color:#000;font-weight:bold;">roads_34S</div><div class="a" style="left:278px;top:240px;width:4px;height:17px;background:#e4e2df"></div><div class="cb" style="left:76px;top:241px"></div><svg class="a" style="left:76px;top:241px;width:14px;height:14px" viewBox="0 0 14 14"><path d="M3.2 7.2l2.4 3.2 4.8-7" fill="none" stroke="#111" stroke-width="1.9" stroke-linecap="round" stroke-linejoin="round"/></svg><div class="a" style="left:96px;top:240px;width:16px;height:16px;background:#86559b;box-shadow:inset 0 0 0 1px rgba(60,40,40,.35)"></div><div class="t" style="left:118.2px;top:241.0px;font-size:15px;letter-spacing:-0.541px;color:#000;font-weight:bold;">schools_34S</div><div class="a" style="left:278px;top:259px;width:4px;height:17px;background:#e4e2df"></div><div class="cb" style="left:76px;top:260px"></div><svg class="a" style="left:76px;top:260px;width:14px;height:14px" viewBox="0 0 14 14"><path d="M3.2 7.2l2.4 3.2 4.8-7" fill="none" stroke="#111" stroke-width="1.9" stroke-linecap="round" stroke-linejoin="round"/></svg><div class="a" style="left:96px;top:259px;width:16px;height:16px;background:#f2a3b3;box-shadow:inset 0 0 0 1px rgba(60,40,40,.35)"></div><div class="t" style="left:118.2px;top:260.0px;font-size:15px;letter-spacing:-0.102px;color:#000;font-weight:bold;">restaurants_34S</div><div class="a" style="left:53px;top:277px;width:230px;height:19px;background:#308cc6"></div><div class="a" style="left:278px;top:278px;width:4px;height:17px;background:#d9e6ef"></div><div class="a" style="left:280px;top:278px;width:1px;height:17px;background:#5b9fcc"></div><div class="cb" style="left:76px;top:279px"></div><svg class="a" style="left:76px;top:279px;width:14px;height:14px" viewBox="0 0 14 14"><path d="M3.2 7.2l2.4 3.2 4.8-7" fill="none" stroke="#111" stroke-width="1.9" stroke-linecap="round" stroke-linejoin="round"/></svg><div class="a" style="left:96px;top:278px;width:16px;height:16px;background:#5d9684;box-shadow:inset 0 0 0 1px rgba(60,40,40,.35)"></div><div class="t" style="left:118.2px;top:279.0px;font-size:15px;letter-spacing:-0.017px;color:#fff;font-weight:bold;text-decoration:underline;text-underline-offset:1.5px;text-decoration-thickness:1px;">roads_buffer_50m</div><div class="a" style="left:278px;top:297px;width:4px;height:17px;background:#e4e2df"></div><div class="cb" style="left:76px;top:298px"></div><svg class="a" style="left:76px;top:298px;width:14px;height:14px" viewBox="0 0 14 14"><path d="M3.2 7.2l2.4 3.2 4.8-7" fill="none" stroke="#111" stroke-width="1.9" stroke-linecap="round" stroke-linejoin="round"/></svg><div class="a" style="left:96px;top:297px;width:16px;height:16px;background:#ff9d14;box-shadow:inset 0 0 0 1px rgba(60,40,40,.35)"></div><div class="t" style="left:118.2px;top:298.0px;font-size:15px;letter-spacing:-0.324px;color:#000;font-weight:bold;">buildings_34S</div><div class="a" style="left:278px;top:316px;width:4px;height:17px;background:#e4e2df"></div><div class="cb" style="left:76px;top:317px"></div><svg class="a" style="left:76px;top:317px;width:14px;height:14px" viewBox="0 0 14 14"><path d="M3.2 7.2l2.4 3.2 4.8-7" fill="none" stroke="#111" stroke-width="1.9" stroke-linecap="round" stroke-linejoin="round"/></svg><div class="a" style="left:96px;top:316px;width:16px;height:16px;background:#e8718d;box-shadow:inset 0 0 0 1px rgba(60,40,40,.35)"></div><div class="t" style="left:118.2px;top:317.0px;font-size:15px;letter-spacing:-0.291px;color:#000;font-weight:bold;">landuse_34S</div><div class="a" style="left:278px;top:335px;width:4px;height:17px;background:#e4e2df"></div><div class="dd" style="left:58px;top:342px;border-top-color:#3a3a3a"></div><div class="cb" style="left:76px;top:336px"></div><svg class="a" style="left:98px;top:337px;width:13px;height:13px" viewBox="0 0 13 13"><rect x="0" y="0" width="4.4" height="4.4" fill="#1d3557"/><rect x="4.33" y="0" width="4.4" height="4.4" fill="#8fb0d8"/><rect x="8.66" y="0" width="4.4" height="4.4" fill="#1d3557"/><rect x="0" y="4.33" width="4.4" height="4.4" fill="#7fa3cf"/><rect x="4.33" y="4.33" width="4.4" height="4.4" fill="#1d3557"/><rect x="8.66" y="4.33" width="4.4" height="4.4" fill="#a9c3e2"/><rect x="0" y="8.66" width="4.4" height="4.4" fill="#1d3557"/><rect x="4.33" y="8.66" width="4.4" height="4.4" fill="#6d95c6"/><rect x="8.66" y="8.66" width="4.4" height="4.4" fill="#b7cde8"/></svg><div class="t" style="left:119.0px;top:336.0px;font-size:15px;letter-spacing:-0.154px;color:#8c8c8c;font-weight:bold;font-style:italic;">OpenStreetMap</div><div class="gripH" style="left:160px;top:385px;height:2px;width:17px"></div>
<div class="t" style="left:56.0px;top:391.5px;font-size:15px;letter-spacing:0.165px;color:#1a1a1a;">Browser</div><svg class="a" style="left:257px;top:394px;width:11px;height:11px;overflow:visible" viewBox="0 0 11 11"><rect x="0.600" y="0.600" width="9.800" height="9.800" rx="2.200" fill="none" stroke="#6b6964" stroke-width="1.200"/><rect x="2.700" y="4.300" width="4" height="4" rx="1" fill="none" stroke="#66635e" stroke-width="1.100"/><path d="M4.600 4v-0.800q0-.800.800-.800h2.400q.800 0 .800.800v2.400q0 .800-.800.800h-0.800" fill="none" stroke="#66635e" stroke-width="1.100"/></svg><svg class="a" style="left:271px;top:394px;width:11px;height:11px;overflow:visible" viewBox="0 0 11 11"><rect x="0.600" y="0.600" width="9.800" height="9.800" rx="2.200" fill="none" stroke="#6b6964" stroke-width="1.200"/><path d="M3.200 3.200l4.600 4.600M7.800 3.200l-4.600 4.600" stroke="#5d5a56" stroke-width="2.100" stroke-linecap="butt"/></svg><svg class="a" style="left:59.5px;top:416px;width:16px;height:16px;overflow:visible" viewBox="0 0 16 16"><rect x="1" y="1" width="11.500" height="11.500" fill="#fff" stroke="#666" stroke-width="0.900"/><rect x="9.500" y="9.500" width="6" height="6" rx="1.500" fill="#5a9d57"/><circle cx="12.500" cy="12.500" r="1.600" fill="#fff"/></svg><svg class="a" style="left:84.5px;top:416px;width:16px;height:16px;overflow:visible" viewBox="0 0 16 16"><g transform="scale(0.667)"><path d="M3.200 10.500a9 8 0 0 1 15.300-5l2.800-2.800v9h-9.200l3.200-3.200a5.200 4.500 0 0 0-7.800 2z" fill="#5d9bdc" stroke="#2f6cb0" stroke-width="0.900" stroke-linejoin="round"/><path d="M20.800 13.500a9 8 0 0 1-15.300 5l-2.800 2.800v-9h9.200l-3.200 3.200a5.200 4.500 0 0 0 7.800-2z" fill="#4c8bd0" stroke="#2f6cb0" stroke-width="0.900" stroke-linejoin="round"/></g></svg><svg class="a" style="left:110px;top:416px;width:16px;height:16px;overflow:visible" viewBox="0 0 16 16"><path d="M1 1.500h14v1.500l-5.500 6v6.500h-3v-6.500l-5.500-6z" fill="#5b8fd0" stroke="#3c679f" stroke-width="0.700" stroke-linejoin="round"/><rect x="1" y="1" width="14" height="1.800" fill="#f4d21c"/></svg><svg class="a" style="left:135.5px;top:416px;width:16px;height:16px;overflow:visible" viewBox="0 0 16 16"><path d="M2.500 2v12M2.500 5h3M2.500 10h3" stroke="#888" stroke-width="0.800" stroke-dasharray="1 1"/><rect x="3.500" y="6" width="3.200" height="3.200" fill="#f5a623"/><rect x="3.500" y="11" width="3.200" height="3.200" fill="#f5a623"/><path d="M9.500 15h4v-7h2.500l-4.500-6l-4.500 6h2.500z" fill="#4a7ab8" stroke="#2f5288" stroke-width="0.600"/></svg><svg class="a" style="left:160px;top:416px;width:16px;height:16px;overflow:visible" viewBox="0 0 16 16"><circle cx="8" cy="8" r="7" fill="#5588c8" stroke="#3c6aa8" stroke-width="0.700"/><text x="5.800" y="12.500" font-family="Liberation Serif,serif" font-style="italic" font-weight="bold" font-size="12" fill="#fff">i</text></svg><div class="a" style="left:52px;top:440px;width:232px;height:254px;background:#fff;border:1px solid #b4b0aa;box-sizing:border-box"></div><div class="a" style="left:53px;top:441px;width:216px;height:238px;overflow:hidden"><div class="a" style="left:42.5px;top:0px;width:174px;height:18.5px;background:#e5eff9;border:1px solid #a9c5e2;box-sizing:border-box;border-radius:2px"></div><svg class="a" style="left:7px;top:4px;width:6px;height:10px" viewBox="0 0 6 10"><path d="M0.3 0.3L5.7 5L0.3 9.7z" fill="#2e2e2e"/></svg><svg class="a" style="left:23.5px;top:1px;width:16px;height:16px;overflow:visible" viewBox="0 0 16 16"><path d="M8 0.800l2.200 4.900l5.300 .500l-4 3.600l1.200 5.300l-4.700-2.800l-4.700 2.800l1.200-5.300l-4-3.600l5.300-.500z" fill="#fdf6a3" stroke="#e5b800" stroke-width="1.100" stroke-linejoin="round"/></svg><div class="t" style="left:45.6px;top:2.0px;font-size:15px;letter-spacing:-0.161px;color:#111;">Favorites</div><svg class="a" style="left:7px;top:23px;width:6px;height:10px" viewBox="0 0 6 10"><path d="M0.3 0.3L5.7 5L0.3 9.7z" fill="#2e2e2e"/></svg><svg class="a" style="left:23.5px;top:20px;width:16px;height:16px;overflow:visible" viewBox="0 0 16 16"><path d="M3 1.500h11v12.500h-10.500q-2 0-2-2v-10q.500-1 1.500-.500z" fill="#ecebe8" stroke="#9a9a96" stroke-width="0.800"/><path d="M8.500 1.500h3v5.500l-1.500-1.500l-1.500 1.500z" fill="#5b8ccc" stroke="#3c679f" stroke-width="0.500"/></svg><div class="t" style="left:45.6px;top:21.0px;font-size:15px;letter-spacing:0.022px;color:#111;">Spatial Bookmarks</div><svg class="a" style="left:7px;top:42px;width:6px;height:10px" viewBox="0 0 6 10"><path d="M0.3 0.3L5.7 5L0.3 9.7z" fill="#2e2e2e"/></svg><svg class="a" style="left:23.5px;top:39px;width:16px;height:16px;overflow:visible" viewBox="0 0 16 16"><rect x="1.500" y="2" width="13.500" height="12.500" fill="#a6d84a" stroke="#7a7a6a" stroke-width="0.800"/><path d="M1.500 2l13.500 12.500M1.500 14.500l6-6" stroke="#f4f9e4" stroke-width="1.200"/><path d="M7 3l7 .500v7z" fill="#1d8c2a"/></svg><div class="t" style="left:45.6px;top:40.0px;font-size:15px;letter-spacing:0.094px;color:#111;">Project Home</div><svg class="a" style="left:7px;top:61px;width:6px;height:10px" viewBox="0 0 6 10"><path d="M0.3 0.3L5.7 5L0.3 9.7z" fill="#2e2e2e"/></svg><svg class="a" style="left:23.5px;top:58px;width:16px;height:16px;overflow:visible" viewBox="0 0 16 16"><path d="M1.500 2.500h5l1 1.500h7v10.500h-13z" fill="#f4f4f2" stroke="#8a8a86" stroke-width="0.800"/><path d="M5 10l3.200-3l3.200 3M6 9.500v3h4.400v-3" fill="none" stroke="#333" stroke-width="0.900"/></svg><div class="t" style="left:45.6px;top:59.0px;font-size:15px;letter-spacing:-0.037px;color:#111;">Home</div><svg class="a" style="left:7px;top:80px;width:6px;height:10px" viewBox="0 0 6 10"><path d="M0.3 0.3L5.7 5L0.3 9.7z" fill="#2e2e2e"/></svg><svg class="a" style="left:23.5px;top:77px;width:16px;height:16px;overflow:visible" viewBox="0 0 16 16"><path d="M1.500 2.500h5l1 1.500h7v10.500h-13z" fill="#efefed" stroke="#9a9a96" stroke-width="0.800"/></svg><div class="t" style="left:45.6px;top:78.0px;font-size:15px;letter-spacing:0.733px;color:#111;">/</div><svg class="a" style="left:7px;top:99px;width:6px;height:10px" viewBox="0 0 6 10"><path d="M0.3 0.3L5.7 5L0.3 9.7z" fill="#2e2e2e"/></svg><svg class="a" style="left:23.5px;top:96px;width:16px;height:16px;overflow:visible" viewBox="0 0 16 16"><path d="M1 7l7-3l7 3v5l-7 3.500l-7-3.500z" fill="#f2c522" stroke="#8a6d00" stroke-width="0.700" stroke-linejoin="round"/><path d="M1 7l7 3.500l7-3.500M8 10.500v5" fill="none" stroke="#8a6d00" stroke-width="0.700"/><circle cx="8" cy="5" r="4.300" fill="#4a7ab8" stroke="#27466f" stroke-width="0.600"/><path d="M5.500 4l2-1.500l2 .500l-1 2l-2 .500zM9.500 5.500l2-.500l.500 1.500l-1.500 1.500z" fill="#cfe0f4"/></svg><div class="t" style="left:45.6px;top:97.0px;font-size:15px;letter-spacing:-0.481px;color:#111;">GeoPackage</div><svg class="a" style="left:7px;top:118px;width:6px;height:10px" viewBox="0 0 6 10"><path d="M0.3 0.3L5.7 5L0.3 9.7z" fill="#2e2e2e"/></svg><svg class="a" style="left:23.5px;top:115px;width:16px;height:16px;overflow:visible" viewBox="0 0 16 16"><path d="M0.800 15.500q1-6 4-10q3.500-4.300 9.700-5q-.700 4-2.700 6.700q-2.700 3.300-7.500 4.300q-1.700 1.400-3.500 4z" fill="#5b86c0" stroke="#2f5288" stroke-width="0.600"/><path d="M1.200 15q3.500-7.500 12-13.500" fill="none" stroke="#dfe9f6" stroke-width="0.700"/></svg><div class="t" style="left:45.6px;top:116.0px;font-size:15px;letter-spacing:0.020px;color:#111;">SpatiaLite</div><svg class="a" style="left:7px;top:137px;width:6px;height:10px" viewBox="0 0 6 10"><path d="M0.3 0.3L5.7 5L0.3 9.7z" fill="#2e2e2e"/></svg><svg class="a" style="left:23.5px;top:134px;width:16px;height:16px;overflow:visible" viewBox="0 0 16 16"><g transform="scale(0.720) translate(0.500 0.500)"><path d="M3 3.500c2-2.500 6-3 9-1.500c2-1 5-.500 6.500 1.500c1.500 2.500 1 6-1 8c-.500 2-1 4.500-2.500 4.500c-1 0-1.500-1-1.500-2.500c-1 .500-2 .500-3 .300c.300 2.500-.500 4.700-2.500 4.700c-1.500 0-2-1.500-2-4c-2.500-1.500-4.500-5-3-8.500c-.500-1 0-2 0-2.500z" fill="#4a7ab8" stroke="#274a7c" stroke-width="0.900"/><path d="M8 5c1.500 3 1.500 7 0 10M13 4.500c-1 3-1 6 .500 9" fill="none" stroke="#274a7c" stroke-width="0.800"/><circle cx="14.500" cy="6" r="0.800" fill="#fff"/></g></svg><div class="t" style="left:45.6px;top:135.0px;font-size:15px;letter-spacing:-0.742px;color:#111;">PostGIS</div><svg class="a" style="left:23.5px;top:153px;width:16px;height:16px;overflow:visible" viewBox="0 0 16 16"><path d="M1 1c4 1 9 3.500 14 6.500c-4.500 .500-8 2-13.500 7c3-4.500 3.500-9 -.500-13.500z" fill="#4a7ab8" stroke="#2f5288" stroke-width="0.600"/><path d="M4 3.500q2.500 4 0 8.500M7 5q1.500 2.500 0 5M10 6.500q.800 1.300 0 2.300" fill="none" stroke="#cfe0f4" stroke-width="0.700"/></svg><div class="t" style="left:45.6px;top:154.0px;font-size:15px;letter-spacing:-1.279px;color:#111;">MSSQL</div><svg class="a" style="left:23.5px;top:172px;width:16px;height:16px;overflow:visible" viewBox="0 0 16 16"><rect x="0.500" y="0.500" width="15" height="15" rx="2.500" fill="#5b8fd0"/><text x="1.800" y="10.500" font-family="Liberation Sans,sans-serif" font-size="6.500" fill="#fff">DB2</text></svg><div class="t" style="left:45.6px;top:173.0px;font-size:15px;letter-spacing:-0.890px;color:#111;">DB2</div><svg class="a" style="left:7px;top:194px;width:6px;height:10px" viewBox="0 0 6 10"><path d="M0.3 0.3L5.7 5L0.3 9.7z" fill="#2e2e2e"/></svg><svg class="a" style="left:23.5px;top:191px;width:16px;height:16px;overflow:visible" viewBox="0 0 16 16"><circle cx="8" cy="8" r="7.2" fill="#5a86c4" stroke="#3a5f96" stroke-width="0.900"/><path d="M0.8 8h14.4M1.88 4.4h12.24M1.88 11.6h12.24" stroke="#a9c1e2" stroke-width="0.600"/><ellipse cx="8" cy="8" rx="3.6" ry="7.2" fill="none" stroke="#a9c1e2" stroke-width="0.600"/><path d="M8 0.8v14.4" stroke="#a9c1e2" stroke-width="0.600"/><path d="M2 5l3-2l3 .500l.500 2.500l-2.500 1l-1 3l-2.500-1.500zM9 4l3-1.500l3 1l.500 3l-3 3.500l-2-3z" fill="#dbe6f4" opacity=".9"/></svg><div class="t" style="left:45.6px;top:192.0px;font-size:15px;letter-spacing:-0.464px;color:#111;">WMS/WMTS</div><svg class="a" style="left:7px;top:213px;width:6px;height:10px" viewBox="0 0 6 10"><path d="M0.3 0.3L5.7 5L0.3 9.7z" fill="#2e2e2e"/></svg><svg class="a" style="left:23.5px;top:210px;width:16px;height:16px;overflow:visible" viewBox="0 0 16 16"><circle cx="8" cy="8" r="7.2" fill="#5a86c4" stroke="#3a5f96" stroke-width="0.900"/><path d="M0.8 8h14.4M1.88 4.4h12.24M1.88 11.6h12.24" stroke="#a9c1e2" stroke-width="0.600"/><ellipse cx="8" cy="8" rx="3.6" ry="7.2" fill="none" stroke="#a9c1e2" stroke-width="0.600"/><path d="M8 0.8v14.4" stroke="#a9c1e2" stroke-width="0.600"/><path d="M2 5l3-2l3 .500l.500 2.500l-2.500 1l-1 3l-2.500-1.500zM9 4l3-1.500l3 1l.500 3l-3 3.500l-2-3z" fill="#dbe6f4" opacity=".9"/></svg><div class="t" style="left:45.6px;top:211.0px;font-size:15px;letter-spacing:-0.348px;color:#111;">XYZ Tiles</div><svg class="a" style="left:7px;top:232px;width:6px;height:10px" viewBox="0 0 6 10"><path d="M0.3 0.3L5.7 5L0.3 9.7z" fill="#2e2e2e"/></svg><svg class="a" style="left:23.5px;top:229px;width:16px;height:16px;overflow:visible" viewBox="0 0 16 16"><circle cx="8" cy="8" r="7.200" fill="#cfe0f4" stroke="#3a5f96" stroke-width="0.900"/><path d="M1 8h14M2 4.500h12M2 11.500h12" stroke="#3a5f96" stroke-width="0.900"/><ellipse cx="8" cy="8" rx="3.500" ry="7.200" fill="none" stroke="#3a5f96" stroke-width="0.900"/></svg><div class="t" style="left:45.6px;top:230.0px;font-size:15px;letter-spacing:-2.798px;color:#111;">WCS</div></div><div class="a" style="left:269px;top:441px;width:14px;height:238px;background:#fff;border-left:1px solid #c9c5bf;box-sizing:border-box"></div><div class="a" style="left:269px;top:441px;width:14px;height:14px;background:#f3f1ee;border:1px solid #c9c5bf;box-sizing:border-box"></div><svg class="a" style="left:272px;top:446px;width:8px;height:5px" viewBox="0 0 8 5"><path d="M0 5L4 0L8 5z" fill="#3b3b3b"/></svg><div class="a" style="left:269px;top:595px;width:14px;height:70px;background:#d6d2cd;border:1px solid #c4c0ba;box-sizing:border-box"></div><div class="a" style="left:269px;top:665px;width:14px;height:14px;background:#f3f1ee;border:1px solid #c9c5bf;box-sizing:border-box"></div><svg class="a" style="left:272px;top:670px;width:8px;height:5px" viewBox="0 0 8 5"><path d="M0 0L4 5L8 0z" fill="#3b3b3b"/></svg><div class="a" style="left:53px;top:679px;width:230px;height:14px;background:#f3f1ee;border-top:1px solid #c9c5bf;box-sizing:border-box"></div><div class="a" style="left:66px;top:679px;width:186px;height:14px;background:#f0eeeb;border:1px solid #c4c0ba;box-sizing:border-box"></div><div class="a" style="left:255px;top:679px;width:14px;height:14px;border-left:1px solid #c4c0ba;border-top:1px solid #c9c5bf;box-sizing:border-box"></div><div class="a" style="left:269px;top:679px;width:1px;height:14px;background:#c4c0ba"></div><svg class="a" style="left:57px;top:682px;width:5px;height:8px" viewBox="0 0 5 8"><path d="M5 0L0 4L5 8z" fill="#3b3b3b"/></svg><svg class="a" style="left:260px;top:682px;width:5px;height:8px" viewBox="0 0 5 8"><path d="M0 0L5 4L0 8z" fill="#3b3b3b"/></svg>
<div class="a" style="left:290px;top:169px;width:948px;height:525px;background:#fff;border:1px solid #aaa7a1;border-right:none;box-sizing:border-box;overflow:hidden"></div>
<svg class="a" style="left:291px;top:170px;width:946px;height:523px" viewBox="291 170 946 523"><g fill="#e8718d" stroke="#4a2630" stroke-width="0.8" stroke-linejoin="round"><path d="M648.0 169.0L675.0 169.0L673.0 175.6L649.0 175.0Z"/><path d="M680.0 177.4L704.0 187.0L725.0 205.0L720.0 194.0L732.0 180.0L760.0 177.4L765.0 188.0L767.6 207.0L764.0 233.0L759.0 253.0L760.0 264.0L754.0 286.0L743.0 297.0L736.0 291.0L732.0 257.0L725.0 233.0L718.0 233.0L717.0 247.4L693.0 240.4L688.6 236.0L693.0 227.4L687.0 224.0L681.0 236.4L673.0 233.0L667.0 223.0L668.0 207.0L664.0 199.0L669.0 186.0Z"/><path d="M648.0 272.0L653.6 264.4L657.6 272.0Z"/><path d="M768.0 169.0L799.0 169.0L799.0 171.0L768.0 170.6Z"/><path d="M804.0 169.0L787.0 197.0L786.0 201.0L793.0 201.0L792.4 206.0L785.0 207.0L779.6 233.0L786.0 237.0L786.0 241.4L780.0 242.0L779.6 257.0L799.0 253.0L796.0 244.0L815.0 244.0L827.0 233.0L840.0 241.0L848.0 231.0L843.0 206.0L836.0 195.0L830.0 202.0L820.0 194.6L838.0 174.6L844.0 179.4L840.0 194.0L847.0 209.0L855.0 216.0L866.0 196.6L858.0 228.0L875.0 240.0L884.0 230.0L895.0 234.0L921.0 227.0L923.6 233.0L927.0 230.0L931.0 218.0L892.0 212.0L883.0 205.0L881.0 195.0L883.0 181.0L888.0 169.0Z"/><path d="M889.0 169.0L920.0 175.0L921.0 179.0L932.0 177.0L940.0 169.0Z"/><path d="M1176.0 272.0L1213.0 293.0L1207.0 300.0L1192.0 336.0L1157.0 307.0Z"/><path d="M1176.0 261.0L1175.0 267.0L1178.0 271.0L1210.0 290.0L1224.0 287.0L1222.0 279.0L1211.0 265.5L1188.0 263.5L1178.0 258.0Z"/><path d="M1212.5 265.0L1238.0 258.0L1238.0 285.0L1227.0 287.0L1225.0 278.0Z"/><path d="M1233.0 292.0L1238.0 292.0L1238.0 314.0L1230.0 317.0Z"/><path d="M1230.0 318.0L1238.0 316.0L1238.0 430.0L1220.0 425.0L1225.0 366.0Z"/><path d="M1177.0 362.0L1187.0 357.6L1204.0 357.0L1214.0 368.0L1218.0 385.0L1210.0 389.0L1186.0 387.0L1178.0 372.0Z"/><path d="M1206.0 357.0L1224.4 356.6L1222.0 384.0L1216.0 369.0Z"/><path d="M1173.0 372.4L1177.0 371.0L1184.0 386.0L1179.0 392.0L1174.0 388.0L1172.0 378.0Z"/><path d="M1187.0 388.0L1210.0 389.6L1218.0 386.0L1220.0 400.0L1218.0 412.0L1197.0 431.0L1193.0 420.0L1184.0 398.0Z"/><path d="M1179.0 403.0L1184.0 399.0L1193.0 422.0L1194.0 428.0L1186.0 435.0L1183.0 420.0Z"/><path d="M1221.0 400.0L1226.0 401.0L1230.0 409.0L1224.0 420.0L1218.0 424.0L1219.0 412.0Z"/><path d="M1192.0 430.0L1197.0 433.0L1218.0 413.0L1218.0 423.0L1208.0 436.0L1205.0 442.0L1201.0 435.0L1196.0 437.6L1192.0 432.0Z"/><path d="M1215.0 426.0L1225.0 428.0L1223.0 440.0L1218.0 455.0L1225.0 460.0L1222.0 467.0L1208.0 458.0L1205.0 450.0L1208.0 443.0Z"/><path d="M1226.0 460.0L1238.0 461.0L1238.0 468.0L1228.0 465.0Z"/><path d="M1115.6 385.6L1128.0 388.0L1150.0 396.0L1164.0 407.0L1174.0 426.0L1175.0 432.0L1171.0 438.0L1164.0 439.0L1150.0 431.0L1151.0 428.0L1112.0 395.6Z"/><path d="M1155.6 391.6L1167.6 392.6L1167.0 403.0L1170.0 407.0L1177.0 409.0L1177.6 416.0L1174.0 423.0L1166.0 408.0L1155.0 400.0Z"/><path d="M1174.0 435.0L1166.0 439.0L1156.0 436.0L1152.0 431.0Z"/><path d="M525.0 620.0L540.0 629.0L518.0 691.0L503.6 684.0L513.0 641.0Z"/><path d="M726.0 563.0L745.6 565.6L744.0 575.6L724.4 572.4Z"/><path d="M793.0 368.0L795.6 368.0L794.4 383.0L791.0 382.0Z"/><path d="M596.0 331.5L699.0 288.4L730.0 293.0L735.0 306.0L744.0 297.0L755.0 291.0L760.0 267.0L760.0 253.0L766.0 243.0L771.6 227.0L770.0 216.0L775.0 210.0L784.0 209.0L779.0 229.0L774.0 243.0L776.0 261.0L785.3 281.3L787.8 292.6L813.0 312.7L813.0 320.2L799.0 337.8L780.3 324.0L750.0 356.6L776.5 388.9L772.0 398.0L760.0 414.0L735.0 421.0L714.0 428.0L694.0 437.0L680.0 446.0L660.0 457.0L634.0 469.0L604.0 490.0L580.0 520.0L566.0 548.0L561.0 560.0L555.0 552.0L547.3 541.4L563.8 527.6L574.9 508.3L572.0 505.0L558.0 497.0L552.8 501.4L528.0 540.0L511.4 560.7L501.7 559.3L497.6 549.7L507.3 534.5L530.7 500.0L552.0 468.0L553.0 450.0L558.0 441.0L551.0 422.0L546.5 388.0Z"/><path d="M654.0 557.5L668.0 548.0L680.3 545.0L676.6 563.8L687.9 588.9L674.1 596.4L665.0 588.0L656.0 602.0L640.0 590.0L650.0 572.0Z"/><path d="M662.7 521.0L686.6 528.5L677.8 553.0L665.2 553.0Z"/><path d="M699.7 498.4L702.0 497.5L709.5 516.5L707.9 517.2Z"/><path fill-rule="evenodd" d="M1197.6 215.4L1200.0 218.0L1205.0 222.6L1206.0 226.0L1220.0 222.0L1230.0 224.0L1238.0 227.0L1238.0 255.0L1222.0 260.0L1200.0 264.0L1187.0 261.0L1179.0 254.0L1181.0 238.0L1190.0 225.0L1195.0 223.4Z M1220 239.400a9.400 9.400 0 1 0 -18.800 0a9.400 9.400 0 1 0 18.800 0Z"/></g><g fill="none" stroke="#fff" stroke-width="1.600"><path d="M1179 256l9 6l14 2.500l34-8"/><path d="M1212 267l12 14l3 6"/><path d="M1204 357l10 11l5 18l2 14l9 9l-6 11l-6 4l-10 13l-4 6"/></g><g fill="none" stroke="#4a2630" stroke-width="0.700"><path d="M1179 255.200l9 6l14 2.500l34-8"/><path d="M1205 356.500l10 11l5 18l2 14l9 9"/></g><g fill="#4a3018"><path d="M781.4 310.3h1.9v1.3h-1.9zM781.9 314.0h1.7v1.3h-1.7zM781.2 312.5h1.4v1.6h-1.4zM786.6 308.8h1.4v1.1h-1.4zM597.0 342.4h1.2v1.8h-1.2zM598.3 342.3h1.4v1.0h-1.4zM580.5 382.0h1.6v1.6h-1.6zM555.3 430.1h1.1v1.8h-1.1zM559.9 427.8h1.8v1.0h-1.8zM613.5 447.7h1.1v1.6h-1.1zM609.3 444.6h1.0v1.8h-1.0zM610.8 448.1h1.6v1.7h-1.6zM610.7 443.6h1.5v1.2h-1.5zM627.4 349.5h1.8v1.4h-1.8zM627.8 354.2h1.9v1.0h-1.9zM630.6 352.9h1.1v1.6h-1.1zM747.7 307.5h1.4v1.0h-1.4zM746.2 309.8h1.9v1.5h-1.9zM747.1 308.3h2.0v1.6h-2.0zM745.9 311.6h1.5v1.7h-1.5zM667.5 333.4h1.9v1.1h-1.9zM664.9 335.1h1.5v1.4h-1.5zM664.7 332.1h1.4v1.5h-1.4zM669.5 331.9h1.6v1.5h-1.6zM557.3 551.6h1.5v1.2h-1.5zM558.1 550.9h1.8v1.5h-1.8zM558.2 550.9h1.6v1.6h-1.6zM557.4 554.7h1.8v1.7h-1.8zM667.9 330.3h1.9v1.4h-1.9zM668.4 329.5h1.7v1.1h-1.7zM667.5 330.7h1.7v1.3h-1.7zM567.0 500.3h2.0v1.8h-2.0zM652.7 453.7h1.5v1.3h-1.5zM649.0 452.6h1.2v1.7h-1.2zM649.7 455.2h1.3v1.3h-1.3zM652.7 450.8h1.4v1.0h-1.4zM671.3 387.2h2.0v1.7h-2.0zM669.6 385.9h1.6v1.3h-1.6zM674.6 385.9h1.6v1.8h-1.6zM544.3 479.5h1.4v1.8h-1.4zM546.5 477.5h1.7v1.3h-1.7zM543.1 478.1h1.6v1.6h-1.6zM543.2 482.2h1.0v1.8h-1.0zM649.8 455.7h1.9v1.6h-1.9zM650.1 457.8h1.2v1.8h-1.2zM537.9 523.5h1.3v1.6h-1.3zM538.3 524.0h1.0v1.3h-1.0zM537.5 523.2h1.1v1.0h-1.1zM533.5 498.9h1.0v1.6h-1.0zM533.8 500.9h1.7v1.5h-1.7zM623.0 401.2h1.9v1.4h-1.9zM621.9 403.2h1.0v1.6h-1.0zM648.8 375.0h1.5v1.4h-1.5zM650.7 373.5h1.2v1.5h-1.2zM722.5 316.9h1.7v1.4h-1.7zM722.7 319.1h1.8v1.1h-1.8zM723.1 319.2h1.7v1.6h-1.7zM652.9 390.3h1.9v1.1h-1.9zM656.8 390.2h1.7v1.2h-1.7zM652.6 391.9h1.2v1.1h-1.2zM640.3 402.4h1.7v1.5h-1.7zM643.4 399.8h1.1v1.1h-1.1zM757.5 321.1h1.4v1.2h-1.4zM756.3 322.4h1.3v1.3h-1.3zM758.1 322.5h1.6v1.6h-1.6zM758.9 321.9h1.5v1.5h-1.5zM632.5 428.5h1.2v1.5h-1.2zM671.1 313.2h1.8v1.5h-1.8zM672.8 308.2h1.3v1.6h-1.3zM768.7 323.7h1.3v1.5h-1.3zM765.8 323.2h1.2v1.0h-1.2zM766.6 324.6h1.4v1.8h-1.4zM648.5 369.7h1.2v1.2h-1.2zM650.3 364.1h1.6v1.3h-1.6zM646.9 364.3h1.1v1.6h-1.1zM647.5 366.1h1.5v1.8h-1.5zM583.2 405.6h1.6v1.7h-1.6zM578.6 405.8h1.7v1.5h-1.7zM578.0 410.3h1.9v1.6h-1.9zM639.7 392.6h1.6v1.3h-1.6zM638.7 393.2h1.9v1.2h-1.9zM637.9 388.8h1.2v1.1h-1.2zM637.9 389.0h1.8v1.7h-1.8zM683.0 356.5h1.5v1.2h-1.5zM525.0 526.0h1.8v1.4h-1.8zM522.3 527.0h1.8v1.5h-1.8zM524.0 526.3h1.7v1.8h-1.7zM521.9 522.9h1.3v1.6h-1.3zM584.2 491.8h1.0v1.4h-1.0zM584.7 494.3h1.1v1.8h-1.1zM579.8 494.8h1.3v1.8h-1.3zM613.0 326.1h1.7v1.1h-1.7zM615.5 329.8h1.7v1.4h-1.7zM637.3 416.1h1.5v1.8h-1.5zM634.1 421.3h1.8v1.3h-1.8zM623.8 346.7h1.8v1.2h-1.8zM625.6 347.0h1.8v1.3h-1.8zM621.1 345.0h1.7v1.7h-1.7zM576.4 401.4h1.2v1.1h-1.2zM563.0 531.6h1.5v1.4h-1.5zM560.4 534.7h1.2v1.6h-1.2zM559.9 535.1h1.6v1.7h-1.6zM658.3 454.9h1.4v1.6h-1.4zM655.8 451.8h1.6v1.0h-1.6zM659.5 450.6h2.0v1.0h-2.0zM659.5 453.0h1.3v1.0h-1.3zM592.4 388.3h1.5v1.1h-1.5zM597.5 390.2h1.8v1.3h-1.8zM667.6 342.7h1.4v1.1h-1.4zM668.7 340.6h1.7v1.3h-1.7zM667.2 344.7h1.3v1.2h-1.3zM553.1 482.6h1.2v1.1h-1.2zM552.2 480.2h1.9v1.6h-1.9zM668.9 568.0h1.4v1.1h-1.4zM665.3 569.4h1.4v1.1h-1.4zM665.5 566.7h1.6v1.3h-1.6zM749.8 385.0h1.1v1.4h-1.1zM573.2 499.1h1.8v1.0h-1.8zM573.7 501.9h1.3v1.3h-1.3zM573.8 499.6h1.4v1.3h-1.4zM572.6 503.7h1.9v1.4h-1.9zM757.6 340.0h1.4v1.4h-1.4zM756.7 337.8h1.1v1.3h-1.1zM755.7 339.6h1.1v1.5h-1.1zM657.4 585.0h1.5v1.8h-1.5zM736.5 339.7h1.4v1.2h-1.4zM735.3 337.5h1.8v1.5h-1.8zM733.8 338.0h1.8v1.4h-1.8zM575.2 491.1h1.1v1.8h-1.1zM558.5 546.3h1.1v1.3h-1.1zM553.8 547.8h1.8v1.3h-1.8zM647.2 399.1h1.1v1.2h-1.1zM746.5 418.2h1.2v1.3h-1.2zM784.6 279.4h1.9v1.1h-1.9zM781.2 279.4h2.0v1.8h-2.0zM587.0 429.2h1.0v1.5h-1.0zM582.6 427.2h1.1v1.5h-1.1zM586.8 427.7h1.1v1.5h-1.1zM602.7 421.1h1.2v1.7h-1.2zM598.7 425.4h1.2v1.3h-1.2zM598.0 424.0h1.4v1.6h-1.4zM597.6 421.6h2.0v1.6h-2.0zM702.4 399.1h1.9v1.4h-1.9zM699.8 393.9h2.0v1.1h-2.0zM703.7 394.2h1.4v1.2h-1.4zM573.4 371.8h1.0v1.3h-1.0zM575.3 377.2h1.3v1.4h-1.3zM614.7 449.9h2.0v1.2h-2.0zM618.1 447.4h1.1v1.4h-1.1zM615.5 447.6h1.4v1.7h-1.4zM615.8 447.2h1.8v1.1h-1.8zM676.0 344.7h1.0v1.6h-1.0zM680.2 342.3h1.4v1.3h-1.4zM676.8 339.5h1.1v1.1h-1.1zM680.0 343.6h1.3v1.1h-1.3zM632.7 445.3h1.6v1.2h-1.6zM627.5 445.1h1.1v1.5h-1.1zM632.3 449.0h1.5v1.5h-1.5zM632.0 445.4h1.1v1.5h-1.1zM736.6 360.0h1.3v1.7h-1.3zM738.6 361.7h1.5v1.3h-1.5zM737.4 357.0h1.3v1.5h-1.3zM637.8 444.5h1.2v1.1h-1.2zM640.4 441.3h1.4v1.5h-1.4zM638.1 445.8h1.3v1.4h-1.3zM637.4 445.1h1.6v1.5h-1.6zM585.0 478.6h2.0v1.1h-2.0zM726.9 358.5h1.9v1.7h-1.9zM727.5 357.1h1.3v1.8h-1.3zM725.6 361.1h1.1v1.0h-1.1zM727.8 357.2h2.0v1.3h-2.0zM712.3 381.7h1.9v1.4h-1.9zM712.2 383.0h1.1v1.4h-1.1zM713.3 380.4h1.5v1.3h-1.5zM568.4 441.2h1.4v1.5h-1.4zM563.8 439.6h1.8v1.4h-1.8zM680.5 437.0h1.2v1.5h-1.2zM681.4 437.3h1.7v1.1h-1.7zM680.5 436.0h2.0v1.6h-2.0zM579.7 485.7h1.3v1.4h-1.3zM581.0 484.6h1.5v1.2h-1.5zM579.0 482.1h1.7v1.4h-1.7zM578.6 485.9h1.0v1.5h-1.0zM666.0 372.2h2.0v1.1h-2.0zM667.7 369.5h1.7v1.0h-1.7zM664.6 372.6h1.9v1.5h-1.9zM714.6 383.4h1.7v1.5h-1.7zM714.6 387.1h1.5v1.0h-1.5zM713.1 385.3h1.8v1.0h-1.8zM703.3 398.5h1.6v1.7h-1.6zM704.3 400.6h1.1v1.7h-1.1zM633.9 425.3h1.8v1.1h-1.8zM634.2 422.8h1.8v1.4h-1.8zM620.8 328.4h1.9v1.6h-1.9zM640.3 409.0h1.3v1.4h-1.3zM677.1 544.6h1.7v1.2h-1.7zM678.5 546.2h1.9v1.0h-1.9zM677.9 542.9h1.2v1.5h-1.2zM674.7 543.6h1.8v1.5h-1.8zM730.0 394.1h1.3v1.5h-1.3zM727.1 395.5h2.0v1.3h-2.0zM727.6 392.8h2.0v1.0h-2.0zM727.6 392.6h1.5v1.6h-1.5zM705.2 379.1h1.7v1.3h-1.7zM746.9 377.8h1.9v1.7h-1.9zM714.3 300.6h1.5v1.4h-1.5zM712.1 303.7h1.3v1.4h-1.3zM712.2 301.5h1.2v1.2h-1.2zM712.3 301.7h1.9v1.2h-1.9zM795.3 302.5h1.9v1.3h-1.9zM794.9 306.4h1.8v1.4h-1.8zM798.3 305.9h1.7v1.7h-1.7zM597.6 426.8h1.5v1.1h-1.5zM598.9 427.1h1.4v1.2h-1.4zM596.4 421.7h1.1v1.1h-1.1zM749.1 409.1h1.2v1.4h-1.2zM535.0 519.2h1.1v1.1h-1.1zM644.2 326.9h1.5v1.8h-1.5zM641.0 326.7h1.5v1.4h-1.5zM641.3 327.2h2.0v1.7h-2.0zM610.1 476.8h1.4v1.7h-1.4zM645.3 364.2h2.0v1.0h-2.0zM646.6 365.4h1.2v1.1h-1.2zM677.3 304.5h1.6v1.1h-1.6zM674.8 304.5h1.5v1.2h-1.5zM676.4 305.6h1.2v1.8h-1.2zM674.1 399.3h1.3v1.0h-1.3zM574.9 397.3h1.0v1.6h-1.0zM576.5 392.9h1.5v1.3h-1.5zM577.6 395.8h1.8v1.5h-1.8zM580.4 395.0h1.6v1.2h-1.6zM552.2 470.5h1.2v1.4h-1.2zM555.1 472.8h1.6v1.5h-1.6zM553.7 474.6h1.7v1.5h-1.7zM550.4 469.9h2.0v1.0h-2.0zM608.3 340.5h1.7v1.5h-1.7zM604.4 339.3h1.2v1.4h-1.2zM582.3 481.3h1.7v1.5h-1.7zM584.9 481.5h1.3v1.7h-1.3zM583.1 483.9h1.5v1.4h-1.5zM669.3 526.4h1.6v1.0h-1.6zM668.5 526.1h1.3v1.5h-1.3zM671.8 526.7h1.6v1.5h-1.6zM667.7 526.1h1.7v1.6h-1.7zM697.5 292.9h1.4v1.4h-1.4zM695.4 295.6h1.8v1.4h-1.8zM724.7 346.9h1.1v1.6h-1.1zM721.7 346.5h1.8v1.7h-1.8zM758.7 293.1h1.4v1.1h-1.4zM763.9 296.1h1.8v1.3h-1.8zM759.3 294.0h1.8v1.3h-1.8zM763.3 294.9h1.5v1.7h-1.5zM566.0 451.7h1.3v1.2h-1.3zM566.5 453.1h1.7v1.5h-1.7zM563.3 450.2h1.3v1.2h-1.3zM579.5 367.6h1.3v1.4h-1.3zM576.3 369.1h1.7v1.7h-1.7zM577.0 369.3h1.1v1.7h-1.1zM579.6 369.6h1.2v1.3h-1.2zM664.4 402.0h1.8v1.0h-1.8zM671.6 373.9h1.4v1.8h-1.4zM620.6 334.6h1.5v1.3h-1.5zM619.8 338.5h1.1v1.3h-1.1zM621.6 337.4h1.3v1.2h-1.3zM622.6 334.8h1.2v1.7h-1.2zM684.7 370.7h1.0v1.7h-1.0zM684.1 370.2h1.1v1.3h-1.1zM679.5 369.8h1.2v1.2h-1.2zM684.5 372.1h1.2v1.4h-1.2zM609.0 387.8h1.8v1.3h-1.8zM607.8 385.2h1.4v1.7h-1.4zM637.7 445.0h1.7v1.1h-1.7zM633.9 444.7h1.4v1.5h-1.4zM633.7 447.8h1.2v1.1h-1.2zM633.1 448.1h1.3v1.3h-1.3zM656.6 588.8h1.3v1.5h-1.3zM561.4 411.7h1.5v1.6h-1.5zM563.1 410.8h1.8v1.7h-1.8zM781.5 315.0h1.7v1.6h-1.7zM778.6 311.5h1.3v1.6h-1.3zM552.1 470.6h1.3v1.5h-1.3zM553.6 472.6h1.3v1.3h-1.3zM551.6 470.3h1.5v1.4h-1.5zM551.2 472.3h1.1v1.1h-1.1zM657.3 410.6h1.6v1.3h-1.6zM658.1 412.8h1.8v1.8h-1.8zM657.6 412.0h1.2v1.8h-1.2zM655.1 412.8h1.9v1.1h-1.9zM688.8 349.4h1.4v1.1h-1.4zM637.0 462.8h1.1v1.1h-1.1zM634.2 461.4h1.7v1.7h-1.7zM634.9 460.8h1.9v1.5h-1.9zM737.0 409.6h1.6v1.4h-1.6zM737.0 412.7h1.2v1.7h-1.2zM738.5 412.7h2.0v1.1h-2.0zM727.3 423.2h1.3v1.5h-1.3zM724.2 421.3h1.3v1.3h-1.3zM740.8 384.8h1.6v1.2h-1.6zM736.6 384.5h1.7v1.8h-1.7zM639.0 338.6h1.7v1.6h-1.7zM776.3 293.1h1.6v1.7h-1.6zM719.0 396.2h1.0v1.1h-1.0zM793.3 323.4h1.9v1.2h-1.9zM793.4 327.8h1.3v1.8h-1.3zM792.3 325.3h2.0v1.6h-2.0zM793.2 323.8h1.2v1.2h-1.2zM594.4 355.5h2.0v1.7h-2.0zM590.8 355.1h1.1v1.6h-1.1zM561.9 486.5h1.0v1.3h-1.0zM601.7 440.2h2.0v1.6h-2.0zM688.0 373.5h1.8v1.2h-1.8zM687.6 374.5h1.8v1.7h-1.8zM686.6 377.7h1.4v1.8h-1.4zM691.3 372.4h1.8v1.2h-1.8zM580.7 466.2h1.6v1.1h-1.6zM584.8 465.7h1.4v1.2h-1.4zM581.2 465.2h1.1v1.8h-1.1zM661.2 362.1h1.5v1.3h-1.5zM658.7 359.4h1.3v1.3h-1.3zM621.2 455.2h1.2v1.4h-1.2zM622.0 456.0h1.4v1.7h-1.4zM621.5 455.8h1.2v1.5h-1.2zM648.6 407.6h1.9v1.3h-1.9zM646.9 409.7h1.7v1.2h-1.7zM647.0 407.1h1.1v1.5h-1.1zM644.4 350.7h1.4v1.4h-1.4zM639.2 351.5h1.8v1.5h-1.8zM699.8 356.7h1.9v1.6h-1.9zM701.8 356.1h1.2v1.4h-1.2zM558.5 499.7h1.5v1.1h-1.5zM558.5 494.6h1.7v1.7h-1.7zM560.4 495.4h1.7v1.3h-1.7zM727.5 413.2h1.1v1.7h-1.1zM730.4 411.9h1.0v1.8h-1.0zM731.2 415.3h1.8v1.2h-1.8zM729.0 413.0h1.6v1.4h-1.6zM656.7 384.2h1.4v1.1h-1.4zM654.8 384.8h1.2v1.7h-1.2zM655.1 384.0h2.0v1.3h-2.0zM657.6 384.9h1.3v1.4h-1.3zM581.4 498.1h1.2v1.0h-1.2zM585.9 494.2h1.6v1.7h-1.6zM586.4 496.1h1.3v1.1h-1.3zM743.2 384.6h1.9v1.2h-1.9zM743.7 382.3h1.1v1.2h-1.1zM743.2 387.1h1.1v1.5h-1.1zM743.0 386.2h2.0v1.5h-2.0zM739.3 384.3h1.5v1.3h-1.5zM734.6 383.4h1.9v1.7h-1.9zM682.1 302.4h1.3v1.6h-1.3zM660.2 394.4h1.9v1.6h-1.9zM663.3 391.2h1.2v1.3h-1.2zM661.9 389.7h1.0v1.2h-1.0zM663.1 392.5h1.3v1.6h-1.3zM771.8 332.2h1.9v1.7h-1.9zM766.8 336.3h1.2v1.4h-1.2zM768.7 333.7h1.6v1.7h-1.6zM803.0 313.5h1.9v1.8h-1.9zM803.0 314.5h1.7v1.7h-1.7zM659.2 569.5h1.5v1.0h-1.5zM658.1 567.4h1.6v1.4h-1.6zM660.8 568.9h1.6v1.4h-1.6zM659.7 564.8h1.8v1.6h-1.8zM652.7 360.6h1.2v1.6h-1.2zM653.6 359.4h1.2v1.4h-1.2zM553.1 481.2h1.2v1.5h-1.2zM548.5 478.1h1.6v1.5h-1.6zM548.9 482.3h1.4v1.1h-1.4zM552.6 481.7h1.7v1.4h-1.7zM699.8 411.9h1.4v1.6h-1.4zM697.1 412.5h1.5v1.5h-1.5zM699.6 411.4h1.7v1.2h-1.7zM700.3 412.9h1.5v1.6h-1.5zM556.6 439.9h1.8v1.0h-1.8zM557.9 435.8h1.4v1.2h-1.4zM559.9 439.6h1.6v1.3h-1.6zM690.3 390.2h1.8v1.7h-1.8zM692.4 389.2h1.2v1.7h-1.2zM629.7 354.6h1.5v1.6h-1.5zM627.9 355.8h1.7v1.2h-1.7zM628.8 359.2h1.5v1.0h-1.5zM663.5 396.3h1.6v1.7h-1.6zM660.6 394.9h1.7v1.4h-1.7zM662.7 395.8h1.3v1.7h-1.3zM657.9 393.3h1.7v1.3h-1.7zM686.8 374.6h1.2v1.1h-1.2zM575.2 468.4h1.6v1.0h-1.6zM622.1 413.5h1.6v1.7h-1.6zM727.7 393.3h1.8v1.7h-1.8zM728.0 395.8h1.5v1.1h-1.5zM722.8 398.3h1.7v1.5h-1.7zM659.2 386.1h1.0v1.0h-1.0zM636.7 384.2h1.7v1.2h-1.7zM638.4 388.7h1.2v1.8h-1.2zM738.5 346.8h1.8v1.3h-1.8zM727.4 405.0h1.5v1.5h-1.5zM728.9 405.3h1.3v1.6h-1.3zM526.3 529.2h1.7v1.1h-1.7zM729.8 358.1h1.1v1.1h-1.1zM729.7 362.0h1.5v1.2h-1.5zM726.6 360.6h1.6v1.1h-1.6zM726.7 356.7h1.6v1.2h-1.6zM624.2 428.9h2.0v1.0h-2.0zM624.0 423.8h1.1v1.3h-1.1zM774.6 387.9h1.9v1.4h-1.9zM777.6 391.1h1.3v1.5h-1.3zM772.5 389.2h2.0v1.3h-2.0zM783.4 317.9h1.1v1.6h-1.1zM758.6 292.5h1.3v1.7h-1.3zM759.9 289.4h1.6v1.5h-1.6zM759.3 293.0h1.2v1.8h-1.2zM758.7 294.4h1.2v1.7h-1.2zM563.2 500.6h1.5v1.3h-1.5zM564.3 501.0h1.5v1.6h-1.5zM562.7 444.8h1.9v1.6h-1.9zM563.0 445.1h1.0v1.1h-1.0zM718.4 346.9h1.2v1.7h-1.2zM716.3 346.6h1.9v1.3h-1.9zM717.5 344.4h1.2v1.6h-1.2zM679.7 534.3h1.1v1.1h-1.1zM677.2 537.6h1.1v1.6h-1.1zM676.6 538.3h1.8v1.1h-1.8zM594.5 407.7h1.4v1.5h-1.4zM594.8 407.7h1.2v1.6h-1.2zM591.4 411.4h1.5v1.4h-1.5zM592.0 407.3h1.3v1.6h-1.3zM804.1 323.3h1.3v1.1h-1.3zM721.4 365.9h1.7v1.2h-1.7zM644.6 358.4h1.9v1.3h-1.9zM555.5 498.6h1.5v1.3h-1.5zM553.4 499.4h1.7v1.4h-1.7zM556.9 383.2h1.5v1.6h-1.5zM554.3 387.3h1.6v1.5h-1.6zM701.3 309.6h1.2v1.6h-1.2zM701.6 310.8h1.5v1.3h-1.5zM660.5 319.4h1.6v1.0h-1.6zM660.5 320.5h2.0v1.8h-2.0zM605.8 381.1h1.5v1.6h-1.5zM601.0 379.9h1.6v1.8h-1.6zM603.4 383.9h1.9v1.5h-1.9zM603.0 383.8h1.4v1.1h-1.4zM716.9 397.7h1.8v1.4h-1.8zM714.3 399.9h1.8v1.1h-1.8zM714.9 399.0h1.0v1.7h-1.0zM717.4 397.3h1.3v1.4h-1.3zM673.2 591.1h1.6v1.5h-1.6zM668.7 594.1h1.3v1.6h-1.3zM647.2 587.4h1.7v1.2h-1.7zM650.7 583.8h1.3v1.5h-1.3zM648.7 587.1h1.7v1.8h-1.7zM647.6 584.2h1.3v1.7h-1.3zM658.6 418.7h1.2v1.7h-1.2zM660.9 421.4h1.7v1.0h-1.7zM655.6 421.1h1.3v1.4h-1.3zM798.4 300.7h1.2v1.3h-1.2zM801.0 304.8h1.4v1.3h-1.4zM798.2 304.3h1.9v1.7h-1.9zM695.9 379.5h1.6v1.7h-1.6zM693.0 379.6h1.2v1.4h-1.2zM692.2 378.3h1.4v1.1h-1.4zM690.8 376.5h1.3v1.4h-1.3zM768.0 378.9h1.5v1.2h-1.5zM554.6 474.3h1.9v1.8h-1.9zM553.7 474.5h1.4v1.1h-1.4zM553.1 479.7h1.8v1.5h-1.8zM560.2 496.0h1.2v1.4h-1.2zM562.7 501.4h1.8v1.6h-1.8zM558.9 498.8h1.5v1.6h-1.5zM564.5 496.3h1.4v1.0h-1.4zM685.8 358.5h1.5v1.2h-1.5zM778.4 312.6h1.9v1.5h-1.9zM750.3 372.0h1.1v1.4h-1.1zM750.7 370.2h1.7v1.1h-1.7zM748.3 373.9h1.4v1.1h-1.4zM723.1 367.3h1.7v1.1h-1.7zM635.3 338.8h1.3v1.0h-1.3zM640.0 340.3h1.2v1.0h-1.2zM736.9 415.0h1.3v1.8h-1.3zM736.2 415.1h1.8v1.7h-1.8zM678.9 421.0h2.0v1.1h-2.0zM736.2 317.1h1.2v1.6h-1.2zM736.3 312.7h1.1v1.3h-1.1zM734.1 314.8h1.7v1.3h-1.7zM604.3 419.3h1.3v1.8h-1.3zM606.7 421.2h1.5v1.8h-1.5zM692.2 384.5h1.9v1.1h-1.9zM694.4 381.8h1.6v1.2h-1.6zM693.8 383.8h1.6v1.3h-1.6zM669.4 349.8h1.7v1.8h-1.7zM671.4 345.6h1.8v1.5h-1.8zM687.8 421.5h1.4v1.5h-1.4zM667.4 320.7h1.2v1.5h-1.2zM671.2 324.0h1.8v1.7h-1.8zM671.9 321.9h1.6v1.1h-1.6zM596.7 447.4h1.0v1.6h-1.0zM601.4 443.0h1.1v1.3h-1.1zM599.1 447.9h1.3v1.3h-1.3zM601.9 445.9h1.7v1.2h-1.7zM705.9 370.2h1.0v1.0h-1.0zM641.1 441.9h1.5v1.6h-1.5zM643.7 441.5h1.7v1.1h-1.7zM639.5 445.8h1.6v1.2h-1.6zM698.3 385.7h1.8v1.2h-1.8zM699.7 386.1h1.9v1.5h-1.9zM700.0 384.1h1.3v1.5h-1.3zM699.0 385.0h2.0v1.0h-2.0zM604.9 455.1h1.6v1.4h-1.6zM603.6 453.1h1.7v1.4h-1.7zM605.3 452.2h1.2v1.5h-1.2zM602.4 456.0h1.2v1.5h-1.2zM568.3 527.6h1.4v1.7h-1.4zM564.7 527.0h1.0v1.4h-1.0zM565.9 529.3h1.9v1.2h-1.9zM607.6 384.8h1.4v1.8h-1.4zM602.6 386.0h1.5v1.4h-1.5zM605.5 387.6h1.7v1.4h-1.7zM607.3 386.5h1.6v1.6h-1.6zM641.4 588.8h1.1v1.7h-1.1zM631.8 329.4h1.7v1.5h-1.7zM631.2 331.0h1.8v1.2h-1.8zM633.7 332.1h1.4v1.5h-1.4zM766.0 384.2h1.8v1.1h-1.8zM766.3 386.6h1.2v1.8h-1.2zM765.9 386.8h1.6v1.3h-1.6zM766.8 385.6h1.4v1.5h-1.4zM574.3 487.8h1.6v1.6h-1.6zM719.9 410.6h1.2v1.1h-1.2zM558.8 473.4h1.1v1.5h-1.1zM558.3 472.7h1.9v1.6h-1.9zM560.3 474.3h1.1v1.4h-1.1zM560.6 471.2h1.3v1.2h-1.3zM574.3 416.0h1.6v1.0h-1.6zM570.5 416.6h1.3v1.5h-1.3zM571.3 416.2h1.4v1.4h-1.4zM661.9 368.2h1.6v1.7h-1.6zM665.5 367.5h2.0v1.0h-2.0zM667.5 366.5h1.1v1.2h-1.1zM662.4 365.3h1.5v1.7h-1.5zM510.2 550.4h1.2v1.7h-1.2zM512.1 548.0h1.6v1.7h-1.6zM519.0 544.2h1.3v1.5h-1.3zM655.1 365.4h2.0v1.4h-2.0zM656.7 362.7h1.6v1.8h-1.6zM657.1 360.9h1.0v1.7h-1.0zM655.2 361.0h1.7v1.2h-1.7zM735.3 358.1h1.3v1.1h-1.3zM650.4 314.8h1.1v1.1h-1.1zM607.6 482.9h1.9v1.4h-1.9zM606.4 482.2h1.0v1.6h-1.0zM604.2 481.8h1.7v1.5h-1.7zM608.0 481.8h1.3v1.8h-1.3zM560.9 482.0h1.8v1.4h-1.8zM557.2 483.4h1.6v1.2h-1.6zM556.4 486.3h1.3v1.6h-1.3zM595.2 408.2h1.2v1.7h-1.2zM594.4 407.6h1.6v1.4h-1.6zM741.5 317.9h1.8v1.1h-1.8zM739.2 318.6h2.0v1.2h-2.0zM740.3 320.9h1.2v1.6h-1.2zM741.7 318.7h1.7v1.2h-1.7zM647.0 324.5h1.4v1.3h-1.4zM646.9 325.4h1.8v1.3h-1.8zM643.3 325.1h1.9v1.7h-1.9zM644.9 325.7h1.6v1.1h-1.6zM707.7 311.7h1.7v1.3h-1.7zM707.6 309.3h1.3v1.1h-1.3zM709.7 311.2h1.2v1.7h-1.2zM525.4 533.5h1.0v1.5h-1.0zM736.4 336.4h1.8v1.6h-1.8zM733.7 336.2h1.2v1.4h-1.2zM735.1 333.3h1.9v1.4h-1.9zM603.2 434.9h1.2v1.6h-1.2zM724.5 304.0h1.5v1.1h-1.5zM723.8 301.2h1.5v1.5h-1.5zM636.1 322.8h1.6v1.5h-1.6zM636.1 323.5h1.9v1.8h-1.9zM578.4 437.8h1.7v1.7h-1.7zM575.5 437.3h1.0v1.4h-1.0zM579.5 436.0h1.6v1.5h-1.6zM574.5 440.3h1.9v1.3h-1.9zM669.0 561.0h1.2v1.7h-1.2zM674.3 565.8h2.0v1.1h-2.0zM673.3 565.6h1.1v1.3h-1.1zM671.1 564.3h1.5v1.7h-1.5zM638.5 348.0h1.4v1.5h-1.4zM743.8 305.4h1.6v1.0h-1.6zM742.6 301.2h1.1v1.1h-1.1zM745.0 304.6h1.5v1.1h-1.5zM744.3 304.3h1.3v1.5h-1.3zM699.8 354.4h1.5v1.5h-1.5zM701.2 352.7h1.7v1.0h-1.7zM698.9 353.7h1.9v1.2h-1.9zM698.0 356.2h1.1v1.0h-1.1zM603.6 436.6h1.3v1.4h-1.3zM603.4 436.2h1.0v1.5h-1.0zM598.6 438.9h1.2v1.2h-1.2zM601.0 434.8h1.8v1.5h-1.8zM708.9 365.4h1.5v1.7h-1.5zM707.8 365.9h1.8v1.1h-1.8zM571.8 401.2h1.6v1.5h-1.6zM575.5 397.9h1.9v1.3h-1.9zM641.7 436.6h1.6v1.2h-1.6zM641.3 431.3h1.9v1.5h-1.9zM689.8 356.2h1.2v1.1h-1.2zM689.7 357.4h1.1v1.5h-1.1zM561.3 431.9h1.2v1.7h-1.2zM559.3 435.9h1.4v1.6h-1.4zM557.1 434.7h1.9v1.2h-1.9zM562.3 433.4h1.7v1.2h-1.7zM756.5 281.0h1.3v1.0h-1.3zM761.5 280.7h1.1v1.6h-1.1zM760.6 277.1h1.5v1.2h-1.5zM648.7 419.2h1.4v1.3h-1.4zM643.9 417.4h1.3v1.4h-1.3zM645.9 420.0h1.0v1.5h-1.0zM648.1 416.8h1.5v1.1h-1.5zM623.8 449.7h1.7v1.1h-1.7zM602.8 375.0h1.1v1.8h-1.1zM721.1 419.3h1.8v1.6h-1.8zM724.3 414.3h1.2v1.6h-1.2zM553.4 496.9h1.9v1.7h-1.9zM549.9 492.1h1.0v1.5h-1.0zM688.5 409.4h1.5v1.4h-1.5zM687.1 408.6h1.2v1.4h-1.2zM688.0 407.5h1.5v1.4h-1.5zM737.5 367.9h1.4v1.3h-1.4zM734.3 363.9h1.1v1.4h-1.1zM734.0 367.4h1.4v1.0h-1.4zM566.1 527.8h1.1v1.7h-1.1zM566.4 524.7h1.3v1.0h-1.3zM743.6 303.5h1.1v1.8h-1.1zM744.7 303.3h1.1v1.5h-1.1zM783.0 314.2h1.9v1.3h-1.9zM725.2 394.4h1.7v1.7h-1.7zM627.0 321.8h1.3v1.2h-1.3zM626.6 321.1h1.1v1.2h-1.1zM626.7 317.2h1.7v1.3h-1.7zM762.2 344.0h1.2v1.4h-1.2zM730.3 367.1h1.8v1.6h-1.8zM730.0 366.2h1.7v1.7h-1.7zM730.4 369.0h1.3v1.3h-1.3zM726.3 368.8h1.1v1.7h-1.1zM711.9 318.9h1.6v1.6h-1.6zM712.1 322.1h1.9v1.6h-1.9zM587.5 373.5h2.0v1.6h-2.0zM588.6 375.1h1.5v1.0h-1.5zM591.9 373.0h1.9v1.6h-1.9zM588.1 375.7h1.9v1.2h-1.9zM721.2 295.6h1.4v1.5h-1.4zM563.1 379.9h1.1v1.2h-1.1zM562.5 380.1h1.8v1.5h-1.8zM562.7 378.5h1.6v1.4h-1.6zM564.9 380.5h1.4v1.5h-1.4zM809.8 317.2h1.2v1.2h-1.2zM612.0 380.7h1.5v1.8h-1.5zM676.2 423.4h1.7v1.6h-1.7zM679.8 426.7h2.0v1.4h-2.0zM744.1 405.1h1.2v1.2h-1.2zM532.1 527.8h1.6v1.1h-1.6zM720.2 340.9h1.2v1.6h-1.2zM723.2 342.4h1.5v1.4h-1.5zM724.3 337.1h1.6v1.2h-1.6zM617.6 406.0h2.0v1.7h-2.0zM744.0 392.7h1.6v1.0h-1.6zM738.5 390.8h1.3v1.5h-1.3zM700.1 361.1h1.6v1.3h-1.6zM723.7 338.4h1.7v1.7h-1.7zM721.2 341.0h1.8v1.7h-1.8zM618.4 449.0h1.7v1.6h-1.7zM761.2 387.4h1.6v1.7h-1.6zM757.0 384.7h1.7v1.2h-1.7zM759.7 385.9h1.3v1.5h-1.3zM571.0 475.8h1.5v1.3h-1.5zM574.9 473.2h1.2v1.4h-1.2zM572.1 475.7h1.4v1.5h-1.4zM655.8 429.6h1.5v1.5h-1.5zM657.6 426.1h1.7v1.5h-1.7zM656.3 429.3h1.5v1.7h-1.5zM656.6 428.2h1.1v1.1h-1.1zM565.3 489.4h1.4v1.2h-1.4zM562.5 490.8h1.5v1.4h-1.5zM724.5 340.8h1.5v1.7h-1.5zM720.4 328.5h1.9v1.8h-1.9zM678.7 411.6h1.3v1.4h-1.3zM678.3 413.3h1.1v1.6h-1.1zM678.0 412.9h1.7v1.3h-1.7zM711.8 334.1h1.1v1.6h-1.1zM713.8 334.8h1.8v1.4h-1.8zM710.4 333.0h1.8v1.6h-1.8zM711.2 334.0h1.2v1.6h-1.2zM614.1 472.2h1.4v1.4h-1.4zM573.8 487.3h1.7v1.8h-1.7zM570.8 490.8h1.3v1.2h-1.3zM572.7 486.3h2.0v1.5h-2.0zM677.5 371.6h1.7v1.7h-1.7zM677.2 372.0h2.0v1.7h-2.0zM677.7 374.0h1.2v1.1h-1.2zM675.2 372.4h2.0v1.1h-2.0zM583.6 403.9h2.0v1.4h-2.0zM727.5 403.2h1.3v1.8h-1.3zM672.8 310.8h1.3v1.3h-1.3zM628.6 416.4h1.0v1.7h-1.0zM627.4 417.6h1.5v1.3h-1.5zM606.9 397.2h1.1v1.1h-1.1zM607.3 397.7h1.4v1.5h-1.4zM606.1 394.3h1.0v1.0h-1.0zM603.2 394.1h1.4v1.8h-1.4zM710.7 381.5h1.4v1.6h-1.4zM708.3 381.6h1.4v1.7h-1.4zM705.5 378.0h1.9v1.0h-1.9zM709.1 379.7h1.3v1.8h-1.3zM692.0 417.3h1.3v1.2h-1.3zM688.5 416.1h1.2v1.4h-1.2zM688.7 416.7h1.2v1.7h-1.2zM686.4 420.6h1.8v1.2h-1.8zM601.9 369.3h1.1v1.0h-1.1zM602.9 364.1h1.9v1.2h-1.9zM752.8 294.8h1.4v1.2h-1.4zM614.0 346.3h1.0v1.3h-1.0zM596.3 414.1h1.9v1.2h-1.9zM598.6 416.7h1.4v1.1h-1.4zM665.3 528.3h1.1v1.7h-1.1zM668.2 528.9h1.6v1.1h-1.6zM668.1 525.2h1.7v1.2h-1.7zM669.8 525.0h1.6v1.3h-1.6zM578.8 414.4h1.5v1.4h-1.5zM583.0 415.6h1.7v1.7h-1.7zM578.6 412.2h1.2v1.7h-1.2zM581.9 414.5h1.5v1.6h-1.5zM723.9 403.0h1.6v1.5h-1.6zM620.7 379.7h1.2v1.1h-1.2zM623.2 384.7h1.9v1.0h-1.9zM624.1 381.6h1.5v1.4h-1.5zM619.1 380.8h1.4v1.1h-1.4zM697.1 313.6h1.5v1.1h-1.5zM729.3 386.2h1.3v1.1h-1.3zM727.6 382.7h1.7v1.6h-1.7zM772.8 281.8h1.3v1.5h-1.3zM770.2 284.0h1.9v1.1h-1.9zM774.4 280.6h1.8v1.4h-1.8zM774.2 281.3h1.2v1.0h-1.2zM694.1 431.6h1.3v1.1h-1.3zM689.5 433.4h1.3v1.4h-1.3zM609.6 379.9h1.3v1.7h-1.3zM607.3 379.1h1.2v1.6h-1.2zM607.8 379.4h1.7v1.8h-1.7zM667.1 588.0h1.2v1.5h-1.2zM741.5 380.6h1.7v1.7h-1.7zM561.9 387.1h1.1v1.5h-1.1zM756.2 333.8h1.1v1.0h-1.1zM757.3 335.9h1.6v1.5h-1.6zM755.6 335.8h1.6v1.1h-1.6zM724.9 318.8h1.5v1.8h-1.5zM712.5 311.7h1.2v1.3h-1.2zM709.7 310.8h1.4v1.4h-1.4zM752.9 299.2h1.9v1.2h-1.9zM556.2 456.2h1.2v1.1h-1.2zM556.4 459.7h2.0v1.5h-2.0zM559.3 459.7h1.2v1.4h-1.2zM773.5 388.1h1.6v1.7h-1.6zM776.8 387.9h1.7v1.8h-1.7zM772.4 389.9h1.1v1.6h-1.1zM772.1 317.9h1.5v1.2h-1.5zM771.7 318.8h1.9v1.2h-1.9zM576.7 409.4h1.4v1.5h-1.4zM575.1 410.4h2.0v1.7h-2.0zM574.4 409.6h1.6v1.2h-1.6zM576.7 410.1h1.6v1.7h-1.6zM701.6 300.8h1.9v1.6h-1.9zM614.6 412.3h1.6v1.6h-1.6zM730.3 300.2h1.8v1.4h-1.8zM732.1 301.3h1.7v1.5h-1.7zM607.6 465.1h1.6v1.4h-1.6zM605.7 467.4h1.7v1.6h-1.7zM607.3 467.1h1.0v1.5h-1.0zM800.1 309.8h1.0v1.2h-1.0zM798.6 312.5h1.8v1.4h-1.8zM737.0 341.5h1.8v1.7h-1.8zM740.0 343.5h2.0v1.5h-2.0zM740.6 343.0h1.4v1.5h-1.4zM739.4 342.4h2.0v1.3h-2.0zM625.1 335.7h1.3v1.6h-1.3zM623.1 334.0h1.2v1.3h-1.2zM622.9 331.7h1.9v1.6h-1.9zM734.3 322.8h1.4v1.7h-1.4zM735.2 325.1h1.1v1.2h-1.1zM557.3 496.3h1.1v1.0h-1.1zM556.8 494.9h1.3v1.1h-1.3zM560.1 494.8h1.3v1.6h-1.3zM558.3 496.4h1.2v1.0h-1.2zM664.7 368.2h1.2v1.7h-1.2zM583.5 413.6h1.3v1.4h-1.3zM582.0 415.8h1.7v1.5h-1.7zM749.4 319.5h1.9v1.8h-1.9zM749.3 319.5h1.7v1.1h-1.7zM609.9 464.9h1.0v1.5h-1.0zM613.8 462.8h1.8v1.4h-1.8zM611.7 463.3h2.0v1.5h-2.0zM549.0 415.1h1.4v1.2h-1.4zM666.8 525.2h1.4v1.5h-1.4zM672.1 523.9h1.9v1.5h-1.9zM670.4 529.1h1.5v1.2h-1.5zM741.7 344.6h1.9v1.1h-1.9zM658.9 419.0h1.6v1.4h-1.6zM657.8 419.6h1.4v1.2h-1.4zM662.2 417.0h1.2v1.8h-1.2zM645.9 445.0h1.5v1.1h-1.5zM600.5 451.2h1.4v1.4h-1.4zM604.2 454.2h1.7v1.0h-1.7zM602.1 450.6h2.0v1.8h-2.0zM604.2 451.6h1.1v1.0h-1.1zM623.4 383.3h1.0v1.6h-1.0zM763.8 396.8h1.9v1.6h-1.9zM762.8 395.3h1.0v1.3h-1.0zM763.0 394.5h1.1v1.4h-1.1zM765.5 391.9h1.8v1.4h-1.8zM630.7 340.7h2.0v1.6h-2.0zM630.4 336.9h1.1v1.6h-1.1zM633.2 340.4h1.8v1.3h-1.8zM630.6 340.0h1.9v1.1h-1.9zM670.6 363.2h1.9v1.2h-1.9zM672.3 363.4h1.7v1.6h-1.7zM674.5 363.5h1.9v1.7h-1.9zM670.6 361.8h1.2v1.7h-1.2zM585.1 403.7h2.0v1.0h-2.0zM583.0 405.5h1.3v1.8h-1.3zM584.9 401.4h1.1v1.1h-1.1zM645.5 453.7h1.2v1.8h-1.2zM643.7 453.8h1.9v1.7h-1.9zM704.5 294.0h1.6v1.7h-1.6zM702.5 290.6h1.1v1.1h-1.1zM703.7 289.2h1.7v1.6h-1.7zM702.1 290.6h1.2v1.6h-1.2zM662.9 404.2h1.5v1.5h-1.5zM659.8 403.1h1.9v1.7h-1.9zM662.1 400.7h1.9v1.3h-1.9zM763.1 404.9h1.4v1.4h-1.4zM720.9 350.0h1.3v1.6h-1.3zM721.7 348.5h1.4v1.3h-1.4zM720.6 348.6h1.5v1.1h-1.5zM716.1 346.3h2.0v1.4h-2.0zM627.6 406.1h1.2v1.1h-1.2zM624.8 410.1h1.0v1.1h-1.0zM623.1 407.9h1.1v1.6h-1.1zM627.7 405.9h1.2v1.1h-1.2zM697.9 434.7h1.5v1.6h-1.5zM697.6 431.0h1.3v1.8h-1.3zM699.7 432.0h1.3v1.8h-1.3zM532.3 498.6h1.6v1.2h-1.6zM532.0 496.8h1.2v1.8h-1.2zM600.8 379.2h1.1v1.8h-1.1zM601.0 379.9h1.3v1.8h-1.3zM720.4 386.2h1.6v1.3h-1.6zM722.6 386.6h1.3v1.0h-1.3zM722.3 387.7h1.4v1.2h-1.4zM723.3 384.3h1.3v1.1h-1.3zM601.1 478.3h1.7v1.4h-1.7zM600.4 477.6h1.1v1.2h-1.1zM599.2 478.6h1.9v1.5h-1.9zM600.0 478.1h2.0v1.6h-2.0zM600.4 459.2h1.4v1.2h-1.4zM797.0 316.7h1.7v1.6h-1.7zM793.1 317.8h1.3v1.7h-1.3zM583.1 503.4h2.0v1.3h-2.0zM582.0 500.4h1.9v1.2h-1.9zM581.4 502.8h1.1v1.5h-1.1zM695.0 348.1h1.5v1.7h-1.5zM694.7 347.6h1.2v1.6h-1.2zM693.8 346.4h1.0v1.2h-1.0zM658.4 571.3h1.4v1.7h-1.4zM658.1 575.0h1.1v1.5h-1.1zM658.4 571.2h1.9v1.7h-1.9zM657.6 575.0h1.5v1.7h-1.5zM557.9 407.6h1.7v1.5h-1.7zM695.4 307.3h1.4v1.2h-1.4zM692.4 309.0h1.0v1.3h-1.0zM696.8 307.3h1.5v1.0h-1.5zM690.7 293.3h1.8v1.6h-1.8zM691.4 296.3h1.2v1.7h-1.2zM686.0 296.1h1.5v1.7h-1.5zM688.5 294.7h1.2v1.2h-1.2zM622.0 325.8h2.0v1.1h-2.0zM499.8 556.9h1.9v1.5h-1.9zM502.9 557.5h1.2v1.6h-1.2zM500.4 557.8h1.0v1.4h-1.0zM504.2 558.4h1.2v1.1h-1.2zM659.0 432.1h1.0v1.8h-1.0zM660.5 433.5h1.1v1.6h-1.1zM662.0 430.3h1.1v1.2h-1.1zM661.1 429.0h1.3v1.4h-1.3zM669.7 439.4h1.9v1.2h-1.9zM675.0 440.5h1.7v1.6h-1.7zM508.2 542.0h1.5v1.4h-1.5zM504.5 536.1h1.5v1.2h-1.5zM504.8 538.5h1.0v1.1h-1.0zM588.3 396.9h1.3v1.2h-1.3zM588.2 400.1h2.0v1.2h-2.0zM584.9 400.7h1.5v1.7h-1.5zM575.0 527.2h1.5v1.5h-1.5zM572.9 527.2h1.6v1.0h-1.6zM574.7 526.3h1.7v1.1h-1.7zM573.5 523.1h1.1v1.1h-1.1zM503.2 553.1h1.2v1.8h-1.2zM609.6 440.7h1.4v1.6h-1.4zM607.5 437.5h1.1v1.8h-1.1zM611.6 438.2h1.2v1.6h-1.2zM612.7 438.8h1.3v1.4h-1.3zM711.7 390.3h1.3v1.7h-1.3zM668.3 376.2h1.7v1.1h-1.7zM739.8 364.2h1.1v1.4h-1.1zM739.2 362.5h1.1v1.4h-1.1zM649.1 421.7h1.8v1.2h-1.8zM596.9 375.8h1.7v1.4h-1.7zM594.1 374.7h1.2v1.2h-1.2zM595.3 379.1h1.4v1.4h-1.4zM722.0 339.8h1.8v1.4h-1.8zM725.2 337.6h1.9v1.1h-1.9zM725.1 339.2h2.0v1.5h-2.0zM597.2 473.1h1.4v1.7h-1.4zM657.2 341.2h1.3v1.4h-1.3zM680.1 382.7h1.7v1.3h-1.7zM679.5 381.1h1.8v1.5h-1.8zM736.5 366.2h1.2v1.5h-1.2zM735.7 368.7h1.7v1.2h-1.7zM734.5 368.8h1.9v1.7h-1.9zM681.0 354.0h2.0v1.3h-2.0zM682.7 357.2h1.1v1.0h-1.1zM579.9 471.2h1.9v1.4h-1.9zM579.3 470.6h1.9v1.4h-1.9zM581.3 471.7h2.0v1.8h-2.0zM577.7 472.9h1.2v1.0h-1.2zM706.6 358.2h1.9v1.8h-1.9zM707.7 362.0h1.7v1.5h-1.7zM708.1 361.7h1.5v1.6h-1.5zM705.2 361.5h1.4v1.2h-1.4zM694.6 429.2h1.5v1.4h-1.5zM689.3 427.1h1.9v1.3h-1.9zM695.6 300.7h1.4v1.5h-1.4zM582.2 505.9h1.9v1.3h-1.9zM578.6 508.8h1.4v1.7h-1.4zM581.9 508.3h1.7v1.8h-1.7zM565.2 471.2h1.2v1.2h-1.2zM566.3 475.3h1.1v1.1h-1.1zM567.5 474.0h1.7v1.7h-1.7zM567.8 473.7h1.5v1.5h-1.5zM711.3 300.6h1.5v1.6h-1.5zM713.1 299.9h1.8v1.6h-1.8zM714.5 297.5h1.6v1.5h-1.6zM714.2 298.2h2.0v1.3h-2.0zM623.0 398.6h1.6v1.1h-1.6zM622.7 397.7h1.6v1.5h-1.6zM601.7 363.7h1.5v1.4h-1.5zM603.3 367.2h2.0v1.4h-2.0zM605.0 362.4h1.1v1.3h-1.1zM604.5 365.5h1.7v1.4h-1.7zM624.3 442.1h1.8v1.5h-1.8zM624.0 439.8h1.7v1.6h-1.7zM730.1 422.5h1.3v1.6h-1.3zM734.1 420.1h1.6v1.5h-1.6zM731.3 423.2h1.3v1.2h-1.3zM732.9 419.2h1.7v1.8h-1.7zM720.7 373.6h1.1v1.0h-1.1zM719.0 373.5h1.6v1.3h-1.6zM716.3 372.5h1.3v1.1h-1.3zM716.6 372.6h1.7v1.5h-1.7zM585.2 420.6h1.9v1.7h-1.9zM584.9 423.7h1.9v1.6h-1.9zM581.6 425.5h1.2v1.4h-1.2zM582.9 425.4h1.3v1.0h-1.3zM662.7 452.3h1.1v1.5h-1.1zM609.8 407.2h1.4v1.7h-1.4zM609.4 406.3h1.9v1.5h-1.9zM611.5 410.0h1.4v1.4h-1.4zM608.1 407.3h1.0v1.1h-1.0zM769.9 325.9h2.0v1.5h-2.0zM775.2 328.4h1.1v1.4h-1.1zM744.5 397.4h1.0v1.6h-1.0zM747.2 400.4h1.3v1.1h-1.3zM744.4 397.6h1.9v1.4h-1.9zM744.5 398.7h1.5v1.0h-1.5zM652.1 598.4h1.2v1.2h-1.2zM699.0 416.5h1.3v1.6h-1.3zM709.9 344.4h1.8v1.6h-1.8zM709.5 345.5h1.4v1.3h-1.4zM657.4 443.5h1.2v1.2h-1.2zM656.4 440.7h1.2v1.4h-1.2zM657.8 443.4h1.6v1.3h-1.6zM656.4 438.9h1.7v1.6h-1.7zM697.6 365.8h1.6v1.2h-1.6zM700.5 365.2h1.9v1.1h-1.9zM657.7 559.7h1.3v1.8h-1.3zM658.3 560.1h1.2v1.6h-1.2zM657.4 562.4h1.2v1.4h-1.2zM712.3 305.0h1.4v1.5h-1.4zM666.4 325.3h1.6v1.0h-1.6zM664.0 324.9h1.7v1.4h-1.7zM667.4 325.0h1.5v1.3h-1.5zM617.6 395.3h1.9v1.4h-1.9zM615.3 394.4h1.0v1.2h-1.0zM658.1 427.5h1.6v1.7h-1.6zM656.9 426.9h1.7v1.1h-1.7zM659.4 427.7h1.0v1.5h-1.0zM554.4 496.2h1.6v1.5h-1.6zM668.2 357.3h1.1v1.2h-1.1zM670.7 358.1h1.6v1.7h-1.6zM667.6 358.1h1.5v1.2h-1.5zM542.4 506.9h1.4v1.2h-1.4zM543.7 508.0h1.6v1.5h-1.6zM541.3 507.2h1.5v1.4h-1.5zM539.2 508.7h1.7v1.3h-1.7zM720.0 358.1h1.2v1.3h-1.2zM662.2 315.0h1.1v1.8h-1.1zM662.8 316.5h1.9v1.8h-1.9zM662.1 316.8h1.8v1.7h-1.8zM662.5 315.3h1.7v1.3h-1.7zM602.0 408.4h1.0v1.4h-1.0zM598.4 405.1h1.5v1.3h-1.5zM597.5 409.1h1.1v1.8h-1.1zM575.6 463.7h1.8v1.2h-1.8zM578.5 461.5h1.6v1.2h-1.6zM573.7 463.4h1.0v1.6h-1.0zM645.5 358.9h1.1v1.6h-1.1zM649.4 362.3h1.9v1.3h-1.9zM645.6 362.4h1.2v1.2h-1.2zM647.4 361.9h1.6v1.1h-1.6zM673.5 527.3h1.6v1.7h-1.6zM649.5 423.6h1.6v1.6h-1.6zM645.6 422.3h1.4v1.5h-1.4zM648.3 421.5h1.0v1.0h-1.0zM649.2 424.2h1.4v1.3h-1.4zM517.6 544.9h1.1v1.2h-1.1zM633.8 398.1h1.4v1.1h-1.4zM721.3 418.8h1.5v1.3h-1.5zM717.4 414.7h1.6v1.5h-1.6zM718.7 415.3h1.0v1.3h-1.0zM660.8 587.1h1.5v1.4h-1.5zM695.8 339.3h1.9v1.6h-1.9zM673.6 364.8h1.1v1.7h-1.1zM674.8 365.7h1.8v1.4h-1.8zM676.2 367.4h1.7v1.3h-1.7zM658.5 383.8h1.7v1.2h-1.7zM657.1 387.3h1.2v1.7h-1.2zM719.0 412.9h1.5v1.3h-1.5zM724.2 417.0h1.6v1.8h-1.6zM718.9 415.4h2.0v1.2h-2.0zM723.4 413.1h1.0v1.4h-1.0zM658.3 420.5h1.5v1.1h-1.5zM605.5 448.4h1.1v1.1h-1.1zM607.1 448.1h1.4v1.3h-1.4zM605.9 448.5h1.0v1.2h-1.0zM570.4 378.0h1.1v1.3h-1.1zM571.9 379.3h1.2v1.2h-1.2zM573.4 375.7h2.0v1.5h-2.0zM631.1 437.7h1.4v1.7h-1.4zM633.8 435.3h1.3v1.5h-1.3z"/></g><g fill="#ff9d14" stroke="#5a3a10" stroke-width="0.400"><rect x="601.5" y="462" width="4.5" height="3" transform="rotate(30 601.5 462)"/><rect x="669" y="577" width="5" height="4" transform="rotate(25 669 577)"/><rect x="642" y="436.5" width="3" height="2" transform="rotate(20 642 436.5)"/><rect x="613" y="459" width="2.5" height="2" transform="rotate(20 613 459)"/><rect x="700" y="300" width="2.5" height="2" transform="rotate(0 700 300)"/><rect x="731" y="331" width="3" height="2" transform="rotate(0 731 331)"/><rect x="678" y="404" width="3" height="2" transform="rotate(0 678 404)"/></g><g fill="#6e9f74"><path d="M626.0 607.0L606.0 637.0L604.0 643.0L616.0 653.0L618.0 660.0L623.0 665.0L637.0 663.0L650.0 656.0L656.0 650.0L673.0 638.0L673.0 629.0L692.0 615.0L695.0 607.0L670.0 603.0L650.0 600.0L640.0 595.0Z"/><path d="M628.0 500.0L616.0 510.0L614.0 535.0L618.0 548.0L630.0 552.0L660.0 550.0L668.0 540.0L664.0 520.0L655.0 500.0L640.0 492.0Z"/><path d="M622.0 552.0L642.0 548.0L652.0 560.0L650.0 572.0L640.0 590.0L626.0 607.0L622.0 600.0L636.0 582.0L622.0 566.0Z"/><path d="M640.0 486.0L690.0 476.0L700.0 500.0L690.0 512.0L650.0 512.0Z"/><path d="M704.0 478.0L722.0 484.0L730.0 500.0L732.0 516.0L722.0 530.0L706.0 532.0L700.0 505.0Z"/></g><g fill="none" stroke-linecap="round" stroke-linejoin="round"><path d="M285.0 325.0C291.5 327.0 344.6 342.5 356.0 347.0C367.4 351.5 402.5 369.5 410.0 375.0C417.5 380.5 434.2 403.1 438.0 407.0C441.8 410.9 450.7 417.0 452.0 418.0" stroke="#161a17" stroke-width="10.2"/><path d="M285.0 325.0C291.5 327.0 344.6 342.5 356.0 347.0C367.4 351.5 402.5 369.5 410.0 375.0C417.5 380.5 434.2 403.1 438.0 407.0C441.8 410.9 450.7 417.0 452.0 418.0" stroke="#6e9f74" stroke-width="8.5"/><path d="M438.0 407.0C439.3 408.0 449.5 416.0 452.0 418.0C454.5 420.0 464.7 428.0 466.0 429.0" stroke="#161a17" stroke-width="10.2"/><path d="M438.0 407.0C439.3 408.0 449.5 416.0 452.0 418.0C454.5 420.0 464.7 428.0 466.0 429.0" stroke="#6e9f74" stroke-width="8.5"/><path d="M466.0 429.0C470.2 428.4 504.9 423.4 512.0 422.0C519.1 420.6 539.6 414.1 544.0 413.6C548.4 413.1 558.5 416.7 560.0 417.0" stroke="#161a17" stroke-width="10.2"/><path d="M466.0 429.0C470.2 428.4 504.9 423.4 512.0 422.0C519.1 420.6 539.6 414.1 544.0 413.6C548.4 413.1 558.5 416.7 560.0 417.0" stroke="#6e9f74" stroke-width="8.5"/><path d="M466.0 429.0C466.5 430.4 471.9 439.7 472.0 444.0C472.1 448.3 467.1 470.5 467.0 476.0C466.9 481.5 469.1 499.7 471.0 504.0C472.9 508.3 484.7 520.0 488.0 523.5C491.3 527.0 503.9 539.4 507.3 542.8C510.7 546.2 522.9 557.8 525.2 560.7C527.5 563.6 530.6 572.0 532.1 574.5C533.6 577.0 539.9 586.2 541.8 588.3C543.7 590.4 551.8 597.1 552.8 598.0" stroke="#161a17" stroke-width="10.2"/><path d="M466.0 429.0C466.5 430.4 471.9 439.7 472.0 444.0C472.1 448.3 467.1 470.5 467.0 476.0C466.9 481.5 469.1 499.7 471.0 504.0C472.9 508.3 484.7 520.0 488.0 523.5C491.3 527.0 503.9 539.4 507.3 542.8C510.7 546.2 522.9 557.8 525.2 560.7C527.5 563.6 530.6 572.0 532.1 574.5C533.6 577.0 539.9 586.2 541.8 588.3C543.7 590.4 551.8 597.1 552.8 598.0" stroke="#6e9f74" stroke-width="8.5"/><path d="M506.5 212.3L511.0 213.0" stroke="#161a17" stroke-width="10.2"/><path d="M506.5 212.3L511.0 213.0" stroke="#6e9f74" stroke-width="8.5"/><path d="M614.0 289.6L627.0 283.6" stroke="#161a17" stroke-width="10.2"/><path d="M614.0 289.6L627.0 283.6" stroke="#6e9f74" stroke-width="8.5"/><path d="M495.0 340.0L495.0 343.0" stroke="#161a17" stroke-width="10.2"/><path d="M495.0 340.0L495.0 343.0" stroke="#6e9f74" stroke-width="8.5"/><path d="M475.0 360.5C476.0 360.6 484.4 361.4 486.0 362.0C487.6 362.6 492.4 366.5 493.0 367.0" stroke="#161a17" stroke-width="10.2"/><path d="M475.0 360.5C476.0 360.6 484.4 361.4 486.0 362.0C487.6 362.6 492.4 366.5 493.0 367.0" stroke="#6e9f74" stroke-width="8.5"/><path d="M570.0 332.0L571.5 332.6" stroke="#161a17" stroke-width="10.2"/><path d="M570.0 332.0L571.5 332.6" stroke="#6e9f74" stroke-width="8.5"/><path d="M779.5 262.8C781.4 262.4 795.9 258.8 800.0 258.0C804.1 257.2 820.9 254.4 824.6 254.1C828.3 253.8 838.9 254.5 840.3 254.5" stroke="#161a17" stroke-width="10.2"/><path d="M779.5 262.8C781.4 262.4 795.9 258.8 800.0 258.0C804.1 257.2 820.9 254.4 824.6 254.1C828.3 253.8 838.9 254.5 840.3 254.5" stroke="#6e9f74" stroke-width="8.5"/><path d="M840.3 254.5C842.1 253.9 857.4 249.2 860.0 248.3C862.6 247.4 867.5 245.4 868.5 245.0C869.5 244.6 871.0 244.1 871.5 244.2C872.0 244.3 873.7 245.7 874.5 246.5C875.3 247.3 878.8 252.0 880.0 253.0C881.2 254.0 886.5 256.3 888.0 257.0C889.5 257.7 895.3 259.3 897.0 260.5C898.7 261.7 905.3 268.0 907.0 270.0C908.7 272.0 914.5 280.5 916.0 283.0C917.5 285.5 922.1 294.7 923.0 297.0C923.9 299.3 925.7 305.0 926.0 308.0C926.3 311.0 926.1 326.0 926.0 330.0C925.9 334.0 925.2 347.8 924.4 352.0C923.6 356.2 918.3 371.8 917.0 376.0C915.7 380.2 911.0 394.2 910.0 398.0C909.0 401.8 906.4 416.2 906.0 418.0" stroke="#161a17" stroke-width="10.2"/><path d="M840.3 254.5C842.1 253.9 857.4 249.2 860.0 248.3C862.6 247.4 867.5 245.4 868.5 245.0C869.5 244.6 871.0 244.1 871.5 244.2C872.0 244.3 873.7 245.7 874.5 246.5C875.3 247.3 878.8 252.0 880.0 253.0C881.2 254.0 886.5 256.3 888.0 257.0C889.5 257.7 895.3 259.3 897.0 260.5C898.7 261.7 905.3 268.0 907.0 270.0C908.7 272.0 914.5 280.5 916.0 283.0C917.5 285.5 922.1 294.7 923.0 297.0C923.9 299.3 925.7 305.0 926.0 308.0C926.3 311.0 926.1 326.0 926.0 330.0C925.9 334.0 925.2 347.8 924.4 352.0C923.6 356.2 918.3 371.8 917.0 376.0C915.7 380.2 911.0 394.2 910.0 398.0C909.0 401.8 906.4 416.2 906.0 418.0" stroke="#6e9f74" stroke-width="8.5"/><path d="M841.0 255.0C840.7 255.9 838.1 263.2 837.8 264.8C837.5 266.4 836.9 271.4 837.4 273.1C837.9 274.8 842.3 282.1 842.8 283.0" stroke="#161a17" stroke-width="10.2"/><path d="M841.0 255.0C840.7 255.9 838.1 263.2 837.8 264.8C837.5 266.4 836.9 271.4 837.4 273.1C837.9 274.8 842.3 282.1 842.8 283.0" stroke="#6e9f74" stroke-width="8.5"/><path d="M789.0 277.5C789.8 277.7 796.3 279.2 797.9 280.0C799.5 280.8 805.2 284.9 806.6 286.3C808.0 287.7 811.5 293.5 812.9 295.1C814.3 296.7 821.4 301.6 821.7 303.9C822.0 306.2 817.3 317.1 816.7 320.2C816.1 323.3 816.2 335.7 815.4 337.8C814.6 339.9 809.7 342.1 807.9 342.8C806.1 343.5 797.0 344.6 795.4 345.3C793.8 346.0 790.8 348.9 790.3 350.3C789.8 351.7 790.5 359.1 790.3 361.0C790.1 362.9 788.6 368.7 787.8 371.3C787.0 373.9 782.5 388.0 781.6 390.1C780.7 392.2 778.1 393.6 777.8 393.9" stroke="#161a17" stroke-width="10.2"/><path d="M789.0 277.5C789.8 277.7 796.3 279.2 797.9 280.0C799.5 280.8 805.2 284.9 806.6 286.3C808.0 287.7 811.5 293.5 812.9 295.1C814.3 296.7 821.4 301.6 821.7 303.9C822.0 306.2 817.3 317.1 816.7 320.2C816.1 323.3 816.2 335.7 815.4 337.8C814.6 339.9 809.7 342.1 807.9 342.8C806.1 343.5 797.0 344.6 795.4 345.3C793.8 346.0 790.8 348.9 790.3 350.3C789.8 351.7 790.5 359.1 790.3 361.0C790.1 362.9 788.6 368.7 787.8 371.3C787.0 373.9 782.5 388.0 781.6 390.1C780.7 392.2 778.1 393.6 777.8 393.9" stroke="#6e9f74" stroke-width="8.5"/><path d="M969.0 326.4C969.8 326.7 976.4 328.9 978.0 330.0C979.6 331.1 986.5 336.1 987.0 339.0C987.5 341.9 982.5 356.9 984.0 362.0C985.5 367.1 1002.8 387.0 1003.0 395.0C1003.2 403.0 987.5 445.0 986.0 450.0" stroke="#161a17" stroke-width="10.2"/><path d="M969.0 326.4C969.8 326.7 976.4 328.9 978.0 330.0C979.6 331.1 986.5 336.1 987.0 339.0C987.5 341.9 982.5 356.9 984.0 362.0C985.5 367.1 1002.8 387.0 1003.0 395.0C1003.2 403.0 987.5 445.0 986.0 450.0" stroke="#6e9f74" stroke-width="8.5"/><path d="M731.4 358.8C732.3 359.4 738.8 363.1 741.4 365.0C744.0 366.9 757.3 377.5 760.2 380.1C763.1 382.7 770.5 392.0 772.8 393.9C775.1 395.8 782.4 400.9 785.3 401.4C788.2 401.9 801.3 399.8 805.0 399.5C808.7 399.2 823.0 397.8 825.5 397.7C828.0 397.6 831.9 398.2 833.0 398.9C834.1 399.6 837.5 404.6 838.0 405.2" stroke="#161a17" stroke-width="10.2"/><path d="M731.4 358.8C732.3 359.4 738.8 363.1 741.4 365.0C744.0 366.9 757.3 377.5 760.2 380.1C763.1 382.7 770.5 392.0 772.8 393.9C775.1 395.8 782.4 400.9 785.3 401.4C788.2 401.9 801.3 399.8 805.0 399.5C808.7 399.2 823.0 397.8 825.5 397.7C828.0 397.6 831.9 398.2 833.0 398.9C834.1 399.6 837.5 404.6 838.0 405.2" stroke="#6e9f74" stroke-width="8.5"/><path d="M872.0 407.0L900.0 416.0" stroke="#161a17" stroke-width="10.2"/><path d="M872.0 407.0L900.0 416.0" stroke="#6e9f74" stroke-width="8.5"/><path d="M522.0 697.0C523.6 691.6 537.5 645.9 540.0 638.0C542.5 630.1 548.7 613.8 550.0 610.0C551.3 606.2 553.6 599.6 554.2 596.6C554.8 593.6 556.1 581.7 557.0 577.3C557.9 572.9 562.6 552.1 564.1 548.1C565.6 544.1 571.5 536.2 573.3 533.6C575.1 531.0 581.7 522.9 583.9 520.0C586.1 517.1 594.8 504.8 597.0 502.0C599.2 499.2 606.0 490.9 608.6 488.7C611.2 486.5 622.7 479.4 625.2 477.7C627.7 476.0 633.0 471.8 636.2 469.9C639.4 468.0 656.0 459.1 660.0 457.0C664.0 454.9 676.9 448.3 680.0 446.5C683.1 444.7 690.7 439.2 693.8 437.6C696.9 436.0 710.7 430.0 714.5 428.6C718.3 427.2 731.1 422.8 735.2 421.7C739.3 420.6 755.0 417.1 760.0 416.2C765.0 415.3 784.4 412.2 790.0 411.5C795.6 410.8 819.1 408.3 822.0 408.0" stroke="#161a17" stroke-width="10.2"/><path d="M522.0 697.0C523.6 691.6 537.5 645.9 540.0 638.0C542.5 630.1 548.7 613.8 550.0 610.0C551.3 606.2 553.6 599.6 554.2 596.6C554.8 593.6 556.1 581.7 557.0 577.3C557.9 572.9 562.6 552.1 564.1 548.1C565.6 544.1 571.5 536.2 573.3 533.6C575.1 531.0 581.7 522.9 583.9 520.0C586.1 517.1 594.8 504.8 597.0 502.0C599.2 499.2 606.0 490.9 608.6 488.7C611.2 486.5 622.7 479.4 625.2 477.7C627.7 476.0 633.0 471.8 636.2 469.9C639.4 468.0 656.0 459.1 660.0 457.0C664.0 454.9 676.9 448.3 680.0 446.5C683.1 444.7 690.7 439.2 693.8 437.6C696.9 436.0 710.7 430.0 714.5 428.6C718.3 427.2 731.1 422.8 735.2 421.7C739.3 420.6 755.0 417.1 760.0 416.2C765.0 415.3 784.4 412.2 790.0 411.5C795.6 410.8 819.1 408.3 822.0 408.0" stroke="#6e9f74" stroke-width="8.5"/><path d="M552.0 606.0C552.8 605.5 559.8 602.5 561.1 600.0C562.4 597.5 564.8 582.1 566.0 578.0C567.2 573.9 572.2 558.8 573.8 555.0C575.4 551.2 581.9 539.2 583.9 536.0C585.9 532.8 593.9 522.5 595.6 520.0C597.3 517.5 601.5 510.0 603.0 508.0C604.5 506.0 609.9 499.6 611.9 497.5C613.9 495.4 622.6 487.5 625.2 485.4C627.8 483.3 638.1 476.1 640.6 474.3C643.1 472.5 651.6 466.8 652.7 466.0" stroke="#161a17" stroke-width="10.2"/><path d="M552.0 606.0C552.8 605.5 559.8 602.5 561.1 600.0C562.4 597.5 564.8 582.1 566.0 578.0C567.2 573.9 572.2 558.8 573.8 555.0C575.4 551.2 581.9 539.2 583.9 536.0C585.9 532.8 593.9 522.5 595.6 520.0C597.3 517.5 601.5 510.0 603.0 508.0C604.5 506.0 609.9 499.6 611.9 497.5C613.9 495.4 622.6 487.5 625.2 485.4C627.8 483.3 638.1 476.1 640.6 474.3C643.1 472.5 651.6 466.8 652.7 466.0" stroke="#6e9f74" stroke-width="8.5"/><path d="M822.0 408.0C824.4 407.8 843.8 405.9 848.0 406.0C852.2 406.1 862.5 408.1 868.0 409.6C873.5 411.1 897.3 418.3 908.0 422.0C918.7 425.7 978.9 447.9 986.0 450.5" stroke="#161a17" stroke-width="10.2"/><path d="M822.0 408.0C824.4 407.8 843.8 405.9 848.0 406.0C852.2 406.1 862.5 408.1 868.0 409.6C873.5 411.1 897.3 418.3 908.0 422.0C918.7 425.7 978.9 447.9 986.0 450.5" stroke="#6e9f74" stroke-width="8.5"/><path d="M986.0 450.5L1030.0 467.0" stroke="#161a17" stroke-width="10.2"/><path d="M986.0 450.5L1030.0 467.0" stroke="#6e9f74" stroke-width="8.5"/><path d="M1027.0 465.0L1031.0 466.5" stroke="#161a17" stroke-width="10.2"/><path d="M1027.0 465.0L1031.0 466.5" stroke="#6e9f74" stroke-width="8.5"/><path d="M1030.0 467.0C1032.3 467.8 1035.9 469.3 1055.0 476.0C1074.1 482.7 1223.2 534.6 1240.0 540.5" stroke="#161a17" stroke-width="10.2"/><path d="M1030.0 467.0C1032.3 467.8 1035.9 469.3 1055.0 476.0C1074.1 482.7 1223.2 534.6 1240.0 540.5" stroke="#6e9f74" stroke-width="8.5"/><path d="M1064.0 479.0L1240.0 540.5" stroke="#161a17" stroke-width="10.2"/><path d="M1064.0 479.0L1240.0 540.5" stroke="#6e9f74" stroke-width="8.5"/><path d="M559.7 558.0C558.6 559.8 548.9 574.5 547.3 577.3C545.7 580.1 542.3 587.3 541.8 588.3" stroke="#161a17" stroke-width="10.2"/><path d="M559.7 558.0C558.6 559.8 548.9 574.5 547.3 577.3C545.7 580.1 542.3 587.3 541.8 588.3" stroke="#6e9f74" stroke-width="8.5"/><path d="M548.0 643.0L549.0 645.0" stroke="#161a17" stroke-width="10.2"/><path d="M548.0 643.0L549.0 645.0" stroke="#6e9f74" stroke-width="8.5"/><path d="M486.6 566.2C488.0 565.1 499.1 556.3 501.7 553.8C504.3 551.3 513.0 541.6 515.5 538.6C518.0 535.6 526.4 524.2 529.3 520.7C532.2 517.2 544.9 503.3 547.3 500.0C549.7 496.7 555.0 486.6 556.2 484.2C557.4 481.8 559.5 475.9 560.2 474.1C560.9 472.3 563.7 464.9 564.0 464.0" stroke="#161a17" stroke-width="10.2"/><path d="M486.6 566.2C488.0 565.1 499.1 556.3 501.7 553.8C504.3 551.3 513.0 541.6 515.5 538.6C518.0 535.6 526.4 524.2 529.3 520.7C532.2 517.2 544.9 503.3 547.3 500.0C549.7 496.7 555.0 486.6 556.2 484.2C557.4 481.8 559.5 475.9 560.2 474.1C560.9 472.3 563.7 464.9 564.0 464.0" stroke="#6e9f74" stroke-width="8.5"/><path d="M515.5 538.6C517.0 539.4 529.2 545.5 532.1 546.9C535.0 548.3 544.8 552.8 547.3 553.8C549.8 554.8 558.6 557.6 559.7 558.0" stroke="#161a17" stroke-width="10.2"/><path d="M515.5 538.6C517.0 539.4 529.2 545.5 532.1 546.9C535.0 548.3 544.8 552.8 547.3 553.8C549.8 554.8 558.6 557.6 559.7 558.0" stroke="#6e9f74" stroke-width="8.5"/><path d="M552.8 546.9L562.5 551.0" stroke="#161a17" stroke-width="10.2"/><path d="M552.8 546.9L562.5 551.0" stroke="#6e9f74" stroke-width="8.5"/><path d="M825.0 530.0C825.2 530.4 825.4 535.4 827.0 534.0C828.6 532.6 841.5 516.7 843.0 515.0" stroke="#161a17" stroke-width="10.2"/><path d="M825.0 530.0C825.2 530.4 825.4 535.4 827.0 534.0C828.6 532.6 841.5 516.7 843.0 515.0" stroke="#6e9f74" stroke-width="8.5"/><path d="M892.0 581.0C891.4 581.3 887.4 581.0 885.0 584.0C882.6 587.0 867.0 610.6 866.0 614.4C865.0 618.2 872.9 624.2 874.0 626.0C875.1 627.8 875.8 631.5 878.0 634.0C880.2 636.5 895.7 651.7 898.0 653.0C900.3 654.3 902.5 648.5 903.0 648.0" stroke="#161a17" stroke-width="10.2"/><path d="M892.0 581.0C891.4 581.3 887.4 581.0 885.0 584.0C882.6 587.0 867.0 610.6 866.0 614.4C865.0 618.2 872.9 624.2 874.0 626.0C875.1 627.8 875.8 631.5 878.0 634.0C880.2 636.5 895.7 651.7 898.0 653.0C900.3 654.3 902.5 648.5 903.0 648.0" stroke="#6e9f74" stroke-width="8.5"/><path d="M889.0 644.0L898.0 644.0" stroke="#161a17" stroke-width="10.2"/><path d="M889.0 644.0L898.0 644.0" stroke="#6e9f74" stroke-width="8.5"/><path d="M1206.0 626.6L1240.0 600.0" stroke="#161a17" stroke-width="10.2"/><path d="M1206.0 626.6L1240.0 600.0" stroke="#6e9f74" stroke-width="8.5"/><path d="M686.0 517.0C687.5 519.1 698.5 536.5 702.0 540.0C705.5 543.5 719.9 554.1 724.0 556.0C728.1 557.9 744.9 560.5 747.0 561.0" stroke="#161a17" stroke-width="10.2"/><path d="M686.0 517.0C687.5 519.1 698.5 536.5 702.0 540.0C705.5 543.5 719.9 554.1 724.0 556.0C728.1 557.9 744.9 560.5 747.0 561.0" stroke="#6e9f74" stroke-width="8.5"/><path d="M591.5 410.2L608.8 429.6" stroke="#161a17" stroke-width="10.2"/><path d="M591.5 410.2L608.8 429.6" stroke="#6e9f74" stroke-width="8.5"/><path d="M674.8 416.8L684.0 427.4" stroke="#161a17" stroke-width="10.2"/><path d="M674.8 416.8L684.0 427.4" stroke="#6e9f74" stroke-width="8.5"/><path d="M615.6 455.9L633.9 440.3" stroke="#161a17" stroke-width="10.2"/><path d="M615.6 455.9L633.9 440.3" stroke="#6e9f74" stroke-width="8.5"/><path d="M624.1 425.1L633.4 435.5" stroke="#161a17" stroke-width="10.2"/><path d="M624.1 425.1L633.4 435.5" stroke="#6e9f74" stroke-width="8.5"/><path d="M552.5 402.9L562.8 415.1" stroke="#161a17" stroke-width="10.2"/><path d="M552.5 402.9L562.8 415.1" stroke="#6e9f74" stroke-width="8.5"/><path d="M663.0 424.1L670.5 417.6" stroke="#161a17" stroke-width="10.2"/><path d="M663.0 424.1L670.5 417.6" stroke="#6e9f74" stroke-width="8.5"/><path d="M626.0 370.4L630.0 374.9" stroke="#161a17" stroke-width="10.2"/><path d="M626.0 370.4L630.0 374.9" stroke="#6e9f74" stroke-width="8.5"/><path d="M672.9 423.5L683.5 435.5" stroke="#161a17" stroke-width="10.2"/><path d="M672.9 423.5L683.5 435.5" stroke="#6e9f74" stroke-width="8.5"/><path d="M735.5 353.7L744.6 345.9" stroke="#161a17" stroke-width="10.2"/><path d="M735.5 353.7L744.6 345.9" stroke="#6e9f74" stroke-width="8.5"/><path d="M580.8 444.3L591.2 456.5" stroke="#161a17" stroke-width="10.2"/><path d="M580.8 444.3L591.2 456.5" stroke="#6e9f74" stroke-width="8.5"/><path d="M674.4 434.0L701.4 410.2" stroke="#161a17" stroke-width="10.2"/><path d="M674.4 434.0L701.4 410.2" stroke="#6e9f74" stroke-width="8.5"/><path d="M626.3 380.6L638.2 394.1" stroke="#161a17" stroke-width="10.2"/><path d="M626.3 380.6L638.2 394.1" stroke="#6e9f74" stroke-width="8.5"/><path d="M623.2 397.4L644.4 379.1" stroke="#161a17" stroke-width="10.2"/><path d="M623.2 397.4L644.4 379.1" stroke="#6e9f74" stroke-width="8.5"/><path d="M643.7 461.0L669.2 438.5" stroke="#161a17" stroke-width="10.2"/><path d="M643.7 461.0L669.2 438.5" stroke="#6e9f74" stroke-width="8.5"/><path d="M725.1 345.1L734.3 355.6" stroke="#161a17" stroke-width="10.2"/><path d="M725.1 345.1L734.3 355.6" stroke="#6e9f74" stroke-width="8.5"/><path d="M685.1 361.9L692.9 371.0" stroke="#161a17" stroke-width="10.2"/><path d="M685.1 361.9L692.9 371.0" stroke="#6e9f74" stroke-width="8.5"/><path d="M645.3 382.6L662.3 402.3" stroke="#161a17" stroke-width="10.2"/><path d="M645.3 382.6L662.3 402.3" stroke="#6e9f74" stroke-width="8.5"/><path d="M593.1 463.1L632.2 428.8" stroke="#161a17" stroke-width="10.2"/><path d="M593.1 463.1L632.2 428.8" stroke="#6e9f74" stroke-width="8.5"/><path d="M637.6 424.2L661.6 403.1" stroke="#161a17" stroke-width="10.2"/><path d="M637.6 424.2L661.6 403.1" stroke="#6e9f74" stroke-width="8.5"/><path d="M610.3 399.6L649.5 365.4" stroke="#161a17" stroke-width="10.2"/><path d="M610.3 399.6L649.5 365.4" stroke="#6e9f74" stroke-width="8.5"/><path d="M589.2 433.0L606.0 452.9" stroke="#161a17" stroke-width="10.2"/><path d="M589.2 433.0L606.0 452.9" stroke="#6e9f74" stroke-width="8.5"/><path d="M705.2 372.1L715.7 384.2" stroke="#161a17" stroke-width="10.2"/><path d="M705.2 372.1L715.7 384.2" stroke="#6e9f74" stroke-width="8.5"/><path d="M551.0 412.7L558.6 406.2" stroke="#161a17" stroke-width="10.2"/><path d="M551.0 412.7L558.6 406.2" stroke="#6e9f74" stroke-width="8.5"/><path d="M711.0 365.3L725.3 381.9" stroke="#161a17" stroke-width="10.2"/><path d="M711.0 365.3L725.3 381.9" stroke="#6e9f74" stroke-width="8.5"/><path d="M705.2 347.7L711.8 355.2" stroke="#161a17" stroke-width="10.2"/><path d="M705.2 347.7L711.8 355.2" stroke="#6e9f74" stroke-width="8.5"/><path d="M610.0 423.9L617.8 433.0" stroke="#161a17" stroke-width="10.2"/><path d="M610.0 423.9L617.8 433.0" stroke="#6e9f74" stroke-width="8.5"/><path d="M621.2 454.9L629.2 463.8" stroke="#161a17" stroke-width="10.2"/><path d="M621.2 454.9L629.2 463.8" stroke="#6e9f74" stroke-width="8.5"/><path d="M687.4 360.1L697.9 350.9" stroke="#161a17" stroke-width="10.2"/><path d="M687.4 360.1L697.9 350.9" stroke="#6e9f74" stroke-width="8.5"/><path d="M622.1 460.0L635.6 448.1" stroke="#161a17" stroke-width="10.2"/><path d="M622.1 460.0L635.6 448.1" stroke="#6e9f74" stroke-width="8.5"/><path d="M624.3 404.2L633.4 414.8" stroke="#161a17" stroke-width="10.2"/><path d="M624.3 404.2L633.4 414.8" stroke="#6e9f74" stroke-width="8.5"/><path d="M679.4 387.6L683.9 383.6" stroke="#161a17" stroke-width="10.2"/><path d="M679.4 387.6L683.9 383.6" stroke="#6e9f74" stroke-width="8.5"/><path d="M558.3 425.4L576.5 409.7" stroke="#161a17" stroke-width="10.2"/><path d="M558.3 425.4L576.5 409.7" stroke="#6e9f74" stroke-width="8.5"/><path d="M635.6 397.7L667.5 370.4" stroke="#161a17" stroke-width="10.2"/><path d="M635.6 397.7L667.5 370.4" stroke="#6e9f74" stroke-width="8.5"/><path d="M711.9 359.1L732.9 340.7" stroke="#161a17" stroke-width="10.2"/><path d="M711.9 359.1L732.9 340.7" stroke="#6e9f74" stroke-width="8.5"/><path d="M581.1 453.6L623.2 416.6" stroke="#161a17" stroke-width="10.2"/><path d="M581.1 453.6L623.2 416.6" stroke="#6e9f74" stroke-width="8.5"/><path d="M642.7 399.2L657.3 415.7" stroke="#161a17" stroke-width="10.2"/><path d="M642.7 399.2L657.3 415.7" stroke="#6e9f74" stroke-width="8.5"/><path d="M622.6 380.9L636.2 369.1" stroke="#161a17" stroke-width="10.2"/><path d="M622.6 380.9L636.2 369.1" stroke="#6e9f74" stroke-width="8.5"/><path d="M627.9 412.4L677.5 368.8" stroke="#161a17" stroke-width="10.2"/><path d="M627.9 412.4L677.5 368.8" stroke="#6e9f74" stroke-width="8.5"/><path d="M564.9 430.5L613.4 388.8" stroke="#161a17" stroke-width="10.2"/><path d="M564.9 430.5L613.4 388.8" stroke="#6e9f74" stroke-width="8.5"/><path d="M659.3 445.0L663.2 449.6" stroke="#161a17" stroke-width="10.2"/><path d="M659.3 445.0L663.2 449.6" stroke="#6e9f74" stroke-width="8.5"/><path d="M661.5 437.4L669.3 446.6" stroke="#161a17" stroke-width="10.2"/><path d="M661.5 437.4L669.3 446.6" stroke="#6e9f74" stroke-width="8.5"/><path d="M634.0 369.6L644.5 381.7" stroke="#161a17" stroke-width="10.2"/><path d="M634.0 369.6L644.5 381.7" stroke="#6e9f74" stroke-width="8.5"/><path d="M680.0 364.6L686.6 372.1" stroke="#161a17" stroke-width="10.2"/><path d="M680.0 364.6L686.6 372.1" stroke="#6e9f74" stroke-width="8.5"/><path d="M584.3 459.9L610.1 437.8" stroke="#161a17" stroke-width="10.2"/><path d="M584.3 459.9L610.1 437.8" stroke="#6e9f74" stroke-width="8.5"/><path d="M589.9 447.1L601.6 460.8" stroke="#161a17" stroke-width="10.2"/><path d="M589.9 447.1L601.6 460.8" stroke="#6e9f74" stroke-width="8.5"/><path d="M721.6 392.4L727.6 387.1" stroke="#161a17" stroke-width="10.2"/><path d="M721.6 392.4L727.6 387.1" stroke="#6e9f74" stroke-width="8.5"/><path d="M642.6 415.3L647.8 421.4" stroke="#161a17" stroke-width="10.2"/><path d="M642.6 415.3L647.8 421.4" stroke="#6e9f74" stroke-width="8.5"/><path d="M650.7 398.4L667.9 417.8" stroke="#161a17" stroke-width="10.2"/><path d="M650.7 398.4L667.9 417.8" stroke="#6e9f74" stroke-width="8.5"/><path d="M719.7 388.9L723.7 393.4" stroke="#161a17" stroke-width="10.2"/><path d="M719.7 388.9L723.7 393.4" stroke="#6e9f74" stroke-width="8.5"/><path d="M599.6 386.3L606.2 393.8" stroke="#161a17" stroke-width="10.2"/><path d="M599.6 386.3L606.2 393.8" stroke="#6e9f74" stroke-width="8.5"/><path d="M651.9 401.9L682.3 375.9" stroke="#161a17" stroke-width="10.2"/><path d="M651.9 401.9L682.3 375.9" stroke="#6e9f74" stroke-width="8.5"/><path d="M644.3 368.2L648.3 372.8" stroke="#161a17" stroke-width="10.2"/><path d="M644.3 368.2L648.3 372.8" stroke="#6e9f74" stroke-width="8.5"/><path d="M575.4 416.6L589.6 433.4" stroke="#161a17" stroke-width="10.2"/><path d="M575.4 416.6L589.6 433.4" stroke="#6e9f74" stroke-width="8.5"/><path d="M711.2 393.7L724.9 382.0" stroke="#161a17" stroke-width="10.2"/><path d="M711.2 393.7L724.9 382.0" stroke="#6e9f74" stroke-width="8.5"/><path d="M587.4 397.4L604.3 417.2" stroke="#161a17" stroke-width="10.2"/><path d="M587.4 397.4L604.3 417.2" stroke="#6e9f74" stroke-width="8.5"/><path d="M609.5 438.2L646.0 407.0" stroke="#161a17" stroke-width="10.2"/><path d="M609.5 438.2L646.0 407.0" stroke="#6e9f74" stroke-width="8.5"/><path d="M661.8 435.8L701.4 402.0" stroke="#161a17" stroke-width="10.2"/><path d="M661.8 435.8L701.4 402.0" stroke="#6e9f74" stroke-width="8.5"/><path d="M677.5 397.0L697.1 419.7" stroke="#161a17" stroke-width="10.2"/><path d="M677.5 397.0L697.1 419.7" stroke="#6e9f74" stroke-width="8.5"/><path d="M712.7 343.2L730.0 362.6" stroke="#161a17" stroke-width="10.2"/><path d="M712.7 343.2L730.0 362.6" stroke="#6e9f74" stroke-width="8.5"/><path d="M668.0 369.8L686.3 354.2" stroke="#161a17" stroke-width="10.2"/><path d="M668.0 369.8L686.3 354.2" stroke="#6e9f74" stroke-width="8.5"/><path d="M689.8 354.4L705.5 372.5" stroke="#161a17" stroke-width="10.2"/><path d="M689.8 354.4L705.5 372.5" stroke="#6e9f74" stroke-width="8.5"/><path d="M628.7 399.1L636.5 408.2" stroke="#161a17" stroke-width="10.2"/><path d="M628.7 399.1L636.5 408.2" stroke="#6e9f74" stroke-width="8.5"/><path d="M599.6 430.6L618.2 451.5" stroke="#161a17" stroke-width="10.2"/><path d="M599.6 430.6L618.2 451.5" stroke="#6e9f74" stroke-width="8.5"/><path d="M677.6 403.0L692.8 390.1" stroke="#161a17" stroke-width="10.2"/><path d="M677.6 403.0L692.8 390.1" stroke="#6e9f74" stroke-width="8.5"/><path d="M669.3 360.8L681.3 374.3" stroke="#161a17" stroke-width="10.2"/><path d="M669.3 360.8L681.3 374.3" stroke="#6e9f74" stroke-width="8.5"/><path d="M577.6 405.9L593.5 423.8" stroke="#161a17" stroke-width="10.2"/><path d="M577.6 405.9L593.5 423.8" stroke="#6e9f74" stroke-width="8.5"/><path d="M699.7 387.1L706.3 394.6" stroke="#161a17" stroke-width="10.2"/><path d="M699.7 387.1L706.3 394.6" stroke="#6e9f74" stroke-width="8.5"/><path d="M568.3 436.3L610.5 399.5" stroke="#161a17" stroke-width="10.2"/><path d="M568.3 436.3L610.5 399.5" stroke="#6e9f74" stroke-width="8.5"/><path d="M657.5 373.8L670.6 388.9" stroke="#161a17" stroke-width="10.2"/><path d="M657.5 373.8L670.6 388.9" stroke="#6e9f74" stroke-width="8.5"/><path d="M614.1 435.6L635.4 459.5" stroke="#161a17" stroke-width="10.2"/><path d="M614.1 435.6L635.4 459.5" stroke="#6e9f74" stroke-width="8.5"/><path d="M612.0 400.3L633.3 424.2" stroke="#161a17" stroke-width="10.2"/><path d="M612.0 400.3L633.3 424.2" stroke="#6e9f74" stroke-width="8.5"/><path d="M698.6 350.9L709.1 363.0" stroke="#161a17" stroke-width="10.2"/><path d="M698.6 350.9L709.1 363.0" stroke="#6e9f74" stroke-width="8.5"/><path d="M580.4 445.1L632.0 400.8" stroke="#161a17" stroke-width="10.2"/><path d="M580.4 445.1L632.0 400.8" stroke="#6e9f74" stroke-width="8.5"/><path d="M698.5 385.2L727.4 360.6" stroke="#161a17" stroke-width="10.2"/><path d="M698.5 385.2L727.4 360.6" stroke="#6e9f74" stroke-width="8.5"/><path d="M646.5 377.3L666.2 360.4" stroke="#161a17" stroke-width="10.2"/><path d="M646.5 377.3L666.2 360.4" stroke="#6e9f74" stroke-width="8.5"/><path d="M671.5 376.3L684.6 391.4" stroke="#161a17" stroke-width="10.2"/><path d="M671.5 376.3L684.6 391.4" stroke="#6e9f74" stroke-width="8.5"/><path d="M593.3 344.0L606.5 332.1" stroke="#161a17" stroke-width="10.2"/><path d="M593.3 344.0L606.5 332.1" stroke="#6e9f74" stroke-width="8.5"/><path d="M588.3 340.2L588.9 340.8" stroke="#161a17" stroke-width="10.2"/><path d="M588.3 340.2L588.9 340.8" stroke="#6e9f74" stroke-width="8.5"/><path d="M590.2 342.7C592.5 345.2 600.2 353.6 604.0 357.8C607.7 362.0 611.3 366.1 612.8 367.8" stroke="#161a17" stroke-width="10.2"/><path d="M590.2 342.7C592.5 345.2 600.2 353.6 604.0 357.8C607.7 362.0 611.3 366.1 612.8 367.8" stroke="#6e9f74" stroke-width="8.5"/><path d="M601.5 362.8C604.2 361.1 614.8 355.9 617.8 352.8C620.7 349.6 618.8 345.4 619.0 344.0" stroke="#161a17" stroke-width="10.2"/><path d="M601.5 362.8C604.2 361.1 614.8 355.9 617.8 352.8C620.7 349.6 618.8 345.4 619.0 344.0" stroke="#6e9f74" stroke-width="8.5"/><path d="M625.3 330.2L641.6 326.4" stroke="#161a17" stroke-width="10.2"/><path d="M625.3 330.2L641.6 326.4" stroke="#6e9f74" stroke-width="8.5"/><path d="M619.0 333.3L625.3 344.0" stroke="#161a17" stroke-width="10.2"/><path d="M619.0 333.3L625.3 344.0" stroke="#6e9f74" stroke-width="8.5"/><path d="M625.3 330.2C626.3 332.5 629.9 339.8 631.6 344.0C633.2 348.2 634.7 353.4 635.3 355.3" stroke="#161a17" stroke-width="10.2"/><path d="M625.3 330.2C626.3 332.5 629.9 339.8 631.6 344.0C633.2 348.2 634.7 353.4 635.3 355.3" stroke="#6e9f74" stroke-width="8.5"/><path d="M632.8 336.4L645.4 333.9" stroke="#161a17" stroke-width="10.2"/><path d="M632.8 336.4L645.4 333.9" stroke="#6e9f74" stroke-width="8.5"/><path d="M631.6 345.2L646.6 341.5" stroke="#161a17" stroke-width="10.2"/><path d="M631.6 345.2L646.6 341.5" stroke="#6e9f74" stroke-width="8.5"/><path d="M630.3 355.3C632.8 354.4 641.4 352.1 645.4 350.2C649.3 348.4 652.7 345.0 654.2 344.0" stroke="#161a17" stroke-width="10.2"/><path d="M630.3 355.3C632.8 354.4 641.4 352.1 645.4 350.2C649.3 348.4 652.7 345.0 654.2 344.0" stroke="#6e9f74" stroke-width="8.5"/><path d="M641.6 326.4C642.0 328.3 641.8 332.9 644.1 337.7C646.4 342.5 653.5 352.3 655.4 355.3" stroke="#161a17" stroke-width="10.2"/><path d="M641.6 326.4C642.0 328.3 641.8 332.9 644.1 337.7C646.4 342.5 653.5 352.3 655.4 355.3" stroke="#6e9f74" stroke-width="8.5"/><path d="M646.6 321.4C647.5 323.7 650.4 331.4 651.6 335.2C652.9 339.0 653.7 342.5 654.2 344.0" stroke="#161a17" stroke-width="10.2"/><path d="M646.6 321.4C647.5 323.7 650.4 331.4 651.6 335.2C652.9 339.0 653.7 342.5 654.2 344.0" stroke="#6e9f74" stroke-width="8.5"/><path d="M654.2 323.9L660.4 337.7" stroke="#161a17" stroke-width="10.2"/><path d="M654.2 323.9L660.4 337.7" stroke="#6e9f74" stroke-width="8.5"/><path d="M661.7 315.1C662.3 317.2 664.0 324.3 665.5 327.7C666.9 331.0 669.6 333.9 670.5 335.2" stroke="#161a17" stroke-width="10.2"/><path d="M661.7 315.1C662.3 317.2 664.0 324.3 665.5 327.7C666.9 331.0 669.6 333.9 670.5 335.2" stroke="#6e9f74" stroke-width="8.5"/><path d="M671.7 312.6L675.5 326.4" stroke="#161a17" stroke-width="10.2"/><path d="M671.7 312.6L675.5 326.4" stroke="#6e9f74" stroke-width="8.5"/><path d="M671.7 312.6L693.1 306.3" stroke="#161a17" stroke-width="10.2"/><path d="M671.7 312.6L693.1 306.3" stroke="#6e9f74" stroke-width="8.5"/><path d="M678.0 320.1L695.6 315.1" stroke="#161a17" stroke-width="10.2"/><path d="M678.0 320.1L695.6 315.1" stroke="#6e9f74" stroke-width="8.5"/><path d="M678.0 320.1C679.3 321.0 681.9 323.7 685.5 325.2C689.2 326.6 697.6 328.3 700.0 328.9" stroke="#161a17" stroke-width="10.2"/><path d="M678.0 320.1C679.3 321.0 681.9 323.7 685.5 325.2C689.2 326.6 697.6 328.3 700.0 328.9" stroke="#6e9f74" stroke-width="8.5"/><path d="M693.1 306.3L700.0 326.4" stroke="#161a17" stroke-width="10.2"/><path d="M693.1 306.3L700.0 326.4" stroke="#6e9f74" stroke-width="8.5"/><path d="M695.6 292.5L700.0 302.6" stroke="#161a17" stroke-width="10.2"/><path d="M695.6 292.5L700.0 302.6" stroke="#6e9f74" stroke-width="8.5"/><path d="M651.6 360.3C654.8 357.6 665.2 348.2 670.5 344.0C675.7 339.8 680.9 336.7 683.0 335.2" stroke="#161a17" stroke-width="10.2"/><path d="M651.6 360.3C654.8 357.6 665.2 348.2 670.5 344.0C675.7 339.8 680.9 336.7 683.0 335.2" stroke="#6e9f74" stroke-width="8.5"/><path d="M668.0 333.9C670.3 334.6 677.8 335.4 681.8 337.7C685.7 340.0 690.1 346.1 691.8 347.7" stroke="#161a17" stroke-width="10.2"/><path d="M668.0 333.9C670.3 334.6 677.8 335.4 681.8 337.7C685.7 340.0 690.1 346.1 691.8 347.7" stroke="#6e9f74" stroke-width="8.5"/><path d="M640.4 365.3C642.7 363.4 650.0 357.6 654.2 354.0C658.3 350.5 663.6 345.6 665.5 344.0" stroke="#161a17" stroke-width="10.2"/><path d="M640.4 365.3C642.7 363.4 650.0 357.6 654.2 354.0C658.3 350.5 663.6 345.6 665.5 344.0" stroke="#6e9f74" stroke-width="8.5"/><path d="M607.7 371.6L615.3 365.3" stroke="#161a17" stroke-width="10.2"/><path d="M607.7 371.6L615.3 365.3" stroke="#6e9f74" stroke-width="8.5"/><path d="M670.5 360.3C672.6 361.1 680.3 365.3 683.0 365.3C685.7 365.3 686.2 361.1 686.8 360.3" stroke="#161a17" stroke-width="10.2"/><path d="M670.5 360.3C672.6 361.1 680.3 365.3 683.0 365.3C685.7 365.3 686.2 361.1 686.8 360.3" stroke="#6e9f74" stroke-width="8.5"/><path d="M683.0 351.5C684.5 350.9 689.0 347.1 691.8 347.7C694.6 348.4 698.6 354.0 700.0 355.3" stroke="#161a17" stroke-width="10.2"/><path d="M683.0 351.5C684.5 350.9 689.0 347.1 691.8 347.7C694.6 348.4 698.6 354.0 700.0 355.3" stroke="#6e9f74" stroke-width="8.5"/><path d="M693.1 337.7L700.0 344.0" stroke="#161a17" stroke-width="10.2"/><path d="M693.1 337.7L700.0 344.0" stroke="#6e9f74" stroke-width="8.5"/><path d="M645.4 365.3L657.9 376.0" stroke="#161a17" stroke-width="10.2"/><path d="M645.4 365.3L657.9 376.0" stroke="#6e9f74" stroke-width="8.5"/><path d="M657.9 360.3L670.5 376.0" stroke="#161a17" stroke-width="10.2"/><path d="M657.9 360.3L670.5 376.0" stroke="#6e9f74" stroke-width="8.5"/><path d="M700.0 292.5L706.9 290.0" stroke="#161a17" stroke-width="10.2"/><path d="M700.0 292.5L706.9 290.0" stroke="#6e9f74" stroke-width="8.5"/><path d="M721.3 342.8L748.3 308.3" stroke="#161a17" stroke-width="10.2"/><path d="M721.3 342.8L748.3 308.3" stroke="#6e9f74" stroke-width="8.5"/><path d="M748.3 308.3C750.1 309.6 756.1 313.8 759.0 316.4C761.8 319.0 764.4 321.2 765.2 324.0C766.1 326.7 765.7 329.8 764.0 332.7C762.3 335.7 758.1 340.7 755.2 341.5C752.3 342.4 747.9 338.4 746.4 337.8" stroke="#161a17" stroke-width="10.2"/><path d="M748.3 308.3C750.1 309.6 756.1 313.8 759.0 316.4C761.8 319.0 764.4 321.2 765.2 324.0C766.1 326.7 765.7 329.8 764.0 332.7C762.3 335.7 758.1 340.7 755.2 341.5C752.3 342.4 747.9 338.4 746.4 337.8" stroke="#6e9f74" stroke-width="8.5"/><path d="M733.9 327.7L755.2 341.5" stroke="#161a17" stroke-width="10.2"/><path d="M733.9 327.7L755.2 341.5" stroke="#6e9f74" stroke-width="8.5"/><path d="M731.4 346.5L750.2 320.2" stroke="#161a17" stroke-width="10.2"/><path d="M731.4 346.5L750.2 320.2" stroke="#6e9f74" stroke-width="8.5"/><path d="M759.0 308.9L780.3 286.3" stroke="#161a17" stroke-width="10.2"/><path d="M759.0 308.9L780.3 286.3" stroke="#6e9f74" stroke-width="8.5"/><path d="M755.2 293.8C757.4 291.1 764.2 278.8 768.4 277.5C772.6 276.3 777.9 283.6 780.3 286.3C782.7 289.0 782.4 292.6 782.8 293.8" stroke="#161a17" stroke-width="10.2"/><path d="M755.2 293.8C757.4 291.1 764.2 278.8 768.4 277.5C772.6 276.3 777.9 283.6 780.3 286.3C782.7 289.0 782.4 292.6 782.8 293.8" stroke="#6e9f74" stroke-width="8.5"/><path d="M755.2 293.8C756.9 295.1 761.9 301.8 765.2 301.4C768.6 300.9 773.6 293.0 775.3 291.3" stroke="#161a17" stroke-width="10.2"/><path d="M755.2 293.8C756.9 295.1 761.9 301.8 765.2 301.4C768.6 300.9 773.6 293.0 775.3 291.3" stroke="#6e9f74" stroke-width="8.5"/><path d="M770.3 293.8L780.3 300.1" stroke="#161a17" stroke-width="10.2"/><path d="M770.3 293.8L780.3 300.1" stroke="#6e9f74" stroke-width="8.5"/><path d="M765.2 322.7C767.3 320.0 775.3 309.9 777.8 306.4C780.3 302.8 779.9 302.2 780.3 301.4" stroke="#161a17" stroke-width="10.2"/><path d="M765.2 322.7C767.3 320.0 775.3 309.9 777.8 306.4C780.3 302.8 779.9 302.2 780.3 301.4" stroke="#6e9f74" stroke-width="8.5"/><path d="M780.3 311.4C781.6 309.3 784.9 300.3 787.8 298.9C790.8 297.4 794.5 300.3 797.9 302.6C801.2 304.9 807.1 308.9 807.9 312.7C808.7 316.4 805.4 323.5 802.9 325.2C800.4 326.9 794.5 323.1 792.8 322.7" stroke="#161a17" stroke-width="10.2"/><path d="M780.3 311.4C781.6 309.3 784.9 300.3 787.8 298.9C790.8 297.4 794.5 300.3 797.9 302.6C801.2 304.9 807.1 308.9 807.9 312.7C808.7 316.4 805.4 323.5 802.9 325.2C800.4 326.9 794.5 323.1 792.8 322.7" stroke="#6e9f74" stroke-width="8.5"/><path d="M782.8 317.7C783.6 316.0 785.1 309.3 787.8 307.6C790.5 306.0 797.2 307.6 799.1 307.6" stroke="#161a17" stroke-width="10.2"/><path d="M782.8 317.7C783.6 316.0 785.1 309.3 787.8 307.6C790.5 306.0 797.2 307.6 799.1 307.6" stroke="#6e9f74" stroke-width="8.5"/><path d="M792.8 322.7C793.5 321.2 794.3 314.8 796.6 313.9C798.9 313.1 805.0 317.1 806.6 317.7" stroke="#161a17" stroke-width="10.2"/><path d="M792.8 322.7C793.5 321.2 794.3 314.8 796.6 313.9C798.9 313.1 805.0 317.1 806.6 317.7" stroke="#6e9f74" stroke-width="8.5"/><path d="M760.2 322.7L766.5 318.9" stroke="#161a17" stroke-width="10.2"/><path d="M760.2 322.7L766.5 318.9" stroke="#6e9f74" stroke-width="8.5"/><path d="M702.5 303.9C705.4 302.2 715.3 292.6 720.1 293.8C724.9 295.1 729.5 308.5 731.4 311.4" stroke="#161a17" stroke-width="10.2"/><path d="M702.5 303.9C705.4 302.2 715.3 292.6 720.1 293.8C724.9 295.1 729.5 308.5 731.4 311.4" stroke="#6e9f74" stroke-width="8.5"/><path d="M707.5 305.1L712.5 316.4" stroke="#161a17" stroke-width="10.2"/><path d="M707.5 305.1L712.5 316.4" stroke="#6e9f74" stroke-width="8.5"/><path d="M700.0 313.9C701.3 315.4 706.7 320.0 707.5 322.7C708.4 325.4 705.4 329.0 705.0 330.2" stroke="#161a17" stroke-width="10.2"/><path d="M700.0 313.9C701.3 315.4 706.7 320.0 707.5 322.7C708.4 325.4 705.4 329.0 705.0 330.2" stroke="#6e9f74" stroke-width="8.5"/><path d="M721.3 306.4L726.3 307.6" stroke="#161a17" stroke-width="10.2"/><path d="M721.3 306.4L726.3 307.6" stroke="#6e9f74" stroke-width="8.5"/><path d="M707.5 344.0L728.9 361.0" stroke="#161a17" stroke-width="10.2"/><path d="M707.5 344.0L728.9 361.0" stroke="#6e9f74" stroke-width="8.5"/><path d="M700.0 341.5L707.5 344.0" stroke="#161a17" stroke-width="10.2"/><path d="M700.0 341.5L707.5 344.0" stroke="#6e9f74" stroke-width="8.5"/><path d="M700.0 357.8C701.3 356.8 704.8 353.4 707.5 351.6C710.2 349.7 714.8 347.4 716.3 346.5" stroke="#161a17" stroke-width="10.2"/><path d="M700.0 357.8C701.3 356.8 704.8 353.4 707.5 351.6C710.2 349.7 714.8 347.4 716.3 346.5" stroke="#6e9f74" stroke-width="8.5"/><path d="M728.9 352.8C730.1 351.6 734.7 345.7 736.4 345.3C738.1 344.9 739.5 348.6 738.9 350.3C738.3 352.0 733.7 354.5 732.6 355.3" stroke="#161a17" stroke-width="10.2"/><path d="M728.9 352.8C730.1 351.6 734.7 345.7 736.4 345.3C738.1 344.9 739.5 348.6 738.9 350.3C738.3 352.0 733.7 354.5 732.6 355.3" stroke="#6e9f74" stroke-width="8.5"/><path d="M712.5 361.0L721.3 351.6" stroke="#161a17" stroke-width="10.2"/><path d="M712.5 361.0L721.3 351.6" stroke="#6e9f74" stroke-width="8.5"/><path d="M700.0 292.6L705.0 298.9" stroke="#161a17" stroke-width="10.2"/><path d="M700.0 292.6L705.0 298.9" stroke="#6e9f74" stroke-width="8.5"/><path d="M697.5 322.7L703.8 335.2" stroke="#161a17" stroke-width="10.2"/><path d="M697.5 322.7L703.8 335.2" stroke="#6e9f74" stroke-width="8.5"/><path d="M700.0 355.0C702.7 357.7 712.3 367.5 716.3 371.3C720.3 375.1 722.6 376.5 723.8 377.6" stroke="#161a17" stroke-width="10.2"/><path d="M700.0 355.0C702.7 357.7 712.3 367.5 716.3 371.3C720.3 375.1 722.6 376.5 723.8 377.6" stroke="#6e9f74" stroke-width="8.5"/><path d="M735.1 361.3C733.0 364.2 728.4 371.5 722.6 378.8C716.7 386.2 703.8 400.8 700.0 405.2" stroke="#161a17" stroke-width="10.2"/><path d="M735.1 361.3C733.0 364.2 728.4 371.5 722.6 378.8C716.7 386.2 703.8 400.8 700.0 405.2" stroke="#6e9f74" stroke-width="8.5"/><path d="M728.9 358.8L735.1 361.3" stroke="#161a17" stroke-width="10.2"/><path d="M728.9 358.8L735.1 361.3" stroke="#6e9f74" stroke-width="8.5"/><path d="M716.3 355.0L728.9 366.3" stroke="#161a17" stroke-width="10.2"/><path d="M716.3 355.0L728.9 366.3" stroke="#6e9f74" stroke-width="8.5"/><path d="M707.5 366.3L716.3 373.8" stroke="#161a17" stroke-width="10.2"/><path d="M707.5 366.3L716.3 373.8" stroke="#6e9f74" stroke-width="8.5"/><path d="M700.0 390.1L711.3 377.6" stroke="#161a17" stroke-width="10.2"/><path d="M700.0 390.1L711.3 377.6" stroke="#6e9f74" stroke-width="8.5"/><path d="M723.8 388.9C724.7 389.7 726.6 392.6 728.9 393.9C731.2 395.2 733.7 395.6 737.6 396.4C741.6 397.2 748.7 398.1 752.7 398.9C756.7 399.8 760.0 401.0 761.5 401.4" stroke="#161a17" stroke-width="10.2"/><path d="M723.8 388.9C724.7 389.7 726.6 392.6 728.9 393.9C731.2 395.2 733.7 395.6 737.6 396.4C741.6 397.2 748.7 398.1 752.7 398.9C756.7 399.8 760.0 401.0 761.5 401.4" stroke="#6e9f74" stroke-width="8.5"/><path d="M728.9 396.4C728.6 398.5 725.5 406.7 727.6 409.0C729.7 411.3 737.2 410.8 741.4 410.2C745.6 409.6 748.3 408.1 752.7 405.2C757.1 402.3 765.2 394.7 767.8 392.6" stroke="#161a17" stroke-width="10.2"/><path d="M728.9 396.4C728.6 398.5 725.5 406.7 727.6 409.0C729.7 411.3 737.2 410.8 741.4 410.2C745.6 409.6 748.3 408.1 752.7 405.2C757.1 402.3 765.2 394.7 767.8 392.6" stroke="#6e9f74" stroke-width="8.5"/><path d="M736.4 396.4L735.8 415.2" stroke="#161a17" stroke-width="10.2"/><path d="M736.4 396.4L735.8 415.2" stroke="#6e9f74" stroke-width="8.5"/><path d="M747.7 401.4C747.1 399.5 743.7 393.9 743.9 390.1C744.1 386.4 746.6 379.9 748.9 378.8C751.2 377.8 754.6 381.6 757.7 383.9C760.9 386.2 766.1 391.2 767.8 392.6" stroke="#161a17" stroke-width="10.2"/><path d="M747.7 401.4C747.1 399.5 743.7 393.9 743.9 390.1C744.1 386.4 746.6 379.9 748.9 378.8C751.2 377.8 754.6 381.6 757.7 383.9C760.9 386.2 766.1 391.2 767.8 392.6" stroke="#6e9f74" stroke-width="8.5"/><path d="M752.7 396.4C752.3 395.2 750.0 391.0 750.2 388.9C750.4 386.8 752.3 383.9 754.0 383.9C755.6 383.9 759.2 388.0 760.2 388.9" stroke="#161a17" stroke-width="10.2"/><path d="M752.7 396.4C752.3 395.2 750.0 391.0 750.2 388.9C750.4 386.8 752.3 383.9 754.0 383.9C755.6 383.9 759.2 388.0 760.2 388.9" stroke="#6e9f74" stroke-width="8.5"/><path d="M757.7 392.6L759.0 388.9" stroke="#161a17" stroke-width="10.2"/><path d="M757.7 392.6L759.0 388.9" stroke="#6e9f74" stroke-width="8.5"/><path d="M700.0 414.0C701.3 414.2 705.9 414.2 707.5 415.2C709.2 416.3 709.6 419.4 710.0 420.2" stroke="#161a17" stroke-width="10.2"/><path d="M700.0 414.0C701.3 414.2 705.9 414.2 707.5 415.2C709.2 416.3 709.6 419.4 710.0 420.2" stroke="#6e9f74" stroke-width="8.5"/><path d="M703.8 410.2L705.0 420.2" stroke="#161a17" stroke-width="10.2"/><path d="M703.8 410.2L705.0 420.2" stroke="#6e9f74" stroke-width="8.5"/><path d="M633.9 464.5C635.3 466.2 639.7 470.8 642.7 474.5C645.6 478.3 649.4 483.1 651.4 487.1C653.5 491.1 653.5 493.8 655.2 498.4C656.9 503.0 659.8 511.4 661.5 514.7C663.2 518.0 664.6 517.8 665.2 518.5" stroke="#161a17" stroke-width="10.2"/><path d="M633.9 464.5C635.3 466.2 639.7 470.8 642.7 474.5C645.6 478.3 649.4 483.1 651.4 487.1C653.5 491.1 653.5 493.8 655.2 498.4C656.9 503.0 659.8 511.4 661.5 514.7C663.2 518.0 664.6 517.8 665.2 518.5" stroke="#6e9f74" stroke-width="8.5"/><path d="M675.3 479.6C676.3 482.5 680.3 491.3 681.6 497.1C682.8 503.0 682.6 511.8 682.8 514.7" stroke="#161a17" stroke-width="10.2"/><path d="M675.3 479.6C676.3 482.5 680.3 491.3 681.6 497.1C682.8 503.0 682.6 511.8 682.8 514.7" stroke="#6e9f74" stroke-width="8.5"/><path d="M690.3 488.3L697.9 509.7" stroke="#161a17" stroke-width="10.2"/><path d="M690.3 488.3L697.9 509.7" stroke="#6e9f74" stroke-width="8.5"/><path d="M641.4 490.9L645.2 507.2" stroke="#161a17" stroke-width="10.2"/><path d="M641.4 490.9L645.2 507.2" stroke="#6e9f74" stroke-width="8.5"/><path d="M655.2 483.3L682.8 475.8" stroke="#161a17" stroke-width="10.2"/><path d="M655.2 483.3L682.8 475.8" stroke="#6e9f74" stroke-width="8.5"/><path d="M641.4 490.9L687.8 480.8" stroke="#161a17" stroke-width="10.2"/><path d="M641.4 490.9L687.8 480.8" stroke="#6e9f74" stroke-width="8.5"/><path d="M625.1 498.4L690.3 488.3" stroke="#161a17" stroke-width="10.2"/><path d="M625.1 498.4L690.3 488.3" stroke="#6e9f74" stroke-width="8.5"/><path d="M642.7 499.6C650.8 498.4 681.3 493.4 691.6 492.1C701.8 490.9 702.0 492.1 704.1 492.1" stroke="#161a17" stroke-width="10.2"/><path d="M642.7 499.6C650.8 498.4 681.3 493.4 691.6 492.1C701.8 490.9 702.0 492.1 704.1 492.1" stroke="#6e9f74" stroke-width="8.5"/><path d="M643.9 505.9L695.4 498.4" stroke="#161a17" stroke-width="10.2"/><path d="M643.9 505.9L695.4 498.4" stroke="#6e9f74" stroke-width="8.5"/><path d="M650.2 510.9C655.2 509.9 672.4 505.7 680.3 504.7C688.2 503.6 694.9 504.7 697.9 504.7" stroke="#161a17" stroke-width="10.2"/><path d="M650.2 510.9C655.2 509.9 672.4 505.7 680.3 504.7C688.2 503.6 694.9 504.7 697.9 504.7" stroke="#6e9f74" stroke-width="8.5"/><path d="M667.8 516.0L680.3 508.4" stroke="#161a17" stroke-width="10.2"/><path d="M667.8 516.0L680.3 508.4" stroke="#6e9f74" stroke-width="8.5"/><path d="M706.6 474.5C707.1 476.2 708.1 481.2 709.2 484.6C710.2 487.9 711.0 490.0 712.9 494.6C714.8 499.2 718.4 507.6 720.5 512.2C722.5 516.8 724.6 520.6 725.5 522.2" stroke="#161a17" stroke-width="10.2"/><path d="M706.6 474.5C707.1 476.2 708.1 481.2 709.2 484.6C710.2 487.9 711.0 490.0 712.9 494.6C714.8 499.2 718.4 507.6 720.5 512.2C722.5 516.8 724.6 520.6 725.5 522.2" stroke="#6e9f74" stroke-width="8.5"/><path d="M706.6 474.5C709.0 476.0 716.9 479.1 720.5 483.3C724.0 487.5 726.1 494.2 728.0 499.6C729.9 505.1 732.2 510.9 731.7 516.0C731.3 521.0 727.8 527.0 725.5 529.8C723.2 532.5 719.2 531.8 717.9 532.3" stroke="#161a17" stroke-width="10.2"/><path d="M706.6 474.5C709.0 476.0 716.9 479.1 720.5 483.3C724.0 487.5 726.1 494.2 728.0 499.6C729.9 505.1 732.2 510.9 731.7 516.0C731.3 521.0 727.8 527.0 725.5 529.8C723.2 532.5 719.2 531.8 717.9 532.3" stroke="#6e9f74" stroke-width="8.5"/><path d="M699.1 483.3C701.0 483.3 708.5 482.3 710.4 483.3C712.3 484.4 710.4 488.6 710.4 489.6" stroke="#161a17" stroke-width="10.2"/><path d="M699.1 483.3C701.0 483.3 708.5 482.3 710.4 483.3C712.3 484.4 710.4 488.6 710.4 489.6" stroke="#6e9f74" stroke-width="8.5"/><path d="M704.1 493.4L726.7 500.9" stroke="#161a17" stroke-width="10.2"/><path d="M704.1 493.4L726.7 500.9" stroke="#6e9f74" stroke-width="8.5"/><path d="M710.4 508.4L720.5 507.2" stroke="#161a17" stroke-width="10.2"/><path d="M710.4 508.4L720.5 507.2" stroke="#6e9f74" stroke-width="8.5"/><path d="M710.4 508.4L712.9 522.2" stroke="#161a17" stroke-width="10.2"/><path d="M710.4 508.4L712.9 522.2" stroke="#6e9f74" stroke-width="8.5"/><path d="M702.9 534.8L720.5 526.0" stroke="#161a17" stroke-width="10.2"/><path d="M702.9 534.8L720.5 526.0" stroke="#6e9f74" stroke-width="8.5"/><path d="M670.3 517.2C673.2 518.0 682.4 519.3 687.8 522.2C693.3 525.2 696.6 529.6 702.9 534.8C709.2 539.9 721.7 549.9 725.5 553.0" stroke="#161a17" stroke-width="10.2"/><path d="M670.3 517.2C673.2 518.0 682.4 519.3 687.8 522.2C693.3 525.2 696.6 529.6 702.9 534.8C709.2 539.9 721.7 549.9 725.5 553.0" stroke="#6e9f74" stroke-width="8.5"/><path d="M687.8 512.2C689.9 513.0 696.8 514.7 700.4 517.2C703.9 519.7 707.7 525.6 709.2 527.2" stroke="#161a17" stroke-width="10.2"/><path d="M687.8 512.2C689.9 513.0 696.8 514.7 700.4 517.2C703.9 519.7 707.7 525.6 709.2 527.2" stroke="#6e9f74" stroke-width="8.5"/><path d="M681.6 524.7L696.6 532.3" stroke="#161a17" stroke-width="10.2"/><path d="M681.6 524.7L696.6 532.3" stroke="#6e9f74" stroke-width="8.5"/><path d="M630.1 502.2C628.2 503.2 621.3 505.3 618.8 508.4C616.3 511.6 615.9 516.2 615.1 521.0C614.2 525.8 613.4 532.5 613.8 537.3C614.2 542.1 616.9 547.7 617.6 549.8" stroke="#161a17" stroke-width="10.2"/><path d="M630.1 502.2C628.2 503.2 621.3 505.3 618.8 508.4C616.3 511.6 615.9 516.2 615.1 521.0C614.2 525.8 613.4 532.5 613.8 537.3C614.2 542.1 616.9 547.7 617.6 549.8" stroke="#6e9f74" stroke-width="8.5"/><path d="M632.6 507.2C631.2 508.2 625.5 510.1 623.8 513.4C622.2 516.8 622.2 523.9 622.6 527.2C623.0 530.6 624.3 533.5 626.3 533.5C628.4 533.5 633.7 528.3 635.1 527.2" stroke="#161a17" stroke-width="10.2"/><path d="M632.6 507.2C631.2 508.2 625.5 510.1 623.8 513.4C622.2 516.8 622.2 523.9 622.6 527.2C623.0 530.6 624.3 533.5 626.3 533.5C628.4 533.5 633.7 528.3 635.1 527.2" stroke="#6e9f74" stroke-width="8.5"/><path d="M628.9 521.0C629.3 520.3 629.3 516.6 631.4 517.2C633.5 517.8 637.4 521.6 641.4 524.7C645.4 527.9 651.2 532.9 655.2 536.0C659.2 539.2 661.9 540.7 665.2 543.6C668.6 546.4 673.6 551.4 675.3 553.0" stroke="#161a17" stroke-width="10.2"/><path d="M628.9 521.0C629.3 520.3 629.3 516.6 631.4 517.2C633.5 517.8 637.4 521.6 641.4 524.7C645.4 527.9 651.2 532.9 655.2 536.0C659.2 539.2 661.9 540.7 665.2 543.6C668.6 546.4 673.6 551.4 675.3 553.0" stroke="#6e9f74" stroke-width="8.5"/><path d="M618.8 539.8C619.2 541.0 619.7 545.1 621.3 547.3C623.0 549.5 627.6 552.0 628.9 553.0" stroke="#161a17" stroke-width="10.2"/><path d="M618.8 539.8C619.2 541.0 619.7 545.1 621.3 547.3C623.0 549.5 627.6 552.0 628.9 553.0" stroke="#6e9f74" stroke-width="8.5"/><path d="M625.1 537.3L637.6 549.8" stroke="#161a17" stroke-width="10.2"/><path d="M625.1 537.3L637.6 549.8" stroke="#6e9f74" stroke-width="8.5"/><path d="M635.1 542.3C637.0 541.0 643.3 534.8 646.4 534.8C649.6 534.8 654.4 539.8 654.0 542.3C653.5 544.8 645.6 548.6 643.9 549.8" stroke="#161a17" stroke-width="10.2"/><path d="M635.1 542.3C637.0 541.0 643.3 534.8 646.4 534.8C649.6 534.8 654.4 539.8 654.0 542.3C653.5 544.8 645.6 548.6 643.9 549.8" stroke="#6e9f74" stroke-width="8.5"/><path d="M650.2 518.5C650.8 519.5 652.3 525.4 654.0 524.7C655.6 524.1 659.2 516.4 660.2 514.7" stroke="#161a17" stroke-width="10.2"/><path d="M650.2 518.5C650.8 519.5 652.3 525.4 654.0 524.7C655.6 524.1 659.2 516.4 660.2 514.7" stroke="#6e9f74" stroke-width="8.5"/><path d="M660.2 532.3L666.5 514.7" stroke="#161a17" stroke-width="10.2"/><path d="M660.2 532.3L666.5 514.7" stroke="#6e9f74" stroke-width="8.5"/><path d="M656.5 547.3L662.7 548.6" stroke="#161a17" stroke-width="10.2"/><path d="M656.5 547.3L662.7 548.6" stroke="#6e9f74" stroke-width="8.5"/><path d="M670.3 545.0C670.7 546.3 672.2 550.0 672.8 552.5C673.4 555.0 673.9 558.8 674.1 560.1" stroke="#161a17" stroke-width="10.2"/><path d="M670.3 545.0C670.7 546.3 672.2 550.0 672.8 552.5C673.4 555.0 673.9 558.8 674.1 560.1" stroke="#6e9f74" stroke-width="8.5"/><path d="M615.1 545.0C616.3 545.8 619.7 549.2 622.6 550.0C625.5 550.9 629.3 550.9 632.7 550.0C636.0 549.2 641.0 545.8 642.7 545.0" stroke="#161a17" stroke-width="10.2"/><path d="M615.1 545.0C616.3 545.8 619.7 549.2 622.6 550.0C625.5 550.9 629.3 550.9 632.7 550.0C636.0 549.2 641.0 545.8 642.7 545.0" stroke="#6e9f74" stroke-width="8.5"/><path d="M637.7 545.0C638.1 546.3 638.3 550.2 640.2 552.5C642.1 554.8 645.6 555.9 649.0 558.8C652.3 561.7 657.5 567.0 660.3 570.1C663.0 573.2 664.0 574.9 665.3 577.6C666.5 580.3 667.2 582.6 667.8 586.4C668.4 590.2 668.8 597.9 669.0 600.2" stroke="#161a17" stroke-width="10.2"/><path d="M637.7 545.0C638.1 546.3 638.3 550.2 640.2 552.5C642.1 554.8 645.6 555.9 649.0 558.8C652.3 561.7 657.5 567.0 660.3 570.1C663.0 573.2 664.0 574.9 665.3 577.6C666.5 580.3 667.2 582.6 667.8 586.4C668.4 590.2 668.8 597.9 669.0 600.2" stroke="#6e9f74" stroke-width="8.5"/><path d="M650.2 547.5L660.3 550.0" stroke="#161a17" stroke-width="10.2"/><path d="M650.2 547.5L660.3 550.0" stroke="#6e9f74" stroke-width="8.5"/><path d="M621.4 566.3L637.7 552.5" stroke="#161a17" stroke-width="10.2"/><path d="M621.4 566.3L637.7 552.5" stroke="#6e9f74" stroke-width="8.5"/><path d="M626.4 570.1L642.7 557.5" stroke="#161a17" stroke-width="10.2"/><path d="M626.4 570.1L642.7 557.5" stroke="#6e9f74" stroke-width="8.5"/><path d="M630.2 575.1L646.5 562.6" stroke="#161a17" stroke-width="10.2"/><path d="M630.2 575.1L646.5 562.6" stroke="#6e9f74" stroke-width="8.5"/><path d="M632.7 580.1L650.2 570.1" stroke="#161a17" stroke-width="10.2"/><path d="M632.7 580.1L650.2 570.1" stroke="#6e9f74" stroke-width="8.5"/><path d="M621.4 566.3L632.7 580.1" stroke="#161a17" stroke-width="10.2"/><path d="M621.4 566.3L632.7 580.1" stroke="#6e9f74" stroke-width="8.5"/><path d="M638.9 582.6C637.7 584.7 633.7 591.6 631.4 595.2C629.1 598.7 626.2 602.5 625.1 604.0" stroke="#161a17" stroke-width="10.2"/><path d="M638.9 582.6C637.7 584.7 633.7 591.6 631.4 595.2C629.1 598.7 626.2 602.5 625.1 604.0" stroke="#6e9f74" stroke-width="8.5"/><path d="M659.6 582.6L665.3 593.3" stroke="#161a17" stroke-width="10.2"/><path d="M659.6 582.6L665.3 593.3" stroke="#6e9f74" stroke-width="8.5"/><path d="M640.2 587.7C642.3 588.7 649.4 591.2 652.7 593.9C656.1 596.7 658.2 600.8 660.3 604.0C662.4 607.1 664.4 611.3 665.3 612.8" stroke="#161a17" stroke-width="10.2"/><path d="M640.2 587.7C642.3 588.7 649.4 591.2 652.7 593.9C656.1 596.7 658.2 600.8 660.3 604.0C662.4 607.1 664.4 611.3 665.3 612.8" stroke="#6e9f74" stroke-width="8.5"/><path d="M637.7 595.2L646.5 599.0" stroke="#161a17" stroke-width="10.2"/><path d="M637.7 595.2L646.5 599.0" stroke="#6e9f74" stroke-width="8.5"/><path d="M655.2 595.2C653.8 597.3 649.0 604.4 646.5 607.7C644.0 611.1 641.2 614.0 640.2 615.3" stroke="#161a17" stroke-width="10.2"/><path d="M655.2 595.2C653.8 597.3 649.0 604.4 646.5 607.7C644.0 611.1 641.2 614.0 640.2 615.3" stroke="#6e9f74" stroke-width="8.5"/><path d="M639.6 608.4L640.2 610.2" stroke="#161a17" stroke-width="10.2"/><path d="M639.6 608.4L640.2 610.2" stroke="#6e9f74" stroke-width="8.5"/><path d="M670.3 604.0C672.8 602.9 681.6 599.6 685.4 597.7C689.1 595.8 691.6 593.5 692.9 592.7" stroke="#161a17" stroke-width="10.2"/><path d="M670.3 604.0C672.8 602.9 681.6 599.6 685.4 597.7C689.1 595.8 691.6 593.5 692.9 592.7" stroke="#6e9f74" stroke-width="8.5"/><path d="M671.6 610.2L689.1 602.7" stroke="#161a17" stroke-width="10.2"/><path d="M671.6 610.2L689.1 602.7" stroke="#6e9f74" stroke-width="8.5"/><path d="M670.3 616.5L690.4 609.0" stroke="#161a17" stroke-width="10.2"/><path d="M670.3 616.5L690.4 609.0" stroke="#6e9f74" stroke-width="8.5"/><path d="M692.9 592.7C693.5 593.9 697.1 597.5 696.6 600.2C696.2 602.9 691.4 607.5 690.4 609.0" stroke="#161a17" stroke-width="10.2"/><path d="M692.9 592.7C693.5 593.9 697.1 597.5 696.6 600.2C696.2 602.9 691.4 607.5 690.4 609.0" stroke="#6e9f74" stroke-width="8.5"/><path d="M665.3 612.8C665.1 615.1 664.0 622.7 664.0 626.6C664.0 630.4 665.1 634.4 665.3 636.0" stroke="#161a17" stroke-width="10.2"/><path d="M665.3 612.8C665.1 615.1 664.0 622.7 664.0 626.6C664.0 630.4 665.1 634.4 665.3 636.0" stroke="#6e9f74" stroke-width="8.5"/><path d="M670.3 604.0C670.5 606.7 671.6 614.9 671.6 620.3C671.6 625.6 670.5 633.4 670.3 636.0" stroke="#161a17" stroke-width="10.2"/><path d="M670.3 604.0C670.5 606.7 671.6 614.9 671.6 620.3C671.6 625.6 670.5 633.4 670.3 636.0" stroke="#6e9f74" stroke-width="8.5"/><path d="M625.1 605.2C622.2 609.6 610.7 626.5 607.6 631.6C604.4 636.7 606.5 635.2 606.3 636.0" stroke="#161a17" stroke-width="10.2"/><path d="M625.1 605.2C622.2 609.6 610.7 626.5 607.6 631.6C604.4 636.7 606.5 635.2 606.3 636.0" stroke="#6e9f74" stroke-width="8.5"/><path d="M631.4 607.7L615.1 630.3" stroke="#161a17" stroke-width="10.2"/><path d="M631.4 607.7L615.1 630.3" stroke="#6e9f74" stroke-width="8.5"/><path d="M615.1 624.0C617.8 623.4 625.5 621.3 631.4 620.3C637.3 619.2 645.8 619.9 650.2 617.8C654.6 615.7 656.5 609.4 657.8 607.7" stroke="#161a17" stroke-width="10.2"/><path d="M615.1 624.0C617.8 623.4 625.5 621.3 631.4 620.3C637.3 619.2 645.8 619.9 650.2 617.8C654.6 615.7 656.5 609.4 657.8 607.7" stroke="#6e9f74" stroke-width="8.5"/><path d="M628.9 615.3C629.5 616.9 631.6 621.9 632.7 625.3C633.7 628.8 634.8 634.2 635.2 636.0" stroke="#161a17" stroke-width="10.2"/><path d="M628.9 615.3C629.5 616.9 631.6 621.9 632.7 625.3C633.7 628.8 634.8 634.2 635.2 636.0" stroke="#6e9f74" stroke-width="8.5"/><path d="M622.6 626.6C626.0 626.3 636.4 625.9 642.7 625.3C649.0 624.7 657.3 623.2 660.3 622.8" stroke="#161a17" stroke-width="10.2"/><path d="M622.6 626.6C626.0 626.3 636.4 625.9 642.7 625.3C649.0 624.7 657.3 623.2 660.3 622.8" stroke="#6e9f74" stroke-width="8.5"/><path d="M618.9 632.8C622.4 632.4 633.7 631.2 640.2 630.3C646.7 629.5 654.8 628.2 657.8 627.8" stroke="#161a17" stroke-width="10.2"/><path d="M618.9 632.8C622.4 632.4 633.7 631.2 640.2 630.3C646.7 629.5 654.8 628.2 657.8 627.8" stroke="#6e9f74" stroke-width="8.5"/><path d="M645.2 625.3L647.7 636.0" stroke="#161a17" stroke-width="10.2"/><path d="M645.2 625.3L647.7 636.0" stroke="#6e9f74" stroke-width="8.5"/><path d="M652.7 625.3L655.2 636.0" stroke="#161a17" stroke-width="10.2"/><path d="M652.7 625.3L655.2 636.0" stroke="#6e9f74" stroke-width="8.5"/><path d="M608.8 635.1C608.0 636.2 602.1 638.0 603.8 641.4C605.5 644.7 615.7 651.4 618.9 655.2C622.0 659.0 622.0 662.5 622.6 664.0" stroke="#161a17" stroke-width="10.2"/><path d="M608.8 635.1C608.0 636.2 602.1 638.0 603.8 641.4C605.5 644.7 615.7 651.4 618.9 655.2C622.0 659.0 622.0 662.5 622.6 664.0" stroke="#6e9f74" stroke-width="8.5"/><path d="M620.1 642.6C621.4 645.2 624.7 654.8 627.6 657.7C630.6 660.6 630.6 662.7 637.7 660.2C644.8 657.7 664.7 647.2 670.3 642.6C675.9 638.0 671.3 634.3 671.6 632.6" stroke="#161a17" stroke-width="10.2"/><path d="M620.1 642.6C621.4 645.2 624.7 654.8 627.6 657.7C630.6 660.6 630.6 662.7 637.7 660.2C644.8 657.7 664.7 647.2 670.3 642.6C675.9 638.0 671.3 634.3 671.6 632.6" stroke="#6e9f74" stroke-width="8.5"/><path d="M623.9 636.4C625.3 638.9 629.9 648.5 632.7 651.4C635.4 654.4 634.3 656.0 640.2 653.9C646.0 651.8 663.2 641.4 667.8 638.9" stroke="#161a17" stroke-width="10.2"/><path d="M623.9 636.4C625.3 638.9 629.9 648.5 632.7 651.4C635.4 654.4 634.3 656.0 640.2 653.9C646.0 651.8 663.2 641.4 667.8 638.9" stroke="#6e9f74" stroke-width="8.5"/><path d="M627.6 633.9C633.9 631.1 658.2 622.4 665.3 617.5C672.4 612.7 669.5 607.1 670.3 605.0" stroke="#161a17" stroke-width="10.2"/><path d="M627.6 633.9C633.9 631.1 658.2 622.4 665.3 617.5C672.4 612.7 669.5 607.1 670.3 605.0" stroke="#6e9f74" stroke-width="8.5"/><path d="M631.4 640.1L665.3 625.1" stroke="#161a17" stroke-width="10.2"/><path d="M631.4 640.1L665.3 625.1" stroke="#6e9f74" stroke-width="8.5"/><path d="M633.9 646.4L667.8 632.6" stroke="#161a17" stroke-width="10.2"/><path d="M633.9 646.4L667.8 632.6" stroke="#6e9f74" stroke-width="8.5"/><path d="M633.9 620.1C636.0 624.4 642.9 639.7 646.5 646.4C650.0 653.1 653.8 657.9 655.2 660.2" stroke="#161a17" stroke-width="10.2"/><path d="M633.9 620.1C636.0 624.4 642.9 639.7 646.5 646.4C650.0 653.1 653.8 657.9 655.2 660.2" stroke="#6e9f74" stroke-width="8.5"/><path d="M642.7 617.5L652.7 637.6" stroke="#161a17" stroke-width="10.2"/><path d="M642.7 617.5L652.7 637.6" stroke="#6e9f74" stroke-width="8.5"/><path d="M650.2 625.1L656.5 636.4" stroke="#161a17" stroke-width="10.2"/><path d="M650.2 625.1L656.5 636.4" stroke="#6e9f74" stroke-width="8.5"/><path d="M655.2 622.6L661.5 633.9" stroke="#161a17" stroke-width="10.2"/><path d="M655.2 622.6L661.5 633.9" stroke="#6e9f74" stroke-width="8.5"/><path d="M608.8 635.1L627.6 607.5" stroke="#161a17" stroke-width="10.2"/><path d="M608.8 635.1L627.6 607.5" stroke="#6e9f74" stroke-width="8.5"/><path d="M615.1 630.1L631.4 605.0" stroke="#161a17" stroke-width="10.2"/><path d="M615.1 630.1L631.4 605.0" stroke="#6e9f74" stroke-width="8.5"/><path d="M617.6 627.6C623.0 625.1 643.1 616.3 650.2 612.5C657.3 608.8 658.6 606.3 660.3 605.0" stroke="#161a17" stroke-width="10.2"/><path d="M617.6 627.6C623.0 625.1 643.1 616.3 650.2 612.5C657.3 608.8 658.6 606.3 660.3 605.0" stroke="#6e9f74" stroke-width="8.5"/><path d="M664.0 605.0C664.2 607.1 665.5 613.4 665.3 617.5C665.1 621.7 663.2 628.0 662.8 630.1" stroke="#161a17" stroke-width="10.2"/><path d="M664.0 605.0C664.2 607.1 665.5 613.4 665.3 617.5C665.1 621.7 663.2 628.0 662.8 630.1" stroke="#6e9f74" stroke-width="8.5"/><path d="M670.3 605.0L671.6 632.6" stroke="#161a17" stroke-width="10.2"/><path d="M670.3 605.0L671.6 632.6" stroke="#6e9f74" stroke-width="8.5"/><path d="M671.6 612.5L690.4 605.0" stroke="#161a17" stroke-width="10.2"/><path d="M671.6 612.5L690.4 605.0" stroke="#6e9f74" stroke-width="8.5"/><path d="M675.3 621.3L691.6 612.5" stroke="#161a17" stroke-width="10.2"/><path d="M675.3 621.3L691.6 612.5" stroke="#6e9f74" stroke-width="8.5"/><path d="M606.3 642.6L621.4 657.7" stroke="#161a17" stroke-width="10.2"/><path d="M606.3 642.6L621.4 657.7" stroke="#6e9f74" stroke-width="8.5"/><path d="M612.6 643.9L626.4 660.2" stroke="#161a17" stroke-width="10.2"/><path d="M612.6 643.9L626.4 660.2" stroke="#6e9f74" stroke-width="8.5"/><path d="M568.1 374.5L584.6 396.0" stroke="#161a17" stroke-width="10.2"/><path d="M568.1 374.5L584.6 396.0" stroke="#6e9f74" stroke-width="8.5"/><path d="M578.0 366.3L596.2 389.4" stroke="#161a17" stroke-width="10.2"/><path d="M578.0 366.3L596.2 389.4" stroke="#6e9f74" stroke-width="8.5"/><path d="M558.1 382.8L573.0 402.7" stroke="#161a17" stroke-width="10.2"/><path d="M558.1 382.8L573.0 402.7" stroke="#6e9f74" stroke-width="8.5"/><path d="M548.2 387.8L584.6 361.3" stroke="#161a17" stroke-width="10.2"/><path d="M548.2 387.8L584.6 361.3" stroke="#6e9f74" stroke-width="8.5"/><path d="M548.2 387.8L563.1 409.3" stroke="#161a17" stroke-width="10.2"/><path d="M548.2 387.8L563.1 409.3" stroke="#6e9f74" stroke-width="8.5"/><path d="M554.8 392.7L584.6 371.2" stroke="#161a17" stroke-width="10.2"/><path d="M554.8 392.7L584.6 371.2" stroke="#6e9f74" stroke-width="8.5"/><path d="M559.8 399.3L587.9 379.5" stroke="#161a17" stroke-width="10.2"/><path d="M559.8 399.3L587.9 379.5" stroke="#6e9f74" stroke-width="8.5"/><path d="M564.7 406.0L592.9 386.1" stroke="#161a17" stroke-width="10.2"/><path d="M564.7 406.0L592.9 386.1" stroke="#6e9f74" stroke-width="8.5"/><path d="M584.6 361.3L599.5 381.1" stroke="#161a17" stroke-width="10.2"/><path d="M584.6 361.3L599.5 381.1" stroke="#6e9f74" stroke-width="8.5"/><path d="M619.0 512.0C618.7 514.7 616.7 523.0 617.0 528.0C617.3 533.0 620.3 539.7 621.0 542.0" stroke="#161a17" stroke-width="10.2"/><path d="M619.0 512.0C618.7 514.7 616.7 523.0 617.0 528.0C617.3 533.0 620.3 539.7 621.0 542.0" stroke="#6e9f74" stroke-width="8.5"/><path d="M627.0 510.0C626.8 513.3 625.2 525.0 626.0 530.0C626.8 535.0 631.0 538.3 632.0 540.0" stroke="#161a17" stroke-width="10.2"/><path d="M627.0 510.0C626.8 513.3 625.2 525.0 626.0 530.0C626.8 535.0 631.0 538.3 632.0 540.0" stroke="#6e9f74" stroke-width="8.5"/><path d="M636.0 515.0L640.0 530.0" stroke="#161a17" stroke-width="10.2"/><path d="M636.0 515.0L640.0 530.0" stroke="#6e9f74" stroke-width="8.5"/><path d="M645.0 520.0L655.0 530.0" stroke="#161a17" stroke-width="10.2"/><path d="M645.0 520.0L655.0 530.0" stroke="#6e9f74" stroke-width="8.5"/><path d="M612.0 640.0L640.0 627.0" stroke="#161a17" stroke-width="10.2"/><path d="M612.0 640.0L640.0 627.0" stroke="#6e9f74" stroke-width="8.5"/><path d="M616.0 646.0L648.0 632.0" stroke="#161a17" stroke-width="10.2"/><path d="M616.0 646.0L648.0 632.0" stroke="#6e9f74" stroke-width="8.5"/><path d="M622.0 652.0L656.0 636.0" stroke="#161a17" stroke-width="10.2"/><path d="M622.0 652.0L656.0 636.0" stroke="#6e9f74" stroke-width="8.5"/><path d="M610.0 634.0L632.0 622.0" stroke="#161a17" stroke-width="10.2"/><path d="M610.0 634.0L632.0 622.0" stroke="#6e9f74" stroke-width="8.5"/><path d="M640.0 612.0L668.0 600.0" stroke="#161a17" stroke-width="10.2"/><path d="M640.0 612.0L668.0 600.0" stroke="#6e9f74" stroke-width="8.5"/><path d="M644.0 618.0L670.0 607.0" stroke="#161a17" stroke-width="10.2"/><path d="M644.0 618.0L670.0 607.0" stroke="#6e9f74" stroke-width="8.5"/><path d="M628.0 598.0L640.0 604.0" stroke="#161a17" stroke-width="10.2"/><path d="M628.0 598.0L640.0 604.0" stroke="#6e9f74" stroke-width="8.5"/><path d="M634.0 590.0L650.0 597.0" stroke="#161a17" stroke-width="10.2"/><path d="M634.0 590.0L650.0 597.0" stroke="#6e9f74" stroke-width="8.5"/><path d="M554.2 450.1L584.2 470.1" stroke="#161a17" stroke-width="10.2"/><path d="M554.2 450.1L584.2 470.1" stroke="#6e9f74" stroke-width="8.5"/><path d="M560.2 474.1C561.5 472.8 565.2 468.8 568.2 466.1C571.2 463.5 576.6 459.4 578.2 458.1" stroke="#161a17" stroke-width="10.2"/><path d="M560.2 474.1C561.5 472.8 565.2 468.8 568.2 466.1C571.2 463.5 576.6 459.4 578.2 458.1" stroke="#6e9f74" stroke-width="8.5"/><path d="M562.2 476.1L582.2 486.2" stroke="#161a17" stroke-width="10.2"/><path d="M562.2 476.1L582.2 486.2" stroke="#6e9f74" stroke-width="8.5"/><path d="M564.2 490.2C566.2 488.5 572.9 480.5 576.2 480.1C579.6 479.8 584.6 485.5 584.2 488.2C583.9 490.8 575.9 494.8 574.2 496.2" stroke="#161a17" stroke-width="10.2"/><path d="M564.2 490.2C566.2 488.5 572.9 480.5 576.2 480.1C579.6 479.8 584.6 485.5 584.2 488.2C583.9 490.8 575.9 494.8 574.2 496.2" stroke="#6e9f74" stroke-width="8.5"/><path d="M568.2 494.2L580.2 484.2" stroke="#161a17" stroke-width="10.2"/><path d="M568.2 494.2L580.2 484.2" stroke="#6e9f74" stroke-width="8.5"/><g stroke="#9d84c2" stroke-width="0.900"><path d="M285.0 325.0C291.5 327.0 344.6 342.5 356.0 347.0C367.4 351.5 402.5 369.5 410.0 375.0C417.5 380.5 434.2 403.1 438.0 407.0C441.8 410.9 450.7 417.0 452.0 418.0"/><path d="M438.0 407.0C439.3 408.0 449.5 416.0 452.0 418.0C454.5 420.0 464.7 428.0 466.0 429.0"/><path d="M466.0 429.0C470.2 428.4 504.9 423.4 512.0 422.0C519.1 420.6 539.6 414.1 544.0 413.6C548.4 413.1 558.5 416.7 560.0 417.0"/><path d="M466.0 429.0C466.5 430.4 471.9 439.7 472.0 444.0C472.1 448.3 467.1 470.5 467.0 476.0C466.9 481.5 469.1 499.7 471.0 504.0C472.9 508.3 484.7 520.0 488.0 523.5C491.3 527.0 503.9 539.4 507.3 542.8C510.7 546.2 522.9 557.8 525.2 560.7C527.5 563.6 530.6 572.0 532.1 574.5C533.6 577.0 539.9 586.2 541.8 588.3C543.7 590.4 551.8 597.1 552.8 598.0"/><path d="M506.5 212.3L511.0 213.0"/><path d="M614.0 289.6L627.0 283.6"/><path d="M495.0 340.0L495.0 343.0"/><path d="M475.0 360.5C476.0 360.6 484.4 361.4 486.0 362.0C487.6 362.6 492.4 366.5 493.0 367.0"/><path d="M570.0 332.0L571.5 332.6"/><path d="M779.5 262.8C781.4 262.4 795.9 258.8 800.0 258.0C804.1 257.2 820.9 254.4 824.6 254.1C828.3 253.8 838.9 254.5 840.3 254.5"/><path d="M840.3 254.5C842.1 253.9 857.4 249.2 860.0 248.3C862.6 247.4 867.5 245.4 868.5 245.0C869.5 244.6 871.0 244.1 871.5 244.2C872.0 244.3 873.7 245.7 874.5 246.5C875.3 247.3 878.8 252.0 880.0 253.0C881.2 254.0 886.5 256.3 888.0 257.0C889.5 257.7 895.3 259.3 897.0 260.5C898.7 261.7 905.3 268.0 907.0 270.0C908.7 272.0 914.5 280.5 916.0 283.0C917.5 285.5 922.1 294.7 923.0 297.0C923.9 299.3 925.7 305.0 926.0 308.0C926.3 311.0 926.1 326.0 926.0 330.0C925.9 334.0 925.2 347.8 924.4 352.0C923.6 356.2 918.3 371.8 917.0 376.0C915.7 380.2 911.0 394.2 910.0 398.0C909.0 401.8 906.4 416.2 906.0 418.0"/><path d="M841.0 255.0C840.7 255.9 838.1 263.2 837.8 264.8C837.5 266.4 836.9 271.4 837.4 273.1C837.9 274.8 842.3 282.1 842.8 283.0"/><path d="M789.0 277.5C789.8 277.7 796.3 279.2 797.9 280.0C799.5 280.8 805.2 284.9 806.6 286.3C808.0 287.7 811.5 293.5 812.9 295.1C814.3 296.7 821.4 301.6 821.7 303.9C822.0 306.2 817.3 317.1 816.7 320.2C816.1 323.3 816.2 335.7 815.4 337.8C814.6 339.9 809.7 342.1 807.9 342.8C806.1 343.5 797.0 344.6 795.4 345.3C793.8 346.0 790.8 348.9 790.3 350.3C789.8 351.7 790.5 359.1 790.3 361.0C790.1 362.9 788.6 368.7 787.8 371.3C787.0 373.9 782.5 388.0 781.6 390.1C780.7 392.2 778.1 393.6 777.8 393.9"/><path d="M969.0 326.4C969.8 326.7 976.4 328.9 978.0 330.0C979.6 331.1 986.5 336.1 987.0 339.0C987.5 341.9 982.5 356.9 984.0 362.0C985.5 367.1 1002.8 387.0 1003.0 395.0C1003.2 403.0 987.5 445.0 986.0 450.0"/><path d="M731.4 358.8C732.3 359.4 738.8 363.1 741.4 365.0C744.0 366.9 757.3 377.5 760.2 380.1C763.1 382.7 770.5 392.0 772.8 393.9C775.1 395.8 782.4 400.9 785.3 401.4C788.2 401.9 801.3 399.8 805.0 399.5C808.7 399.2 823.0 397.8 825.5 397.7C828.0 397.6 831.9 398.2 833.0 398.9C834.1 399.6 837.5 404.6 838.0 405.2"/><path d="M872.0 407.0L900.0 416.0"/><path d="M522.0 697.0C523.6 691.6 537.5 645.9 540.0 638.0C542.5 630.1 548.7 613.8 550.0 610.0C551.3 606.2 553.6 599.6 554.2 596.6C554.8 593.6 556.1 581.7 557.0 577.3C557.9 572.9 562.6 552.1 564.1 548.1C565.6 544.1 571.5 536.2 573.3 533.6C575.1 531.0 581.7 522.9 583.9 520.0C586.1 517.1 594.8 504.8 597.0 502.0C599.2 499.2 606.0 490.9 608.6 488.7C611.2 486.5 622.7 479.4 625.2 477.7C627.7 476.0 633.0 471.8 636.2 469.9C639.4 468.0 656.0 459.1 660.0 457.0C664.0 454.9 676.9 448.3 680.0 446.5C683.1 444.7 690.7 439.2 693.8 437.6C696.9 436.0 710.7 430.0 714.5 428.6C718.3 427.2 731.1 422.8 735.2 421.7C739.3 420.6 755.0 417.1 760.0 416.2C765.0 415.3 784.4 412.2 790.0 411.5C795.6 410.8 819.1 408.3 822.0 408.0"/><path d="M552.0 606.0C552.8 605.5 559.8 602.5 561.1 600.0C562.4 597.5 564.8 582.1 566.0 578.0C567.2 573.9 572.2 558.8 573.8 555.0C575.4 551.2 581.9 539.2 583.9 536.0C585.9 532.8 593.9 522.5 595.6 520.0C597.3 517.5 601.5 510.0 603.0 508.0C604.5 506.0 609.9 499.6 611.9 497.5C613.9 495.4 622.6 487.5 625.2 485.4C627.8 483.3 638.1 476.1 640.6 474.3C643.1 472.5 651.6 466.8 652.7 466.0"/><path d="M822.0 408.0C824.4 407.8 843.8 405.9 848.0 406.0C852.2 406.1 862.5 408.1 868.0 409.6C873.5 411.1 897.3 418.3 908.0 422.0C918.7 425.7 978.9 447.9 986.0 450.5"/><path d="M986.0 450.5L1030.0 467.0"/><path d="M1027.0 465.0L1031.0 466.5"/><path d="M1030.0 467.0C1032.3 467.8 1035.9 469.3 1055.0 476.0C1074.1 482.7 1223.2 534.6 1240.0 540.5"/><path d="M1064.0 479.0L1240.0 540.5"/><path d="M559.7 558.0C558.6 559.8 548.9 574.5 547.3 577.3C545.7 580.1 542.3 587.3 541.8 588.3"/><path d="M548.0 643.0L549.0 645.0"/><path d="M486.6 566.2C488.0 565.1 499.1 556.3 501.7 553.8C504.3 551.3 513.0 541.6 515.5 538.6C518.0 535.6 526.4 524.2 529.3 520.7C532.2 517.2 544.9 503.3 547.3 500.0C549.7 496.7 555.0 486.6 556.2 484.2C557.4 481.8 559.5 475.9 560.2 474.1C560.9 472.3 563.7 464.9 564.0 464.0"/><path d="M515.5 538.6C517.0 539.4 529.2 545.5 532.1 546.9C535.0 548.3 544.8 552.8 547.3 553.8C549.8 554.8 558.6 557.6 559.7 558.0"/><path d="M552.8 546.9L562.5 551.0"/><path d="M825.0 530.0C825.2 530.4 825.4 535.4 827.0 534.0C828.6 532.6 841.5 516.7 843.0 515.0"/><path d="M892.0 581.0C891.4 581.3 887.4 581.0 885.0 584.0C882.6 587.0 867.0 610.6 866.0 614.4C865.0 618.2 872.9 624.2 874.0 626.0C875.1 627.8 875.8 631.5 878.0 634.0C880.2 636.5 895.7 651.7 898.0 653.0C900.3 654.3 902.5 648.5 903.0 648.0"/><path d="M889.0 644.0L898.0 644.0"/><path d="M1206.0 626.6L1240.0 600.0"/><path d="M686.0 517.0C687.5 519.1 698.5 536.5 702.0 540.0C705.5 543.5 719.9 554.1 724.0 556.0C728.1 557.9 744.9 560.5 747.0 561.0"/><path d="M591.5 410.2L608.8 429.6"/><path d="M674.8 416.8L684.0 427.4"/><path d="M615.6 455.9L633.9 440.3"/><path d="M624.1 425.1L633.4 435.5"/><path d="M552.5 402.9L562.8 415.1"/><path d="M663.0 424.1L670.5 417.6"/><path d="M626.0 370.4L630.0 374.9"/><path d="M672.9 423.5L683.5 435.5"/><path d="M735.5 353.7L744.6 345.9"/><path d="M580.8 444.3L591.2 456.5"/><path d="M674.4 434.0L701.4 410.2"/><path d="M626.3 380.6L638.2 394.1"/><path d="M623.2 397.4L644.4 379.1"/><path d="M643.7 461.0L669.2 438.5"/><path d="M725.1 345.1L734.3 355.6"/><path d="M685.1 361.9L692.9 371.0"/><path d="M645.3 382.6L662.3 402.3"/><path d="M593.1 463.1L632.2 428.8"/><path d="M637.6 424.2L661.6 403.1"/><path d="M610.3 399.6L649.5 365.4"/><path d="M589.2 433.0L606.0 452.9"/><path d="M705.2 372.1L715.7 384.2"/><path d="M551.0 412.7L558.6 406.2"/><path d="M711.0 365.3L725.3 381.9"/><path d="M705.2 347.7L711.8 355.2"/><path d="M610.0 423.9L617.8 433.0"/><path d="M621.2 454.9L629.2 463.8"/><path d="M687.4 360.1L697.9 350.9"/><path d="M622.1 460.0L635.6 448.1"/><path d="M624.3 404.2L633.4 414.8"/><path d="M679.4 387.6L683.9 383.6"/><path d="M558.3 425.4L576.5 409.7"/><path d="M635.6 397.7L667.5 370.4"/><path d="M711.9 359.1L732.9 340.7"/><path d="M581.1 453.6L623.2 416.6"/><path d="M642.7 399.2L657.3 415.7"/><path d="M622.6 380.9L636.2 369.1"/><path d="M627.9 412.4L677.5 368.8"/><path d="M564.9 430.5L613.4 388.8"/><path d="M659.3 445.0L663.2 449.6"/><path d="M661.5 437.4L669.3 446.6"/><path d="M634.0 369.6L644.5 381.7"/><path d="M680.0 364.6L686.6 372.1"/><path d="M584.3 459.9L610.1 437.8"/><path d="M589.9 447.1L601.6 460.8"/><path d="M721.6 392.4L727.6 387.1"/><path d="M642.6 415.3L647.8 421.4"/><path d="M650.7 398.4L667.9 417.8"/><path d="M719.7 388.9L723.7 393.4"/><path d="M599.6 386.3L606.2 393.8"/><path d="M651.9 401.9L682.3 375.9"/><path d="M644.3 368.2L648.3 372.8"/><path d="M575.4 416.6L589.6 433.4"/><path d="M711.2 393.7L724.9 382.0"/><path d="M587.4 397.4L604.3 417.2"/><path d="M609.5 438.2L646.0 407.0"/><path d="M661.8 435.8L701.4 402.0"/><path d="M677.5 397.0L697.1 419.7"/><path d="M712.7 343.2L730.0 362.6"/><path d="M668.0 369.8L686.3 354.2"/><path d="M689.8 354.4L705.5 372.5"/><path d="M628.7 399.1L636.5 408.2"/><path d="M599.6 430.6L618.2 451.5"/><path d="M677.6 403.0L692.8 390.1"/><path d="M669.3 360.8L681.3 374.3"/><path d="M577.6 405.9L593.5 423.8"/><path d="M699.7 387.1L706.3 394.6"/><path d="M568.3 436.3L610.5 399.5"/><path d="M657.5 373.8L670.6 388.9"/><path d="M614.1 435.6L635.4 459.5"/><path d="M612.0 400.3L633.3 424.2"/><path d="M698.6 350.9L709.1 363.0"/><path d="M580.4 445.1L632.0 400.8"/><path d="M698.5 385.2L727.4 360.6"/><path d="M646.5 377.3L666.2 360.4"/><path d="M671.5 376.3L684.6 391.4"/><path d="M593.3 344.0L606.5 332.1"/><path d="M588.3 340.2L588.9 340.8"/><path d="M590.2 342.7C592.5 345.2 600.2 353.6 604.0 357.8C607.7 362.0 611.3 366.1 612.8 367.8"/><path d="M601.5 362.8C604.2 361.1 614.8 355.9 617.8 352.8C620.7 349.6 618.8 345.4 619.0 344.0"/><path d="M625.3 330.2L641.6 326.4"/><path d="M619.0 333.3L625.3 344.0"/><path d="M625.3 330.2C626.3 332.5 629.9 339.8 631.6 344.0C633.2 348.2 634.7 353.4 635.3 355.3"/><path d="M632.8 336.4L645.4 333.9"/><path d="M631.6 345.2L646.6 341.5"/><path d="M630.3 355.3C632.8 354.4 641.4 352.1 645.4 350.2C649.3 348.4 652.7 345.0 654.2 344.0"/><path d="M641.6 326.4C642.0 328.3 641.8 332.9 644.1 337.7C646.4 342.5 653.5 352.3 655.4 355.3"/><path d="M646.6 321.4C647.5 323.7 650.4 331.4 651.6 335.2C652.9 339.0 653.7 342.5 654.2 344.0"/><path d="M654.2 323.9L660.4 337.7"/><path d="M661.7 315.1C662.3 317.2 664.0 324.3 665.5 327.7C666.9 331.0 669.6 333.9 670.5 335.2"/><path d="M671.7 312.6L675.5 326.4"/><path d="M671.7 312.6L693.1 306.3"/><path d="M678.0 320.1L695.6 315.1"/><path d="M678.0 320.1C679.3 321.0 681.9 323.7 685.5 325.2C689.2 326.6 697.6 328.3 700.0 328.9"/><path d="M693.1 306.3L700.0 326.4"/><path d="M695.6 292.5L700.0 302.6"/><path d="M651.6 360.3C654.8 357.6 665.2 348.2 670.5 344.0C675.7 339.8 680.9 336.7 683.0 335.2"/><path d="M668.0 333.9C670.3 334.6 677.8 335.4 681.8 337.7C685.7 340.0 690.1 346.1 691.8 347.7"/><path d="M640.4 365.3C642.7 363.4 650.0 357.6 654.2 354.0C658.3 350.5 663.6 345.6 665.5 344.0"/><path d="M607.7 371.6L615.3 365.3"/><path d="M670.5 360.3C672.6 361.1 680.3 365.3 683.0 365.3C685.7 365.3 686.2 361.1 686.8 360.3"/><path d="M683.0 351.5C684.5 350.9 689.0 347.1 691.8 347.7C694.6 348.4 698.6 354.0 700.0 355.3"/><path d="M693.1 337.7L700.0 344.0"/><path d="M645.4 365.3L657.9 376.0"/><path d="M657.9 360.3L670.5 376.0"/><path d="M700.0 292.5L706.9 290.0"/><path d="M721.3 342.8L748.3 308.3"/><path d="M748.3 308.3C750.1 309.6 756.1 313.8 759.0 316.4C761.8 319.0 764.4 321.2 765.2 324.0C766.1 326.7 765.7 329.8 764.0 332.7C762.3 335.7 758.1 340.7 755.2 341.5C752.3 342.4 747.9 338.4 746.4 337.8"/><path d="M733.9 327.7L755.2 341.5"/><path d="M731.4 346.5L750.2 320.2"/><path d="M759.0 308.9L780.3 286.3"/><path d="M755.2 293.8C757.4 291.1 764.2 278.8 768.4 277.5C772.6 276.3 777.9 283.6 780.3 286.3C782.7 289.0 782.4 292.6 782.8 293.8"/><path d="M755.2 293.8C756.9 295.1 761.9 301.8 765.2 301.4C768.6 300.9 773.6 293.0 775.3 291.3"/><path d="M770.3 293.8L780.3 300.1"/><path d="M765.2 322.7C767.3 320.0 775.3 309.9 777.8 306.4C780.3 302.8 779.9 302.2 780.3 301.4"/><path d="M780.3 311.4C781.6 309.3 784.9 300.3 787.8 298.9C790.8 297.4 794.5 300.3 797.9 302.6C801.2 304.9 807.1 308.9 807.9 312.7C808.7 316.4 805.4 323.5 802.9 325.2C800.4 326.9 794.5 323.1 792.8 322.7"/><path d="M782.8 317.7C783.6 316.0 785.1 309.3 787.8 307.6C790.5 306.0 797.2 307.6 799.1 307.6"/><path d="M792.8 322.7C793.5 321.2 794.3 314.8 796.6 313.9C798.9 313.1 805.0 317.1 806.6 317.7"/><path d="M760.2 322.7L766.5 318.9"/><path d="M702.5 303.9C705.4 302.2 715.3 292.6 720.1 293.8C724.9 295.1 729.5 308.5 731.4 311.4"/><path d="M707.5 305.1L712.5 316.4"/><path d="M700.0 313.9C701.3 315.4 706.7 320.0 707.5 322.7C708.4 325.4 705.4 329.0 705.0 330.2"/><path d="M721.3 306.4L726.3 307.6"/><path d="M707.5 344.0L728.9 361.0"/><path d="M700.0 341.5L707.5 344.0"/><path d="M700.0 357.8C701.3 356.8 704.8 353.4 707.5 351.6C710.2 349.7 714.8 347.4 716.3 346.5"/><path d="M728.9 352.8C730.1 351.6 734.7 345.7 736.4 345.3C738.1 344.9 739.5 348.6 738.9 350.3C738.3 352.0 733.7 354.5 732.6 355.3"/><path d="M712.5 361.0L721.3 351.6"/><path d="M700.0 292.6L705.0 298.9"/><path d="M697.5 322.7L703.8 335.2"/><path d="M700.0 355.0C702.7 357.7 712.3 367.5 716.3 371.3C720.3 375.1 722.6 376.5 723.8 377.6"/><path d="M735.1 361.3C733.0 364.2 728.4 371.5 722.6 378.8C716.7 386.2 703.8 400.8 700.0 405.2"/><path d="M728.9 358.8L735.1 361.3"/><path d="M716.3 355.0L728.9 366.3"/><path d="M707.5 366.3L716.3 373.8"/><path d="M700.0 390.1L711.3 377.6"/><path d="M723.8 388.9C724.7 389.7 726.6 392.6 728.9 393.9C731.2 395.2 733.7 395.6 737.6 396.4C741.6 397.2 748.7 398.1 752.7 398.9C756.7 399.8 760.0 401.0 761.5 401.4"/><path d="M728.9 396.4C728.6 398.5 725.5 406.7 727.6 409.0C729.7 411.3 737.2 410.8 741.4 410.2C745.6 409.6 748.3 408.1 752.7 405.2C757.1 402.3 765.2 394.7 767.8 392.6"/><path d="M736.4 396.4L735.8 415.2"/><path d="M747.7 401.4C747.1 399.5 743.7 393.9 743.9 390.1C744.1 386.4 746.6 379.9 748.9 378.8C751.2 377.8 754.6 381.6 757.7 383.9C760.9 386.2 766.1 391.2 767.8 392.6"/><path d="M752.7 396.4C752.3 395.2 750.0 391.0 750.2 388.9C750.4 386.8 752.3 383.9 754.0 383.9C755.6 383.9 759.2 388.0 760.2 388.9"/><path d="M757.7 392.6L759.0 388.9"/><path d="M700.0 414.0C701.3 414.2 705.9 414.2 707.5 415.2C709.2 416.3 709.6 419.4 710.0 420.2"/><path d="M703.8 410.2L705.0 420.2"/><path d="M633.9 464.5C635.3 466.2 639.7 470.8 642.7 474.5C645.6 478.3 649.4 483.1 651.4 487.1C653.5 491.1 653.5 493.8 655.2 498.4C656.9 503.0 659.8 511.4 661.5 514.7C663.2 518.0 664.6 517.8 665.2 518.5"/><path d="M675.3 479.6C676.3 482.5 680.3 491.3 681.6 497.1C682.8 503.0 682.6 511.8 682.8 514.7"/><path d="M690.3 488.3L697.9 509.7"/><path d="M641.4 490.9L645.2 507.2"/><path d="M655.2 483.3L682.8 475.8"/><path d="M641.4 490.9L687.8 480.8"/><path d="M625.1 498.4L690.3 488.3"/><path d="M642.7 499.6C650.8 498.4 681.3 493.4 691.6 492.1C701.8 490.9 702.0 492.1 704.1 492.1"/><path d="M643.9 505.9L695.4 498.4"/><path d="M650.2 510.9C655.2 509.9 672.4 505.7 680.3 504.7C688.2 503.6 694.9 504.7 697.9 504.7"/><path d="M667.8 516.0L680.3 508.4"/><path d="M706.6 474.5C707.1 476.2 708.1 481.2 709.2 484.6C710.2 487.9 711.0 490.0 712.9 494.6C714.8 499.2 718.4 507.6 720.5 512.2C722.5 516.8 724.6 520.6 725.5 522.2"/><path d="M706.6 474.5C709.0 476.0 716.9 479.1 720.5 483.3C724.0 487.5 726.1 494.2 728.0 499.6C729.9 505.1 732.2 510.9 731.7 516.0C731.3 521.0 727.8 527.0 725.5 529.8C723.2 532.5 719.2 531.8 717.9 532.3"/><path d="M699.1 483.3C701.0 483.3 708.5 482.3 710.4 483.3C712.3 484.4 710.4 488.6 710.4 489.6"/><path d="M704.1 493.4L726.7 500.9"/><path d="M710.4 508.4L720.5 507.2"/><path d="M710.4 508.4L712.9 522.2"/><path d="M702.9 534.8L720.5 526.0"/><path d="M670.3 517.2C673.2 518.0 682.4 519.3 687.8 522.2C693.3 525.2 696.6 529.6 702.9 534.8C709.2 539.9 721.7 549.9 725.5 553.0"/><path d="M687.8 512.2C689.9 513.0 696.8 514.7 700.4 517.2C703.9 519.7 707.7 525.6 709.2 527.2"/><path d="M681.6 524.7L696.6 532.3"/><path d="M630.1 502.2C628.2 503.2 621.3 505.3 618.8 508.4C616.3 511.6 615.9 516.2 615.1 521.0C614.2 525.8 613.4 532.5 613.8 537.3C614.2 542.1 616.9 547.7 617.6 549.8"/><path d="M632.6 507.2C631.2 508.2 625.5 510.1 623.8 513.4C622.2 516.8 622.2 523.9 622.6 527.2C623.0 530.6 624.3 533.5 626.3 533.5C628.4 533.5 633.7 528.3 635.1 527.2"/><path d="M628.9 521.0C629.3 520.3 629.3 516.6 631.4 517.2C633.5 517.8 637.4 521.6 641.4 524.7C645.4 527.9 651.2 532.9 655.2 536.0C659.2 539.2 661.9 540.7 665.2 543.6C668.6 546.4 673.6 551.4 675.3 553.0"/><path d="M618.8 539.8C619.2 541.0 619.7 545.1 621.3 547.3C623.0 549.5 627.6 552.0 628.9 553.0"/><path d="M625.1 537.3L637.6 549.8"/><path d="M635.1 542.3C637.0 541.0 643.3 534.8 646.4 534.8C649.6 534.8 654.4 539.8 654.0 542.3C653.5 544.8 645.6 548.6 643.9 549.8"/><path d="M650.2 518.5C650.8 519.5 652.3 525.4 654.0 524.7C655.6 524.1 659.2 516.4 660.2 514.7"/><path d="M660.2 532.3L666.5 514.7"/><path d="M656.5 547.3L662.7 548.6"/><path d="M670.3 545.0C670.7 546.3 672.2 550.0 672.8 552.5C673.4 555.0 673.9 558.8 674.1 560.1"/><path d="M615.1 545.0C616.3 545.8 619.7 549.2 622.6 550.0C625.5 550.9 629.3 550.9 632.7 550.0C636.0 549.2 641.0 545.8 642.7 545.0"/><path d="M637.7 545.0C638.1 546.3 638.3 550.2 640.2 552.5C642.1 554.8 645.6 555.9 649.0 558.8C652.3 561.7 657.5 567.0 660.3 570.1C663.0 573.2 664.0 574.9 665.3 577.6C666.5 580.3 667.2 582.6 667.8 586.4C668.4 590.2 668.8 597.9 669.0 600.2"/><path d="M650.2 547.5L660.3 550.0"/><path d="M621.4 566.3L637.7 552.5"/><path d="M626.4 570.1L642.7 557.5"/><path d="M630.2 575.1L646.5 562.6"/><path d="M632.7 580.1L650.2 570.1"/><path d="M621.4 566.3L632.7 580.1"/><path d="M638.9 582.6C637.7 584.7 633.7 591.6 631.4 595.2C629.1 598.7 626.2 602.5 625.1 604.0"/><path d="M659.6 582.6L665.3 593.3"/><path d="M640.2 587.7C642.3 588.7 649.4 591.2 652.7 593.9C656.1 596.7 658.2 600.8 660.3 604.0C662.4 607.1 664.4 611.3 665.3 612.8"/><path d="M637.7 595.2L646.5 599.0"/><path d="M655.2 595.2C653.8 597.3 649.0 604.4 646.5 607.7C644.0 611.1 641.2 614.0 640.2 615.3"/><path d="M639.6 608.4L640.2 610.2"/><path d="M670.3 604.0C672.8 602.9 681.6 599.6 685.4 597.7C689.1 595.8 691.6 593.5 692.9 592.7"/><path d="M671.6 610.2L689.1 602.7"/><path d="M670.3 616.5L690.4 609.0"/><path d="M692.9 592.7C693.5 593.9 697.1 597.5 696.6 600.2C696.2 602.9 691.4 607.5 690.4 609.0"/><path d="M665.3 612.8C665.1 615.1 664.0 622.7 664.0 626.6C664.0 630.4 665.1 634.4 665.3 636.0"/><path d="M670.3 604.0C670.5 606.7 671.6 614.9 671.6 620.3C671.6 625.6 670.5 633.4 670.3 636.0"/><path d="M625.1 605.2C622.2 609.6 610.7 626.5 607.6 631.6C604.4 636.7 606.5 635.2 606.3 636.0"/><path d="M631.4 607.7L615.1 630.3"/><path d="M615.1 624.0C617.8 623.4 625.5 621.3 631.4 620.3C637.3 619.2 645.8 619.9 650.2 617.8C654.6 615.7 656.5 609.4 657.8 607.7"/><path d="M628.9 615.3C629.5 616.9 631.6 621.9 632.7 625.3C633.7 628.8 634.8 634.2 635.2 636.0"/><path d="M622.6 626.6C626.0 626.3 636.4 625.9 642.7 625.3C649.0 624.7 657.3 623.2 660.3 622.8"/><path d="M618.9 632.8C622.4 632.4 633.7 631.2 640.2 630.3C646.7 629.5 654.8 628.2 657.8 627.8"/><path d="M645.2 625.3L647.7 636.0"/><path d="M652.7 625.3L655.2 636.0"/><path d="M608.8 635.1C608.0 636.2 602.1 638.0 603.8 641.4C605.5 644.7 615.7 651.4 618.9 655.2C622.0 659.0 622.0 662.5 622.6 664.0"/><path d="M620.1 642.6C621.4 645.2 624.7 654.8 627.6 657.7C630.6 660.6 630.6 662.7 637.7 660.2C644.8 657.7 664.7 647.2 670.3 642.6C675.9 638.0 671.3 634.3 671.6 632.6"/><path d="M623.9 636.4C625.3 638.9 629.9 648.5 632.7 651.4C635.4 654.4 634.3 656.0 640.2 653.9C646.0 651.8 663.2 641.4 667.8 638.9"/><path d="M627.6 633.9C633.9 631.1 658.2 622.4 665.3 617.5C672.4 612.7 669.5 607.1 670.3 605.0"/><path d="M631.4 640.1L665.3 625.1"/><path d="M633.9 646.4L667.8 632.6"/><path d="M633.9 620.1C636.0 624.4 642.9 639.7 646.5 646.4C650.0 653.1 653.8 657.9 655.2 660.2"/><path d="M642.7 617.5L652.7 637.6"/><path d="M650.2 625.1L656.5 636.4"/><path d="M655.2 622.6L661.5 633.9"/><path d="M608.8 635.1L627.6 607.5"/><path d="M615.1 630.1L631.4 605.0"/><path d="M617.6 627.6C623.0 625.1 643.1 616.3 650.2 612.5C657.3 608.8 658.6 606.3 660.3 605.0"/><path d="M664.0 605.0C664.2 607.1 665.5 613.4 665.3 617.5C665.1 621.7 663.2 628.0 662.8 630.1"/><path d="M670.3 605.0L671.6 632.6"/><path d="M671.6 612.5L690.4 605.0"/><path d="M675.3 621.3L691.6 612.5"/><path d="M606.3 642.6L621.4 657.7"/><path d="M612.6 643.9L626.4 660.2"/><path d="M568.1 374.5L584.6 396.0"/><path d="M578.0 366.3L596.2 389.4"/><path d="M558.1 382.8L573.0 402.7"/><path d="M548.2 387.8L584.6 361.3"/><path d="M548.2 387.8L563.1 409.3"/><path d="M554.8 392.7L584.6 371.2"/><path d="M559.8 399.3L587.9 379.5"/><path d="M564.7 406.0L592.9 386.1"/><path d="M584.6 361.3L599.5 381.1"/><path d="M619.0 512.0C618.7 514.7 616.7 523.0 617.0 528.0C617.3 533.0 620.3 539.7 621.0 542.0"/><path d="M627.0 510.0C626.8 513.3 625.2 525.0 626.0 530.0C626.8 535.0 631.0 538.3 632.0 540.0"/><path d="M636.0 515.0L640.0 530.0"/><path d="M645.0 520.0L655.0 530.0"/><path d="M612.0 640.0L640.0 627.0"/><path d="M616.0 646.0L648.0 632.0"/><path d="M622.0 652.0L656.0 636.0"/><path d="M610.0 634.0L632.0 622.0"/><path d="M640.0 612.0L668.0 600.0"/><path d="M644.0 618.0L670.0 607.0"/><path d="M628.0 598.0L640.0 604.0"/><path d="M634.0 590.0L650.0 597.0"/><path d="M554.2 450.1L584.2 470.1"/><path d="M560.2 474.1C561.5 472.8 565.2 468.8 568.2 466.1C571.2 463.5 576.6 459.4 578.2 458.1"/><path d="M562.2 476.1L582.2 486.2"/><path d="M564.2 490.2C566.2 488.5 572.9 480.5 576.2 480.1C579.6 479.8 584.6 485.5 584.2 488.2C583.9 490.8 575.9 494.8 574.2 496.2"/><path d="M568.2 494.2L580.2 484.2"/></g></g><path d="M688 455.400L705 451" stroke="#5a3a10" stroke-width="3.400" stroke-linecap="square"/><path d="M688 455.400L705 451" stroke="#ff9d14" stroke-width="2.200" stroke-linecap="square"/><g fill="#4a3018"><rect x="656.0" y="197.0" width="1.600" height="1.400"/><rect x="633.6" y="210.0" width="1.600" height="1.400"/><rect x="622.0" y="227.4" width="1.600" height="1.400"/><rect x="629.0" y="227.0" width="1.600" height="1.400"/><rect x="625.0" y="234.0" width="1.600" height="1.400"/><rect x="630.0" y="234.0" width="1.600" height="1.400"/><rect x="634.0" y="235.0" width="1.600" height="1.400"/><rect x="631.0" y="237.0" width="1.600" height="1.400"/><rect x="649.6" y="240.6" width="1.600" height="1.400"/><rect x="652.0" y="243.4" width="1.600" height="1.400"/><rect x="653.0" y="246.0" width="1.600" height="1.400"/><rect x="685.6" y="250.0" width="1.600" height="1.400"/><rect x="697.6" y="249.0" width="1.600" height="1.400"/><rect x="699.0" y="253.0" width="1.600" height="1.400"/><rect x="703.6" y="251.0" width="1.600" height="1.400"/><rect x="704.0" y="255.0" width="1.600" height="1.400"/><rect x="705.0" y="257.0" width="1.600" height="1.400"/><rect x="669.6" y="264.4" width="1.600" height="1.400"/><rect x="502.0" y="320.0" width="1.600" height="1.400"/><rect x="503.0" y="321.0" width="1.600" height="1.400"/><rect x="499.6" y="327.0" width="1.600" height="1.400"/><rect x="497.0" y="331.6" width="1.600" height="1.400"/><rect x="498.0" y="332.0" width="1.600" height="1.400"/><rect x="487.0" y="374.0" width="1.600" height="1.400"/><rect x="522.0" y="378.6" width="1.600" height="1.400"/><rect x="525.0" y="391.0" width="1.600" height="1.400"/><rect x="529.0" y="392.0" width="1.600" height="1.400"/><rect x="535.0" y="392.4" width="1.600" height="1.400"/><rect x="537.6" y="391.6" width="1.600" height="1.400"/><rect x="519.0" y="429.6" width="1.600" height="1.400"/><rect x="509.0" y="449.6" width="1.600" height="1.400"/><rect x="510.4" y="451.0" width="1.600" height="1.400"/><rect x="507.0" y="455.4" width="1.600" height="1.400"/><rect x="465.0" y="508.0" width="1.600" height="1.400"/><rect x="467.0" y="509.0" width="1.600" height="1.400"/><rect x="486.0" y="508.0" width="1.600" height="1.400"/><rect x="491.0" y="511.0" width="1.600" height="1.400"/><rect x="468.0" y="530.0" width="1.600" height="1.400"/><rect x="470.0" y="527.6" width="1.600" height="1.400"/><rect x="1068.0" y="355.6" width="1.600" height="1.400"/><rect x="1070.4" y="359.0" width="1.600" height="1.400"/><rect x="1070.8" y="362.0" width="1.600" height="1.400"/><rect x="1070.8" y="364.4" width="1.600" height="1.400"/><rect x="1057.0" y="379.0" width="1.600" height="1.400"/><rect x="1058.0" y="379.6" width="1.600" height="1.400"/><rect x="1063.0" y="383.0" width="1.600" height="1.400"/><rect x="1067.0" y="382.4" width="1.600" height="1.400"/><rect x="1081.6" y="417.6" width="1.600" height="1.400"/><rect x="766.0" y="263.0" width="1.600" height="1.400"/><rect x="769.0" y="259.0" width="1.600" height="1.400"/><rect x="770.0" y="255.0" width="1.600" height="1.400"/><rect x="770.4" y="251.0" width="1.600" height="1.400"/><rect x="702.0" y="253.0" width="1.600" height="1.400"/><rect x="705.0" y="256.0" width="1.600" height="1.400"/><rect x="534.0" y="564.0" width="1.600" height="1.400"/><rect x="497.0" y="567.6" width="1.600" height="1.400"/><rect x="540.0" y="556.0" width="1.600" height="1.400"/><rect x="699.0" y="449.4" width="1.600" height="1.400"/><rect x="514.0" y="581.0" width="1.600" height="1.400"/><rect x="518.0" y="583.0" width="1.600" height="1.400"/><rect x="515.0" y="585.0" width="1.600" height="1.400"/><rect x="571.0" y="337.0" width="1.600" height="1.400"/><rect x="574.0" y="338.0" width="1.600" height="1.400"/></g><rect x="516" y="580" width="2.600" height="2.200" fill="#ff9d14" stroke="#5a3a10" stroke-width="0.400"/><rect x="488" y="513" width="2.600" height="2.200" fill="#ff9d14" stroke="#5a3a10" stroke-width="0.400"/><rect x="704" y="254" width="2.600" height="2.200" fill="#ff9d14" stroke="#5a3a10" stroke-width="0.400"/><rect x="899" y="254" width="2.600" height="2.200" fill="#ff9d14" stroke="#5a3a10" stroke-width="0.400"/></svg><div class="a" style="left:1236.500px;top:169px;width:1.500px;height:525px;background:#c9c5bf"></div>
<div class="a" style="left:0;top:694px;width:1238px;height:31px;background:#efebe7"></div><div class="box" style="left:4px;top:697px;width:268px;height:25px;border-color:#b0aba4"></div><svg class="a" style="left:13px;top:703px;width:12px;height:12px" viewBox="0 0 12 12"><circle cx="4.6" cy="4.6" r="3.6" fill="none" stroke="#8a8782" stroke-width="1.4"/><path d="M7.3 7.3L11 11" stroke="#8a8782" stroke-width="1.6" stroke-linecap="round"/></svg><div class="t" style="left:33.5px;top:701.5px;font-size:15px;letter-spacing:0.062px;color:#8b8b8b;">Type to locate (Ctrl+K)</div><div class="t" style="left:328.3px;top:703.0px;font-size:12.5px;letter-spacing:-0.250px;color:#1a1a1a;">Coordinate</div><div class="box" style="left:390px;top:698px;width:121px;height:23px"></div><div class="t" style="left:399.0px;top:703.0px;font-size:12.5px;letter-spacing:-0.264px;color:#1a1a1a;">2271541,-4028794</div><svg class="a" style="left:514.5px;top:701.5px;width:16px;height:16px;overflow:visible" viewBox="0 0 16 16"><path d="M3.500 2.500l10 10M13 2.500l-9.500 10" stroke="#555" stroke-width="0.900"/><ellipse cx="8.500" cy="10" rx="3.800" ry="4.800" transform="rotate(-30 8.500 10)" fill="#e9e9e9" stroke="#444" stroke-width="1"/><path d="M5.500 6.500l6 2.500" stroke="#444" stroke-width="0.800"/><path d="M1.500 4l2.500-2.500M3 6.500l3-3" stroke="#444" stroke-width="0.900"/></svg><div class="t" style="left:543.8px;top:703.0px;font-size:12.5px;letter-spacing:-1.017px;color:#1a1a1a;">Scale</div><div class="box" style="left:574px;top:698px;width:95px;height:23px"></div><div class="a" style="left:649px;top:699px;width:1px;height:21px;background:#d4d0ca"></div><div class="dd" style="left:655px;top:708px;border-left-width:4px;border-right-width:4px;border-top-width:4.5px;border-top-color:#4a4a4a"></div><div class="t" style="left:577.8px;top:703.0px;font-size:12.5px;letter-spacing:-0.281px;color:#1a1a1a;">1:51359</div><svg class="a" style="left:680.5px;top:701px;width:16px;height:16px;overflow:visible" viewBox="0 0 16 16"><path d="M4.500 7v-2.500a3.500 3.500 0 0 1 7 0v2.500" fill="none" stroke="#6a6a6a" stroke-width="1.700"/><rect x="2" y="7" width="12" height="8.500" rx="1.200" fill="#5f5f5f"/><path d="M2.500 9.500h11M2.500 12h11" stroke="#777" stroke-width="0.700"/></svg><div class="t" style="left:702.5px;top:703.0px;font-size:12.5px;letter-spacing:0.011px;color:#1a1a1a;">Magnifier</div><div class="box" style="left:757px;top:698px;width:97.5px;height:23px"></div><div class="a" style="left:840px;top:699px;width:1px;height:21px;background:#d4d0ca"></div><svg class="a" style="left:843.25px;top:703px;width:8px;height:13px" viewBox="0 0 8 13"><path d="M0 5L4 0.5L8 5zM0 8L4 12.5L8 8z" fill="#4a4a4a"/></svg><div class="t" style="left:763.6px;top:703.0px;font-size:12.5px;letter-spacing:-1.190px;color:#1a1a1a;">100%</div><div class="t" style="left:863.0px;top:703.0px;font-size:12.5px;letter-spacing:-0.008px;color:#1a1a1a;">Rotation</div><div class="box" style="left:918px;top:698px;width:94px;height:23px"></div><div class="a" style="left:997.5px;top:699px;width:1px;height:21px;background:#d4d0ca"></div><svg class="a" style="left:1000.75px;top:703px;width:8px;height:13px" viewBox="0 0 8 13"><path d="M0 5L4 0.5L8 5zM0 8L4 12.5L8 8z" fill="#4a4a4a"/></svg><div class="t" style="left:923.0px;top:703.0px;font-size:12.5px;letter-spacing:-0.637px;color:#1a1a1a;">0,0 °</div><div class="cb" style="left:1018.3px;top:702px"></div><svg class="a" style="left:1018.3px;top:702px;width:14px;height:14px" viewBox="0 0 14 14"><path d="M3.2 7.2l2.4 3.2 4.8-7" fill="none" stroke="#111" stroke-width="1.9" stroke-linecap="round" stroke-linejoin="round"/></svg><div class="t" style="left:1037.5px;top:703.0px;font-size:12.5px;letter-spacing:-0.440px;color:#1a1a1a;">Render</div><svg class="a" style="left:1094px;top:701.5px;width:16px;height:16px;overflow:visible" viewBox="0 0 16 16"><circle cx="8" cy="9" r="6.500" fill="#f4f4f4" stroke="#666" stroke-width="0.900"/><path d="M1.500 9h13M2.500 5.500h11M2.500 12.500h11M8 2.500v13" stroke="#666" stroke-width="0.700"/><ellipse cx="8" cy="9" rx="3.200" ry="6.500" fill="none" stroke="#666" stroke-width="0.700"/><path d="M3 4l5-3l5 3" fill="none" stroke="#666" stroke-width="0.900"/></svg><div class="t" style="left:1114.4px;top:703.0px;font-size:12.5px;letter-spacing:-1.052px;color:#1a1a1a;">EPSG:3857</div><svg class="a" style="left:1192px;top:702px;width:16px;height:16px;overflow:visible" viewBox="0 0 16 16"><path d="M8.200 0.800c4.300 0 7.600 2.700 7.600 6.200c0 2.300-1.500 4.300-3.700 5.300l1.200 3.400l-4-2.600q-.600 .100-1.100 .100c-4.300 0-7.700-2.700-7.700-6.200c0-3.500 3.400-6.200 7.700-6.200z" fill="#6a6a6a"/><circle cx="4.800" cy="7" r="1.100" fill="#fff"/><circle cx="8.200" cy="7" r="1.100" fill="#fff"/><circle cx="11.600" cy="7" r="1.100" fill="#fff"/></svg><svg class="a" style="left:1222px;top:708px;width:16px;height:16px" viewBox="0 0 16 16"><g fill="#c9c5bf"><circle cx="13" cy="13" r="1"/><circle cx="9" cy="13" r="1"/><circle cx="5" cy="13" r="1"/><circle cx="13" cy="9" r="1"/><circle cx="9" cy="9" r="1"/><circle cx="13" cy="5" r="1"/></g></svg>
</body></html>
